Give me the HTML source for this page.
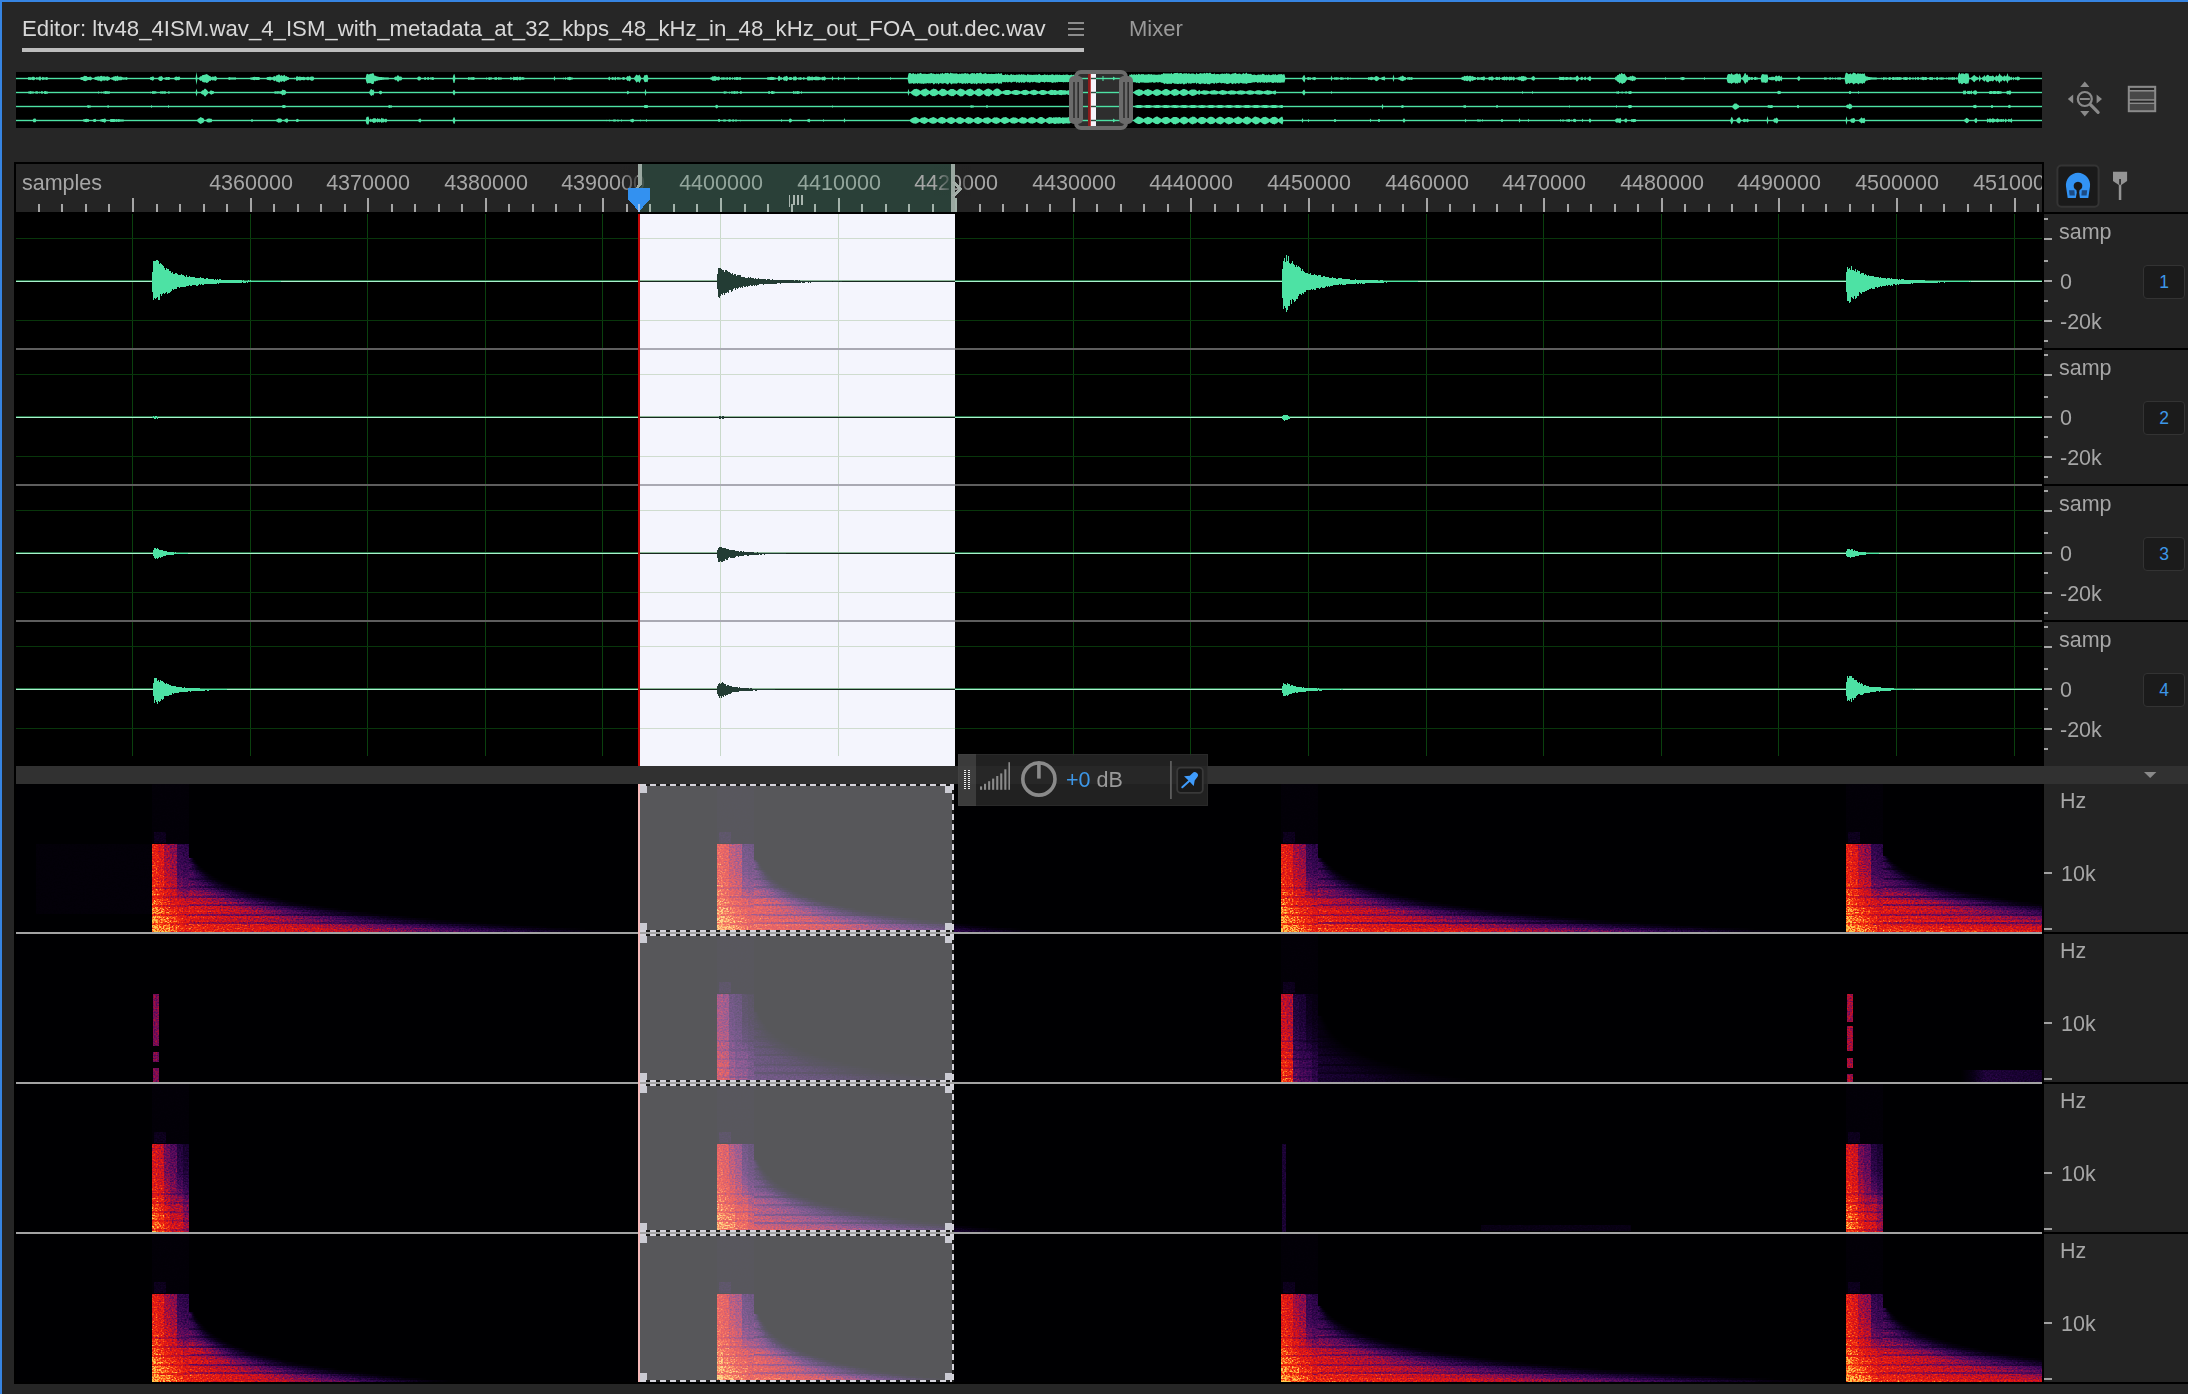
<!DOCTYPE html><html><head><meta charset="utf-8"><title>Editor</title><style>
*{box-sizing:border-box;margin:0;padding:0}
html,body{width:2188px;height:1394px;overflow:hidden;background:#262626}
body{position:relative;font-family:"Liberation Sans",sans-serif;color:#a6a6a6;font-size:21.5px}
.a{position:absolute}
.t{position:absolute;white-space:nowrap;line-height:1;will-change:transform}
svg{position:absolute;left:0;top:0;overflow:visible}
</style></head><body>
<div class="a" style="left:0;top:0;width:2188px;height:2px;background:#3684e2"></div>
<div class="a" style="left:0;top:0;width:2px;height:1394px;background:#3684e2"></div>
<div class="t" id="title" style="left:22px;top:18px;font-size:22.2px;color:#d8d8d8">Editor: ltv48_4ISM.wav_4_ISM_with_metadata_at_32_kbps_48_kHz_in_48_kHz_out_FOA_out.dec.wav</div>
<div class="a" style="left:22px;top:48px;width:1062px;height:4px;background:#bdbdbd"></div>
<div class="a" style="left:1068px;top:22px;width:16px;height:2px;background:#8c8c8c"></div>
<div class="a" style="left:1068px;top:28px;width:16px;height:2px;background:#8c8c8c"></div>
<div class="a" style="left:1068px;top:34px;width:16px;height:2px;background:#8c8c8c"></div>
<div class="t" id="mixer" style="left:1129px;top:18px;font-size:22px;color:#9a9a9a">Mixer</div>
<div class="a" style="left:16px;top:72px;width:2026px;height:56px;background:#000"></div>
<svg width="2188" height="140" viewBox="0 0 2188 140">
<rect x="16" y="77.8" width="2026" height="1.4" fill="#4de2a4"/>
<path fill="#4de2a4" d="M27.5,78.5 28.5,77.1 29.5,77.3 30.5,77.2 31.5,77.6 32.5,76.8 33.5,76.8 34.5,77.1 35.5,78.5 34.5,79.9 33.5,80.3 32.5,80.1 31.5,79.4 30.5,79.9 29.5,79.7 28.5,79.9zM35.5,78.5 36.5,77.1 37.5,77.5 38.5,77.5 39.5,76.6 40.5,76.5 41.5,78.5 40.5,80.4 39.5,80.4 38.5,79.4 37.5,79.5 36.5,79.8zM41.5,78.5 42.5,76.8 43.5,77.2 44.5,77.4 45.5,77.5 46.5,77.1 47.5,77.3 48.5,78.5 47.5,79.7 46.5,79.9 45.5,79.5 44.5,79.6 43.5,79.8 42.5,80.3zM79.5,78.5 80.5,77.5 81.5,77.1 82.5,77.1 83.5,76.4 84.5,75.8 85.5,75.9 86.5,76.1 87.5,76.9 88.5,76.9 89.5,76.8 90.5,76.5 91.5,77.2 92.5,78.5 91.5,79.8 90.5,80.5 89.5,80.1 88.5,80.1 87.5,80.2 86.5,80.8 85.5,81.3 84.5,81.1 83.5,80.8 82.5,79.9 81.5,79.9 80.5,79.5zM93.5,78.5 94.5,77.5 95.5,76.8 96.5,76.8 97.5,76.4 98.5,76.3 99.5,76.7 100.5,76.1 101.5,75.7 102.5,76.5 103.5,76.3 104.5,76.2 105.5,76.7 106.5,76.4 107.5,76.3 108.5,76.7 109.5,77.1 110.5,78.5 109.5,79.9 108.5,80.3 107.5,80.9 106.5,80.5 105.5,80.2 104.5,80.7 103.5,80.5 102.5,80.4 101.5,81.5 100.5,81.2 99.5,80.4 98.5,80.8 97.5,80.5 96.5,80 95.5,80 94.5,79.5zM110.5,78.5 111.5,77.4 112.5,77.2 113.5,76.4 114.5,76.4 115.5,75.9 116.5,76.4 117.5,75.6 118.5,76.8 119.5,76.8 120.5,76.5 121.5,76.7 122.5,77.3 123.5,77.4 124.5,77.6 125.5,77.5 126.5,77.1 127.5,77.7 128.5,78.5 127.5,79.3 126.5,79.9 125.5,79.5 124.5,79.5 123.5,79.7 122.5,79.6 121.5,80.3 120.5,80.3 119.5,80.3 118.5,80.3 117.5,81.1 116.5,80.5 115.5,81.2 114.5,80.6 113.5,80.5 112.5,79.8 111.5,79.6zM149.5,78.5 150.5,76.9 151.5,76.9 152.5,76.5 153.5,76.6 154.5,78.5 153.5,80.2 152.5,80.7 151.5,80.1 150.5,80.1zM157.5,78.5 158.5,77.4 159.5,76.6 160.5,76.4 161.5,76 162.5,77 163.5,78.5 162.5,80 161.5,80.9 160.5,80.9 159.5,80.7 158.5,79.7zM163.5,78.5 164.5,77.7 165.5,77.4 166.5,77.1 167.5,77.2 168.5,77.1 169.5,77.1 170.5,78.5 169.5,79.7 168.5,80 167.5,79.8 166.5,79.9 165.5,79.7 164.5,79.3zM173.5,78.5 174.5,77.6 175.5,76.7 176.5,76.4 177.5,76.9 178.5,76.8 179.5,76.6 180.5,78.5 179.5,80.1 178.5,80.2 177.5,80 176.5,80.4 175.5,80.2 174.5,79.4zM195.5,78.5 196.5,72.1 197.5,78.5 196.5,85zM198.5,78.5 199.5,77.2 200.5,76.3 201.5,76.3 202.5,75.1 203.5,74.9 204.5,74.7 205.5,74.4 206.5,74.1 207.5,74.6 208.5,75.2 209.5,76.1 210.5,76.2 211.5,77.3 212.5,76.5 213.5,76.7 214.5,76.6 215.5,76 216.5,77 217.5,78.5 216.5,80 215.5,81 214.5,80.4 213.5,80.3 212.5,80.5 211.5,79.7 210.5,80.9 209.5,80.8 208.5,82 207.5,82.7 206.5,83 205.5,82.3 204.5,82.4 203.5,82.2 202.5,82.1 201.5,80.6 200.5,81 199.5,79.9zM227.5,78.5 228.5,77.5 229.5,77 230.5,77.5 231.5,77.5 232.5,77.5 233.5,77.4 234.5,77.5 235.5,77.3 236.5,78.5 235.5,79.7 234.5,79.5 233.5,79.6 232.5,79.5 231.5,79.5 230.5,79.5 229.5,79.9 228.5,79.5zM249.5,78.5 250.5,77.6 251.5,77.4 252.5,77.3 253.5,77 254.5,76.8 255.5,77.1 256.5,77.1 257.5,77 258.5,77.1 259.5,77.3 260.5,78.5 259.5,79.7 258.5,79.9 257.5,80.1 256.5,79.9 255.5,79.8 254.5,80.3 253.5,80 252.5,79.8 251.5,79.7 250.5,79.4zM265.5,78.5 266.5,77.7 267.5,77.1 268.5,77.1 269.5,76.8 270.5,76.8 271.5,77.2 272.5,77.2 273.5,76.6 274.5,75.9 275.5,76.8 276.5,75.2 277.5,75.2 278.5,74.4 279.5,74.4 280.5,75.9 281.5,75 282.5,75.9 283.5,75.5 284.5,74.8 285.5,76.5 286.5,76.1 287.5,77 288.5,77.1 289.5,78.5 288.5,79.9 287.5,80 286.5,80.7 285.5,80.8 284.5,82.1 283.5,81.5 282.5,81.1 281.5,81.9 280.5,81.2 279.5,82.8 278.5,82.2 277.5,81.7 276.5,81.8 275.5,80.2 274.5,81.2 273.5,80.4 272.5,79.8 271.5,79.8 270.5,80.4 269.5,80.3 268.5,79.9 267.5,79.9 266.5,79.3zM293.5,78.5 294.5,77.5 295.5,78.5 294.5,79.5zM295.5,78.5 296.5,76.3 297.5,76.2 298.5,77.1 299.5,76.5 300.5,76.7 301.5,76.9 302.5,77.1 303.5,76.7 304.5,77 305.5,77.4 306.5,77.2 307.5,76.7 308.5,76.8 309.5,77.5 310.5,76.7 311.5,76.5 312.5,76.5 313.5,76.7 314.5,78.5 313.5,80.2 312.5,80.7 311.5,80.8 310.5,80.3 309.5,79.5 308.5,80.2 307.5,80.3 306.5,79.7 305.5,79.6 304.5,80.2 303.5,80.3 302.5,79.9 301.5,80 300.5,80.5 299.5,80.5 298.5,80 297.5,80.8 296.5,81zM365.5,78.5 366.5,74.3 367.5,73.7 368.5,74.5 369.5,74.2 370.5,73.8 371.5,73.8 372.5,73.3 373.5,73.2 374.5,75.8 375.5,75.7 376.5,76.2 377.5,76.4 378.5,76.8 379.5,76.9 380.5,77 381.5,77 382.5,77.3 383.5,77.3 384.5,77.5 385.5,77.5 386.5,77.6 387.5,77.6 388.5,77.6 389.5,78.5 388.5,79.4 387.5,79.4 386.5,79.5 385.5,79.5 384.5,79.6 383.5,79.7 382.5,79.7 381.5,80 380.5,80 379.5,80.3 378.5,80.2 377.5,80.7 376.5,80.7 375.5,81.5 374.5,81.1 373.5,83.9 372.5,84 371.5,83.7 370.5,83.1 369.5,83.2 368.5,83.1 367.5,83.7 366.5,82.5zM393.5,78.5 394.5,77.3 395.5,76.4 396.5,76.7 397.5,75.3 398.5,75.5 399.5,76.8 400.5,76.5 401.5,76.8 402.5,78.5 401.5,80.2 400.5,80.5 399.5,80.2 398.5,81.8 397.5,81.4 396.5,80.1 395.5,80.5 394.5,79.6zM416.5,78.5 417.5,77.5 418.5,76.6 419.5,76.6 420.5,76.9 421.5,78.5 420.5,80.1 419.5,80.4 418.5,80.6 417.5,79.5zM423.5,78.5 424.5,77.2 425.5,77.1 426.5,78.5 425.5,79.9 424.5,79.8zM426.5,78.5 427.5,77.3 428.5,77.1 429.5,78.5 428.5,79.9 427.5,79.8zM429.5,78.5 430.5,77.3 431.5,77.5 432.5,77 433.5,77.2 434.5,78.5 433.5,79.9 432.5,80 431.5,79.5 430.5,79.6zM452.5,78.5 453.5,74.7 454.5,73.9 455.5,78.5 454.5,83 453.5,82.9zM467.5,78.5 468.5,77.1 469.5,77.4 470.5,77.4 471.5,77.2 472.5,77.3 473.5,77.1 474.5,77.6 475.5,78.5 474.5,79.4 473.5,80 472.5,79.7 471.5,79.8 470.5,79.5 469.5,79.6 468.5,79.9zM485.5,78.5 486.5,77.2 487.5,78.5 486.5,79.7zM487.5,78.5 488.5,77.4 489.5,77.2 490.5,77.6 491.5,77.3 492.5,78.5 491.5,79.6 490.5,79.4 489.5,79.9 488.5,79.6zM493.5,78.5 494.5,77.4 495.5,77.2 496.5,76.9 497.5,78.5 496.5,80.1 495.5,79.8 494.5,79.6zM497.5,78.5 498.5,77 499.5,77.5 500.5,77.6 501.5,77.5 502.5,78.5 501.5,79.5 500.5,79.4 499.5,79.5 498.5,79.9zM509.5,78.5 510.5,77 511.5,77.5 512.5,78.5 511.5,79.5 510.5,79.8zM512.5,78.5 513.5,76.6 514.5,76.9 515.5,77.1 516.5,77 517.5,76.4 518.5,77.7 519.5,76.8 520.5,76.8 521.5,77.4 522.5,77.1 523.5,77.2 524.5,77.7 525.5,78.5 524.5,79.3 523.5,79.7 522.5,79.8 521.5,79.6 520.5,80.3 519.5,80.3 518.5,79.3 517.5,80.5 516.5,80.1 515.5,80 514.5,80.1 513.5,80.4zM553.5,78.5 554.5,76.1 555.5,78.5 554.5,81zM562.5,78.5 563.5,77.5 564.5,78.5 563.5,79.5zM564.5,78.5 565.5,76.9 566.5,78.5 565.5,80.1zM566.5,78.5 567.5,77.3 568.5,77.3 569.5,76.8 570.5,77.1 571.5,77.5 572.5,77.5 573.5,78.5 572.5,79.5 571.5,79.5 570.5,79.9 569.5,80.2 568.5,79.7 567.5,79.8zM607.5,78.5 608.5,77.5 609.5,76.6 610.5,78.5 609.5,80.4 608.5,79.5zM610.5,78.5 611.5,77.7 612.5,77 613.5,77.5 614.5,77.7 615.5,76.6 616.5,78.5 615.5,80.4 614.5,79.4 613.5,79.5 612.5,80 611.5,79.3zM616.5,78.5 617.5,77.1 618.5,77.3 619.5,77.4 620.5,77.7 621.5,78.5 620.5,79.4 619.5,79.6 618.5,79.6 617.5,79.8zM621.5,78.5 622.5,77.3 623.5,77 624.5,77.3 625.5,78.5 624.5,79.8 623.5,80.1 622.5,79.6zM625.5,78.5 626.5,77.3 627.5,76.1 628.5,76.5 629.5,75.4 630.5,76.5 631.5,78.5 630.5,80.6 629.5,81.6 628.5,80.5 627.5,80.9 626.5,79.7zM633.5,78.5 634.5,77.2 635.5,75.7 636.5,74.5 637.5,75.2 638.5,75.4 639.5,74.4 640.5,76.6 641.5,78.5 640.5,80.7 639.5,83.2 638.5,81.4 637.5,81.8 636.5,82.7 635.5,81 634.5,79.8zM642.5,78.5 643.5,77.4 644.5,75.1 645.5,75.2 646.5,74.7 647.5,75.1 648.5,78.5 647.5,82.3 646.5,81.8 645.5,82.2 644.5,82 643.5,79.6zM709.5,78.5 710.5,77.4 711.5,77.2 712.5,76.3 713.5,76.4 714.5,76.1 715.5,76.2 716.5,76.8 717.5,76.9 718.5,76.4 719.5,76.8 720.5,78.5 719.5,80 718.5,80.6 717.5,80.3 716.5,80.1 715.5,80.9 714.5,80.8 713.5,80.7 712.5,80.7 711.5,79.8 710.5,79.6zM720.5,78.5 721.5,77.2 722.5,77.4 723.5,77.2 724.5,77.5 725.5,77.7 726.5,77.5 727.5,76.9 728.5,78.5 727.5,80 726.5,79.5 725.5,79.3 724.5,79.5 723.5,79.8 722.5,79.6 721.5,79.8zM728.5,78.5 729.5,76.9 730.5,77.3 731.5,78.5 730.5,79.7 729.5,80zM731.5,78.5 732.5,77.1 733.5,78.5 732.5,80zM733.5,78.5 734.5,77 735.5,77.6 736.5,76.9 737.5,77.1 738.5,77.5 739.5,77.3 740.5,76.8 741.5,78.5 740.5,80.3 739.5,79.8 738.5,79.5 737.5,79.9 736.5,80.1 735.5,79.5 734.5,80zM766.5,78.5 767.5,77.3 768.5,77.3 769.5,77.2 770.5,77 771.5,76.8 772.5,77.1 773.5,77.1 774.5,77.5 775.5,77.6 776.5,78.5 775.5,79.4 774.5,79.6 773.5,79.9 772.5,80.1 771.5,80.1 770.5,80 769.5,79.8 768.5,79.7 767.5,79.7zM777.5,78.5 778.5,76.1 779.5,75.7 780.5,77.6 781.5,77.1 782.5,78.5 781.5,80 780.5,79.4 779.5,81.1 778.5,80.9zM782.5,78.5 783.5,77 784.5,76.5 785.5,76.6 786.5,75.8 787.5,76.6 788.5,78.5 787.5,80.5 786.5,81.3 785.5,80.5 784.5,80.7 783.5,80.2zM788.5,78.5 789.5,77 790.5,76.9 791.5,77.1 792.5,78.5 791.5,79.9 790.5,80.1 789.5,80zM792.5,78.5 793.5,76.5 794.5,76.8 795.5,76.3 796.5,77 797.5,78.5 796.5,79.9 795.5,80.6 794.5,80.2 793.5,80.4zM797.5,78.5 798.5,77.4 799.5,77.5 800.5,76.9 801.5,77.6 802.5,78.5 801.5,79.4 800.5,80.1 799.5,79.5 798.5,79.7zM802.5,78.5 803.5,76.9 804.5,77.6 805.5,78.5 804.5,79.3 803.5,80.1zM806.5,78.5 807.5,76.6 808.5,76.6 809.5,76.3 810.5,76.9 811.5,76.8 812.5,76.4 813.5,77.2 814.5,76.9 815.5,76.6 816.5,76.6 817.5,76.8 818.5,76.8 819.5,77 820.5,77.5 821.5,77.4 822.5,76.7 823.5,77.1 824.5,76.3 825.5,77.2 826.5,78.5 825.5,79.8 824.5,80.7 823.5,79.9 822.5,80.4 821.5,79.6 820.5,79.5 819.5,80.1 818.5,80.3 817.5,80.3 816.5,80.3 815.5,80.3 814.5,80 813.5,79.8 812.5,80.6 811.5,80.2 810.5,80.2 809.5,80.6 808.5,80.6 807.5,80.5zM831.5,78.5 832.5,76.1 833.5,78.5 832.5,80.8zM837.5,78.5 838.5,76.6 839.5,78.5 838.5,80.5zM843.5,78.5 844.5,76.2 845.5,78.5 844.5,80.8zM857.5,78.5 858.5,76.6 859.5,78.5 858.5,80.3zM889.5,78.5 890.5,77 891.5,78.5 890.5,79.9zM907.5,78.5 908.5,73.4 909.5,73.1 910.5,73.1 911.5,74 912.5,73.4 913.5,73 914.5,74.3 915.5,73.6 916.5,74.5 917.5,73.3 918.5,73.8 919.5,73.5 920.5,72.8 921.5,73.6 922.5,73.9 923.5,73.8 924.5,73.8 925.5,73.8 926.5,74.1 927.5,74 928.5,73.8 929.5,73.7 930.5,73.3 931.5,73 932.5,73.7 933.5,73.5 934.5,73.9 935.5,74.2 936.5,73.6 937.5,73.9 938.5,73.5 939.5,74.4 940.5,73.3 941.5,73.8 942.5,72.7 943.5,73.9 944.5,73.4 945.5,72.7 946.5,73.2 947.5,72.7 948.5,73.2 949.5,73.9 950.5,72.6 951.5,73.3 952.5,73.2 953.5,73.4 954.5,73.4 955.5,73.6 956.5,73.2 957.5,73.7 958.5,74.2 959.5,73.6 960.5,73.9 961.5,73.4 962.5,73.4 963.5,73.7 964.5,73.3 965.5,73.1 966.5,73.8 967.5,73.2 968.5,73.7 969.5,74.4 970.5,73.7 971.5,73.2 972.5,73.1 973.5,73.5 974.5,72.9 975.5,74.2 976.5,72.9 977.5,73.1 978.5,73.6 979.5,72.9 980.5,72.6 981.5,73.3 982.5,74.2 983.5,73.7 984.5,73.5 985.5,73 986.5,73.8 987.5,74.2 988.5,73.7 989.5,73.9 990.5,73.9 991.5,73.7 992.5,73.9 993.5,73.9 994.5,74 995.5,73.8 996.5,73.5 997.5,74.1 998.5,73 999.5,74 1000.5,73.6 1001.5,73 1002.5,74.9 1003.5,74.9 1004.5,74.9 1005.5,74.1 1006.5,74.9 1007.5,74.2 1008.5,74.9 1009.5,75.2 1010.5,74.5 1011.5,74.1 1012.5,75 1013.5,74.6 1014.5,75.1 1015.5,75.1 1016.5,74.4 1017.5,74.8 1018.5,74.6 1019.5,74.3 1020.5,74.9 1021.5,74.1 1022.5,74.7 1023.5,74.2 1024.5,74.7 1025.5,74.8 1026.5,75.5 1027.5,74 1028.5,74.4 1029.5,74.8 1030.5,74.8 1031.5,74.8 1032.5,74.9 1033.5,74.8 1034.5,74.8 1035.5,74.8 1036.5,74.4 1037.5,75 1038.5,74.2 1039.5,74.1 1040.5,74.9 1041.5,75.2 1042.5,75 1043.5,74.9 1044.5,74.2 1045.5,74.8 1046.5,75.1 1047.5,74.6 1048.5,75.3 1049.5,74.7 1050.5,75.1 1051.5,74.6 1052.5,74.2 1053.5,74.7 1054.5,75.2 1055.5,74.4 1056.5,74.8 1057.5,74.6 1058.5,75.1 1059.5,74.5 1060.5,74.9 1061.5,74.9 1062.5,75.1 1063.5,74.4 1064.5,75 1065.5,74.7 1066.5,74.6 1067.5,74.5 1068.5,75.1 1069.5,75.2 1070.5,75.1 1071.5,74.4 1072.5,75.3 1073.5,74.7 1074.5,74.8 1075.5,78.5 1074.5,81.9 1073.5,82.2 1072.5,81.8 1071.5,82.3 1070.5,81.6 1069.5,81.7 1068.5,82 1067.5,82.2 1066.5,82 1065.5,82.2 1064.5,82.1 1063.5,82.5 1062.5,82.1 1061.5,82.1 1060.5,81.9 1059.5,82 1058.5,81.8 1057.5,82.4 1056.5,82.1 1055.5,82.7 1054.5,82.2 1053.5,82.6 1052.5,82.9 1051.5,82.4 1050.5,82.1 1049.5,82.2 1048.5,82 1047.5,82.3 1046.5,81.8 1045.5,82.1 1044.5,82.8 1043.5,82.1 1042.5,82 1041.5,81.7 1040.5,82.3 1039.5,82.9 1038.5,82.7 1037.5,82.4 1036.5,82.4 1035.5,82.3 1034.5,81.8 1033.5,82.1 1032.5,82.4 1031.5,81.7 1030.5,82.4 1029.5,82.7 1028.5,82.1 1027.5,82.4 1026.5,81.6 1025.5,82 1024.5,82.7 1023.5,82.8 1022.5,82.1 1021.5,83 1020.5,81.8 1019.5,82.9 1018.5,82.5 1017.5,82.1 1016.5,82.9 1015.5,81.6 1014.5,81.9 1013.5,81.8 1012.5,82.1 1011.5,82.8 1010.5,82.2 1009.5,81.8 1008.5,82.3 1007.5,82.5 1006.5,81.8 1005.5,82.4 1004.5,81.9 1003.5,82.3 1002.5,81.8 1001.5,84 1000.5,83.3 999.5,83.4 998.5,83.9 997.5,82.4 996.5,83.3 995.5,83.6 994.5,82.8 993.5,83.2 992.5,83.5 991.5,83.5 990.5,83.2 989.5,83.4 988.5,83 987.5,83 986.5,83.4 985.5,83.9 984.5,83.2 983.5,83.7 982.5,82.8 981.5,84 980.5,83.4 979.5,83.4 978.5,83.1 977.5,83.6 976.5,84.5 975.5,83.3 974.5,83.9 973.5,83.2 972.5,83.8 971.5,83.9 970.5,83.4 969.5,83 968.5,83.1 967.5,84 966.5,82.9 965.5,83.9 964.5,83.3 963.5,83.5 962.5,84 961.5,83.4 960.5,83 959.5,83.5 958.5,82.5 957.5,83.2 956.5,83.8 955.5,83.5 954.5,83.4 953.5,83.4 952.5,83.5 951.5,84.4 950.5,83.6 949.5,82.6 948.5,84 947.5,84.5 946.5,83.7 945.5,83.3 944.5,83.1 943.5,83.6 942.5,83.7 941.5,83.5 940.5,82.9 939.5,83.2 938.5,84.4 937.5,83 936.5,83.7 935.5,83 934.5,83.9 933.5,84.4 932.5,83.1 931.5,83.1 930.5,83.6 929.5,83.3 928.5,83.5 927.5,83 926.5,83.5 925.5,83.6 924.5,83.4 923.5,84 922.5,83.6 921.5,83.8 920.5,83.6 919.5,83.4 918.5,83 917.5,84 916.5,83 915.5,83.6 914.5,83.4 913.5,84 912.5,83.1 911.5,83.4 910.5,83.4 909.5,83.7 908.5,83.3zM1128.5,78.5 1129.5,74.6 1130.5,75 1131.5,74.1 1132.5,74.8 1133.5,74.4 1134.5,74.3 1135.5,74.9 1136.5,73.9 1137.5,74.9 1138.5,73.8 1139.5,74.3 1140.5,74.8 1141.5,74 1142.5,74.3 1143.5,73.9 1144.5,74.8 1145.5,74.4 1146.5,74.6 1147.5,74.4 1148.5,74.1 1149.5,74.2 1150.5,74.6 1151.5,74.1 1152.5,74.7 1153.5,74.5 1154.5,74.4 1155.5,74.7 1156.5,74.7 1157.5,74.8 1158.5,74.4 1159.5,74.5 1160.5,74.7 1161.5,74.1 1162.5,74.2 1163.5,73.1 1164.5,73.5 1165.5,73.5 1166.5,73.4 1167.5,73.4 1168.5,73.6 1169.5,73.5 1170.5,73.7 1171.5,72.7 1172.5,74.2 1173.5,73.4 1174.5,73 1175.5,73.1 1176.5,73 1177.5,72.8 1178.5,73.4 1179.5,73.2 1180.5,73 1181.5,72.9 1182.5,74.1 1183.5,73.5 1184.5,73.3 1185.5,73.4 1186.5,73 1187.5,73.9 1188.5,73.3 1189.5,73.5 1190.5,73.9 1191.5,73.4 1192.5,73.4 1193.5,73.5 1194.5,74.1 1195.5,74.5 1196.5,72.8 1197.5,74.1 1198.5,73.9 1199.5,73.4 1200.5,73 1201.5,73.5 1202.5,73.4 1203.5,73.5 1204.5,72.7 1205.5,73.7 1206.5,72.7 1207.5,73.1 1208.5,73.6 1209.5,72.8 1210.5,72.8 1211.5,74.1 1212.5,74 1213.5,74 1214.5,73.2 1215.5,74.4 1216.5,73.9 1217.5,74.1 1218.5,74.1 1219.5,74.4 1220.5,74 1221.5,73.7 1222.5,73.5 1223.5,73.9 1224.5,73.4 1225.5,73.9 1226.5,73 1227.5,73.7 1228.5,73.5 1229.5,73.7 1230.5,74.5 1231.5,73.9 1232.5,73.6 1233.5,73.4 1234.5,73.2 1235.5,72.8 1236.5,73.7 1237.5,73.9 1238.5,73.7 1239.5,73.4 1240.5,73.9 1241.5,74.4 1242.5,73.8 1243.5,72.9 1244.5,73.9 1245.5,73.5 1246.5,72.6 1247.5,74 1248.5,73.7 1249.5,73.9 1250.5,73.7 1251.5,74.3 1252.5,75 1253.5,74.7 1254.5,74.5 1255.5,74.9 1256.5,75.3 1257.5,74.7 1258.5,74.6 1259.5,74.7 1260.5,74.4 1261.5,74.8 1262.5,73.7 1263.5,74.1 1264.5,74.4 1265.5,75.2 1266.5,74.5 1267.5,75.2 1268.5,74.3 1269.5,74.8 1270.5,75.2 1271.5,75.1 1272.5,74.4 1273.5,74.2 1274.5,74.7 1275.5,74.1 1276.5,75.2 1277.5,74.8 1278.5,74.2 1279.5,74.2 1280.5,74.3 1281.5,74 1282.5,74.8 1283.5,74.3 1284.5,74.3 1285.5,78.5 1284.5,82.4 1283.5,82.4 1282.5,82.4 1281.5,82.4 1280.5,82.7 1279.5,82.8 1278.5,82.6 1277.5,82.9 1276.5,82.3 1275.5,82.7 1274.5,82.3 1273.5,82.9 1272.5,83 1271.5,82.4 1270.5,81.9 1269.5,82.4 1268.5,82.3 1267.5,82.4 1266.5,83 1265.5,81.9 1264.5,83 1263.5,82.6 1262.5,82.6 1261.5,82 1260.5,83.1 1259.5,82.2 1258.5,82.6 1257.5,83 1256.5,81.9 1255.5,81.9 1254.5,82.5 1253.5,82.3 1252.5,82.5 1251.5,82.7 1250.5,83.1 1249.5,83.1 1248.5,83 1247.5,83.2 1246.5,84 1245.5,83.6 1244.5,83.5 1243.5,83.6 1242.5,83.4 1241.5,83.1 1240.5,82.8 1239.5,83.5 1238.5,83.7 1237.5,83.1 1236.5,83.3 1235.5,84.1 1234.5,83.3 1233.5,83.4 1232.5,84.3 1231.5,83.6 1230.5,82.8 1229.5,83.6 1228.5,83.7 1227.5,83.9 1226.5,84 1225.5,83.2 1224.5,83.6 1223.5,83.1 1222.5,83.1 1221.5,83.5 1220.5,82.9 1219.5,82.5 1218.5,83 1217.5,82.9 1216.5,83.7 1215.5,82.4 1214.5,84 1213.5,83.5 1212.5,82.9 1211.5,83.2 1210.5,83.4 1209.5,84.4 1208.5,83.9 1207.5,84.2 1206.5,83.3 1205.5,84.1 1204.5,84.1 1203.5,83.5 1202.5,83.4 1201.5,83.4 1200.5,84.3 1199.5,84 1198.5,83.4 1197.5,82.8 1196.5,84.2 1195.5,82.5 1194.5,83.2 1193.5,83.3 1192.5,83 1191.5,83.4 1190.5,83.8 1189.5,83.3 1188.5,83.7 1187.5,82.6 1186.5,84.1 1185.5,83.4 1184.5,84.2 1183.5,84.4 1182.5,83.3 1181.5,83.8 1180.5,84.1 1179.5,83.5 1178.5,83.9 1177.5,84 1176.5,83.8 1175.5,83.7 1174.5,83.7 1173.5,83.3 1172.5,82.8 1171.5,84 1170.5,83.7 1169.5,83.8 1168.5,83.8 1167.5,84 1166.5,83.8 1165.5,83.3 1164.5,84.3 1163.5,83.2 1162.5,82.7 1161.5,82.7 1160.5,82.3 1159.5,82.1 1158.5,82.6 1157.5,82.4 1156.5,82.1 1155.5,82.5 1154.5,82.7 1153.5,82.7 1152.5,82 1151.5,82.6 1150.5,82.4 1149.5,82.4 1148.5,82.7 1147.5,82.7 1146.5,82.7 1145.5,82.8 1144.5,82.7 1143.5,82.5 1142.5,82.6 1141.5,82.5 1140.5,82.3 1139.5,83.2 1138.5,82.9 1137.5,82.4 1136.5,82.9 1135.5,82.2 1134.5,82.2 1133.5,82.2 1132.5,82 1131.5,82.8 1130.5,82.2 1129.5,82.9zM1301.5,78.5 1302.5,77.3 1303.5,75.5 1304.5,75 1305.5,78.5 1304.5,82.5 1303.5,81.4 1302.5,79.8zM1306.5,78.5 1307.5,77.2 1308.5,77 1309.5,77.4 1310.5,77.2 1311.5,78.5 1310.5,79.9 1309.5,79.6 1308.5,80 1307.5,79.8zM1311.5,78.5 1312.5,77.5 1313.5,77.2 1314.5,76.9 1315.5,77.2 1316.5,78.5 1315.5,79.8 1314.5,80.3 1313.5,79.7 1312.5,79.5zM1330.5,78.5 1331.5,75.5 1332.5,78.5 1331.5,81.2zM1333.5,78.5 1334.5,77.2 1335.5,77.6 1336.5,77.3 1337.5,77.5 1338.5,77.5 1339.5,78.5 1338.5,79.4 1337.5,79.6 1336.5,79.7 1335.5,79.4 1334.5,79.8zM1339.5,78.5 1340.5,77.2 1341.5,77.3 1342.5,77.6 1343.5,77.7 1344.5,78.5 1343.5,79.4 1342.5,79.4 1341.5,79.7 1340.5,79.7zM1344.5,78.5 1345.5,77.6 1346.5,78.5 1345.5,79.3zM1346.5,78.5 1347.5,77.3 1348.5,77.6 1349.5,78.5 1348.5,79.4 1347.5,79.7zM1349.5,78.5 1350.5,77.4 1351.5,78.5 1350.5,79.6zM1367.5,78.5 1368.5,77.1 1369.5,77.4 1370.5,76.9 1371.5,76.7 1372.5,77.1 1373.5,77.4 1374.5,77.3 1375.5,76.2 1376.5,75.9 1377.5,76.6 1378.5,76.9 1379.5,78.5 1378.5,80.1 1377.5,80.7 1376.5,81.3 1375.5,80.8 1374.5,79.7 1373.5,79.6 1372.5,79.8 1371.5,80.2 1370.5,80.1 1369.5,79.6 1368.5,80zM1380.5,78.5 1381.5,77.5 1382.5,76.9 1383.5,76.8 1384.5,76.3 1385.5,78.5 1384.5,80.7 1383.5,80.1 1382.5,80.1 1381.5,79.6zM1392.5,78.5 1393.5,74.6 1394.5,78.5 1393.5,82zM1397.5,78.5 1398.5,77.5 1399.5,77.3 1400.5,76.4 1401.5,76.4 1402.5,75.5 1403.5,76.3 1404.5,77 1405.5,76.9 1406.5,78.5 1405.5,80.2 1404.5,80.2 1403.5,80.8 1402.5,81.2 1401.5,80.8 1400.5,80.5 1399.5,79.8 1398.5,79.5zM1406.5,78.5 1407.5,77.2 1408.5,77.3 1409.5,77.1 1410.5,77.4 1411.5,77 1412.5,77.6 1413.5,78.5 1412.5,79.5 1411.5,79.9 1410.5,79.6 1409.5,80 1408.5,79.6 1407.5,79.7zM1460.5,78.5 1461.5,77.5 1462.5,76.8 1463.5,76.7 1464.5,75.8 1465.5,76.3 1466.5,76.1 1467.5,75.5 1468.5,76.6 1469.5,75.7 1470.5,75.8 1471.5,76.5 1472.5,76.1 1473.5,76.8 1474.5,77 1475.5,77.1 1476.5,78.5 1475.5,79.9 1474.5,80 1473.5,80.2 1472.5,81.1 1471.5,80.3 1470.5,81.7 1469.5,81.4 1468.5,80.3 1467.5,81.3 1466.5,81.1 1465.5,80.6 1464.5,80.9 1463.5,80.3 1462.5,80.1 1461.5,79.6zM1476.5,78.5 1477.5,76.8 1478.5,77.3 1479.5,77.4 1480.5,77.5 1481.5,76.9 1482.5,76.9 1483.5,76.4 1484.5,76.5 1485.5,78.5 1484.5,80.3 1483.5,80.6 1482.5,80.1 1481.5,80 1480.5,79.5 1479.5,79.7 1478.5,79.7 1477.5,80.3zM1485.5,78.5 1486.5,77.7 1487.5,78.5 1486.5,79.3zM1487.5,78.5 1488.5,77.5 1489.5,76.7 1490.5,77.1 1491.5,76.6 1492.5,76.5 1493.5,77.4 1494.5,78.5 1493.5,79.7 1492.5,80.4 1491.5,80.4 1490.5,79.8 1489.5,80.4 1488.5,79.5zM1494.5,78.5 1495.5,77.5 1496.5,76.8 1497.5,77 1498.5,77.6 1499.5,76.6 1500.5,78.5 1499.5,80.2 1498.5,79.4 1497.5,80 1496.5,80.1 1495.5,79.4zM1500.5,78.5 1501.5,77.7 1502.5,77 1503.5,76.9 1504.5,76.3 1505.5,77.3 1506.5,76.6 1507.5,77.1 1508.5,77.4 1509.5,76.4 1510.5,77 1511.5,76.6 1512.5,77.4 1513.5,76.4 1514.5,77.2 1515.5,78.5 1514.5,79.9 1513.5,80.7 1512.5,79.5 1511.5,80.2 1510.5,79.9 1509.5,80.7 1508.5,79.6 1507.5,79.8 1506.5,80.5 1505.5,79.8 1504.5,80.4 1503.5,80.1 1502.5,79.9 1501.5,79.3zM1515.5,78.5 1516.5,77.6 1517.5,77.4 1518.5,76.9 1519.5,76.5 1520.5,76.9 1521.5,75.9 1522.5,76.2 1523.5,75.9 1524.5,76.5 1525.5,76.4 1526.5,77.3 1527.5,78.5 1526.5,79.7 1525.5,80.4 1524.5,80.6 1523.5,81.3 1522.5,81 1521.5,81.3 1520.5,80.1 1519.5,80.4 1518.5,80.1 1517.5,79.6 1516.5,79.3zM1530.5,78.5 1531.5,77.6 1532.5,76.6 1533.5,76 1534.5,76.8 1535.5,78.5 1534.5,80.2 1533.5,80.7 1532.5,80.3 1531.5,79.4zM1558.5,78.5 1559.5,76.6 1560.5,76.9 1561.5,76.9 1562.5,77 1563.5,76.7 1564.5,77.4 1565.5,77.2 1566.5,76.9 1567.5,77.1 1568.5,77.5 1569.5,77.6 1570.5,76.8 1571.5,77.2 1572.5,77.5 1573.5,77.5 1574.5,77.2 1575.5,77.3 1576.5,76 1577.5,75.5 1578.5,76.9 1579.5,78.5 1578.5,80 1577.5,81.3 1576.5,81.4 1575.5,79.6 1574.5,79.8 1573.5,79.4 1572.5,79.5 1571.5,79.8 1570.5,80.1 1569.5,79.4 1568.5,79.5 1567.5,79.8 1566.5,80.1 1565.5,79.8 1564.5,79.6 1563.5,80.3 1562.5,79.9 1561.5,80.1 1560.5,80 1559.5,80.2zM1579.5,78.5 1580.5,77.5 1581.5,76.8 1582.5,76.8 1583.5,78.5 1582.5,80 1581.5,80.2 1580.5,79.5zM1583.5,78.5 1584.5,77.1 1585.5,76.6 1586.5,78.5 1585.5,80.2 1584.5,79.9zM1586.5,78.5 1587.5,77.6 1588.5,77.2 1589.5,76.2 1590.5,76.3 1591.5,78.5 1590.5,81 1589.5,80.9 1588.5,79.9 1587.5,79.4zM1614.5,78.5 1615.5,76.8 1616.5,76.5 1617.5,75 1618.5,75 1619.5,73.5 1620.5,74.5 1621.5,72.8 1622.5,73.8 1623.5,74.3 1624.5,73.6 1625.5,75.3 1626.5,76.4 1627.5,77.4 1628.5,77.1 1629.5,76.8 1630.5,76.1 1631.5,76.4 1632.5,75.6 1633.5,76.3 1634.5,76.4 1635.5,77 1636.5,78.5 1635.5,80 1634.5,80.7 1633.5,80.4 1632.5,81.2 1631.5,80.5 1630.5,80.6 1629.5,80.1 1628.5,79.9 1627.5,79.6 1626.5,80.5 1625.5,82.1 1624.5,82.9 1623.5,82.9 1622.5,83.9 1621.5,83.5 1620.5,82.6 1619.5,83.7 1618.5,82.1 1617.5,81.7 1616.5,80.6 1615.5,80.2zM1664.5,78.5 1665.5,77.1 1666.5,78.5 1665.5,79.9zM1679.5,78.5 1680.5,77.6 1681.5,77.3 1682.5,76.9 1683.5,77 1684.5,77.4 1685.5,78.5 1684.5,79.5 1683.5,80 1682.5,80.2 1681.5,79.7 1680.5,79.4zM1703.5,78.5 1704.5,77 1705.5,78.5 1704.5,80zM1726.5,78.5 1727.5,74.7 1728.5,74.1 1729.5,73.9 1730.5,74.4 1731.5,73.1 1732.5,74.4 1733.5,74.8 1734.5,74.5 1735.5,74 1736.5,73.5 1737.5,73.5 1738.5,74.5 1739.5,73.4 1740.5,74.2 1741.5,78.5 1740.5,82.6 1739.5,82.9 1738.5,82.6 1737.5,83.7 1736.5,83 1735.5,83.7 1734.5,82.5 1733.5,82.8 1732.5,82.9 1731.5,83.9 1730.5,83 1729.5,83.2 1728.5,83 1727.5,82.4zM1741.5,78.5 1742.5,77.2 1743.5,76 1744.5,73.5 1745.5,73 1746.5,75.2 1747.5,74.5 1748.5,77.2 1749.5,76.7 1750.5,77.6 1751.5,76.9 1752.5,77.1 1753.5,78.5 1752.5,80 1751.5,80.1 1750.5,79.3 1749.5,80.2 1748.5,79.9 1747.5,82.5 1746.5,82 1745.5,83.9 1744.5,83.1 1743.5,80.8 1742.5,79.8zM1753.5,78.5 1754.5,77 1755.5,76.8 1756.5,77.4 1757.5,77.5 1758.5,78.5 1757.5,79.5 1756.5,79.6 1755.5,80.1 1754.5,80.1zM1760.5,78.5 1761.5,74.9 1762.5,74.1 1763.5,74.3 1764.5,74.6 1765.5,74.4 1766.5,74.4 1767.5,74.5 1768.5,78.5 1767.5,82.5 1766.5,82.5 1765.5,82.9 1764.5,82.4 1763.5,82.6 1762.5,82.6 1761.5,82.5zM1768.5,78.5 1769.5,77 1770.5,77.2 1771.5,76.8 1772.5,76.7 1773.5,76.8 1774.5,77.2 1775.5,75.9 1776.5,75.4 1777.5,76.5 1778.5,75.7 1779.5,75.6 1780.5,77 1781.5,75.7 1782.5,78.5 1781.5,81.6 1780.5,79.9 1779.5,81.4 1778.5,81 1777.5,80.5 1776.5,81.5 1775.5,81.2 1774.5,79.7 1773.5,80.3 1772.5,80.2 1771.5,80.2 1770.5,79.9 1769.5,80zM1796.5,78.5 1797.5,77.6 1798.5,76.2 1799.5,76.3 1800.5,78.5 1799.5,80.6 1798.5,80.9 1797.5,79.5zM1823.5,78.5 1824.5,77.3 1825.5,77.5 1826.5,77.4 1827.5,78.5 1826.5,79.6 1825.5,79.4 1824.5,79.7zM1828.5,78.5 1829.5,77.5 1830.5,77.3 1831.5,78.5 1830.5,79.7 1829.5,79.5zM1831.5,78.5 1832.5,77.3 1833.5,78.5 1832.5,79.6zM1834.5,78.5 1835.5,77.3 1836.5,78.5 1835.5,79.7zM1836.5,78.5 1837.5,77.6 1838.5,77.5 1839.5,77.4 1840.5,77.3 1841.5,78.5 1840.5,79.7 1839.5,79.6 1838.5,79.5 1837.5,79.4zM1844.5,78.5 1845.5,73.4 1846.5,72.6 1847.5,73.3 1848.5,74.3 1849.5,73.9 1850.5,73.3 1851.5,74.4 1852.5,73.6 1853.5,72.6 1854.5,72.9 1855.5,73.3 1856.5,74.4 1857.5,73.3 1858.5,73.5 1859.5,73.7 1860.5,73.6 1861.5,74.1 1862.5,73.5 1863.5,74 1864.5,73.1 1865.5,76 1866.5,76.4 1867.5,76.4 1868.5,77.1 1869.5,77.1 1870.5,77.2 1871.5,77.3 1872.5,77.5 1873.5,77.4 1874.5,77.6 1875.5,77.6 1876.5,77.6 1877.5,78.5 1876.5,79.4 1875.5,79.4 1874.5,79.4 1873.5,79.5 1872.5,79.5 1871.5,79.6 1870.5,79.8 1869.5,79.9 1868.5,80.1 1867.5,80.5 1866.5,80.6 1865.5,81.2 1864.5,83.4 1863.5,82.8 1862.5,83.9 1861.5,83.2 1860.5,83.3 1859.5,83.2 1858.5,84.4 1857.5,83.5 1856.5,82.9 1855.5,83.3 1854.5,83.8 1853.5,84.4 1852.5,83.2 1851.5,82.8 1850.5,82.9 1849.5,83.9 1848.5,82.8 1847.5,83.8 1846.5,84.3 1845.5,83.7zM1880.5,78.5 1881.5,77.4 1882.5,78.5 1881.5,79.6zM1882.5,78.5 1883.5,76.9 1884.5,77.4 1885.5,77.6 1886.5,77.4 1887.5,78.5 1886.5,79.7 1885.5,79.3 1884.5,79.6 1883.5,80.2zM1887.5,78.5 1888.5,77.7 1889.5,77.1 1890.5,77.2 1891.5,78.5 1890.5,79.7 1889.5,79.9 1888.5,79.4zM1891.5,78.5 1892.5,77.1 1893.5,77.1 1894.5,77.4 1895.5,77.2 1896.5,77.3 1897.5,77.1 1898.5,77.2 1899.5,77 1900.5,77.3 1901.5,77.4 1902.5,78.5 1901.5,79.6 1900.5,79.7 1899.5,80 1898.5,79.8 1897.5,79.9 1896.5,79.8 1895.5,79.8 1894.5,79.7 1893.5,80 1892.5,79.9zM1902.5,78.5 1903.5,77.2 1904.5,77.2 1905.5,77.1 1906.5,77.2 1907.5,77.3 1908.5,78.5 1907.5,79.7 1906.5,79.9 1905.5,79.9 1904.5,79.8 1903.5,79.8zM1908.5,78.5 1909.5,77.1 1910.5,77.2 1911.5,78.5 1910.5,79.8 1909.5,79.9zM1911.5,78.5 1912.5,77.6 1913.5,77.4 1914.5,78.5 1913.5,79.6 1912.5,79.4zM1914.5,78.5 1915.5,76.7 1916.5,78.5 1915.5,80.2zM1916.5,78.5 1917.5,77.1 1918.5,77 1919.5,78.5 1918.5,80.1 1917.5,79.8zM1919.5,78.5 1920.5,77.4 1921.5,77.4 1922.5,76.8 1923.5,76.9 1924.5,77.3 1925.5,77 1926.5,76.9 1927.5,78.5 1926.5,80 1925.5,79.9 1924.5,79.8 1923.5,80.2 1922.5,80.1 1921.5,79.6 1920.5,79.6zM1928.5,78.5 1929.5,77.2 1930.5,77 1931.5,77.2 1932.5,77 1933.5,78.5 1932.5,80.2 1931.5,79.8 1930.5,80.1 1929.5,79.8zM1933.5,78.5 1934.5,77.6 1935.5,78.5 1934.5,79.4zM1935.5,78.5 1936.5,77.3 1937.5,76.8 1938.5,78.5 1937.5,80.2 1936.5,79.7zM1938.5,78.5 1939.5,77.5 1940.5,77.4 1941.5,77.3 1942.5,77.6 1943.5,77.4 1944.5,78.5 1943.5,79.6 1942.5,79.4 1941.5,79.7 1940.5,79.6 1939.5,79.6zM1945.5,78.5 1946.5,77.3 1947.5,78.5 1946.5,79.6zM1947.5,78.5 1948.5,77.2 1949.5,77.5 1950.5,77.5 1951.5,77.6 1952.5,76.9 1953.5,77.6 1954.5,77.1 1955.5,78.5 1954.5,80 1953.5,79.4 1952.5,80.1 1951.5,79.4 1950.5,79.6 1949.5,79.6 1948.5,79.7zM1955.5,78.5 1956.5,77.1 1957.5,78.5 1956.5,79.8zM1957.5,78.5 1958.5,73.9 1959.5,72.6 1960.5,74.4 1961.5,73.3 1962.5,73.5 1963.5,73.4 1964.5,74.3 1965.5,73.2 1966.5,73.2 1967.5,73.5 1968.5,73.6 1969.5,78.5 1968.5,83.4 1967.5,83.5 1966.5,83.8 1965.5,83.9 1964.5,82.9 1963.5,82.9 1962.5,84.1 1961.5,84.3 1960.5,83.1 1959.5,83.7 1958.5,83.1zM1970.5,78.5 1971.5,77.3 1972.5,76.5 1973.5,75.6 1974.5,75.1 1975.5,76.2 1976.5,76.7 1977.5,76.9 1978.5,78.5 1977.5,80.1 1976.5,80.3 1975.5,80.8 1974.5,82.2 1973.5,81.7 1972.5,80.6 1971.5,79.8zM1978.5,78.5 1979.5,75.1 1980.5,77.4 1981.5,78.5 1980.5,79.7 1979.5,81.9zM1981.5,78.5 1982.5,77 1983.5,76.4 1984.5,75 1985.5,76.9 1986.5,75.4 1987.5,74.7 1988.5,74.9 1989.5,76.2 1990.5,75.9 1991.5,76.3 1992.5,75.6 1993.5,76 1994.5,77.6 1995.5,76.5 1996.5,75.2 1997.5,76.5 1998.5,75.5 1999.5,73.3 2000.5,75.3 2001.5,75.8 2002.5,76.8 2003.5,76.4 2004.5,75.3 2005.5,76.6 2006.5,76 2007.5,73 2008.5,76.6 2009.5,76.3 2010.5,77.4 2011.5,76.6 2012.5,78.5 2011.5,80.2 2010.5,79.6 2009.5,80.6 2008.5,80.5 2007.5,83.4 2006.5,80.9 2005.5,80.3 2004.5,81.5 2003.5,80.8 2002.5,80.1 2001.5,81.4 2000.5,81.3 1999.5,83.6 1998.5,81.7 1997.5,80.6 1996.5,81.7 1995.5,80.4 1994.5,79.4 1993.5,81.1 1992.5,81.5 1991.5,80.7 1990.5,81.2 1989.5,81.1 1988.5,82.2 1987.5,82.2 1986.5,81.8 1985.5,80.1 1984.5,81.7 1983.5,80.7 1982.5,80zM2012.5,78.5 2013.5,76.7 2014.5,78.5 2013.5,80.5zM2014.5,78.5 2015.5,76.9 2016.5,77.6 2017.5,76.6 2018.5,76.7 2019.5,77.2 2020.5,78.5 2019.5,79.8 2018.5,80.3 2017.5,80.5 2016.5,79.5 2015.5,80z"/>
<rect x="16" y="91.8" width="2026" height="1.4" fill="#4de2a4"/>
<path fill="#4de2a4" d="M27.5,92.5 28.5,91.5 29.5,91.4 30.5,91.1 31.5,91.5 32.5,91.4 33.5,91.4 34.5,92.5 33.5,93.6 32.5,93.5 31.5,93.5 30.5,94 29.5,93.6 28.5,93.5zM34.5,92.5 35.5,91.4 36.5,91.3 37.5,91.2 38.5,92.5 37.5,93.7 36.5,93.6 35.5,93.5zM38.5,92.5 39.5,91.6 40.5,92.5 39.5,93.4zM40.5,92.5 41.5,91.1 42.5,91.3 43.5,92.5 42.5,93.7 41.5,93.8zM43.5,92.5 44.5,91 45.5,90.9 46.5,91.4 47.5,91.4 48.5,92.5 47.5,93.7 46.5,93.7 45.5,93.9 44.5,93.9zM97.5,92.5 98.5,91.3 99.5,92.5 98.5,93.7zM100.5,92.5 101.5,91.6 102.5,92.5 101.5,93.4zM102.5,92.5 103.5,91.4 104.5,91.4 105.5,90.9 106.5,91.3 107.5,91.2 108.5,91.4 109.5,91.2 110.5,92.5 109.5,93.8 108.5,93.7 107.5,93.8 106.5,93.7 105.5,94 104.5,93.5 103.5,93.5zM149.5,92.5 150.5,91.5 151.5,92.5 150.5,93.4zM151.5,92.5 152.5,91.1 153.5,91.2 154.5,91.3 155.5,91.3 156.5,91.7 157.5,92.5 156.5,93.3 155.5,93.6 154.5,93.7 153.5,93.8 152.5,93.9zM159.5,92.5 160.5,91.3 161.5,91.6 162.5,91.3 163.5,91.6 164.5,91.2 165.5,91.3 166.5,92.5 165.5,93.7 164.5,93.8 163.5,93.4 162.5,93.7 161.5,93.4 160.5,93.7zM167.5,92.5 168.5,91.3 169.5,91.6 170.5,92.5 169.5,93.4 168.5,93.8zM195.5,92.5 196.5,88.5 197.5,92.5 196.5,96.4zM200.5,92.5 201.5,91.2 202.5,90.3 203.5,90.3 204.5,88.8 205.5,88.8 206.5,89.8 207.5,90.7 208.5,92.5 207.5,94.2 206.5,95 205.5,96.6 204.5,96.2 203.5,94.7 202.5,94.6 201.5,93.9zM208.5,92.5 209.5,91.7 210.5,90.5 211.5,90.5 212.5,90.9 213.5,91.1 214.5,92.5 213.5,93.8 212.5,94 211.5,94.7 210.5,94.3 209.5,93.3zM273.5,92.5 274.5,91.6 275.5,91.2 276.5,91.5 277.5,91.2 278.5,91.3 279.5,91.6 280.5,91.3 281.5,90.9 282.5,89.4 283.5,90.1 284.5,89.9 285.5,90.6 286.5,92.5 285.5,94.3 284.5,95.1 283.5,94.8 282.5,95.6 281.5,94.2 280.5,93.7 279.5,93.4 278.5,93.6 277.5,93.8 276.5,93.6 275.5,93.7 274.5,93.4zM368.5,92.5 369.5,91.5 370.5,89.4 371.5,89.1 372.5,90.2 373.5,89.6 374.5,92.5 373.5,95.5 372.5,95 371.5,96.1 370.5,95.2 369.5,93.5zM378.5,92.5 379.5,91.1 380.5,90.7 381.5,90.9 382.5,92.5 381.5,93.9 380.5,94.5 379.5,93.8zM452.5,92.5 453.5,89.9 454.5,89.9 455.5,92.5 454.5,95.3 453.5,95.1zM626.5,92.5 627.5,90.8 628.5,91.2 629.5,92.5 628.5,93.7 627.5,94.4zM644.5,92.5 645.5,88.7 646.5,92.5 645.5,96.1zM722.5,92.5 723.5,91.7 724.5,91.3 725.5,91.6 726.5,91.6 727.5,92.5 726.5,93.3 725.5,93.4 724.5,93.7 723.5,93.3zM728.5,92.5 729.5,91.4 730.5,92.5 729.5,93.7zM730.5,92.5 731.5,91.3 732.5,91.6 733.5,91.5 734.5,91.1 735.5,91.5 736.5,91.4 737.5,91.1 738.5,92.5 737.5,93.8 736.5,93.6 735.5,93.6 734.5,94 733.5,93.5 732.5,93.4 731.5,93.7zM739.5,92.5 740.5,91 741.5,91.2 742.5,92.5 741.5,93.8 740.5,93.9zM767.5,92.5 768.5,91.2 769.5,91 770.5,92.5 769.5,93.9 768.5,93.7zM770.5,92.5 771.5,91 772.5,91.1 773.5,91.4 774.5,91.6 775.5,92.5 774.5,93.5 773.5,93.7 772.5,93.9 771.5,94zM792.5,92.5 793.5,90.8 794.5,91.7 795.5,91.2 796.5,91.6 797.5,91 798.5,91.2 799.5,91.6 800.5,92.5 799.5,93.4 798.5,93.7 797.5,94 796.5,93.4 795.5,93.8 794.5,93.4 793.5,94.1zM800.5,92.5 801.5,91.1 802.5,92.5 801.5,93.9zM907.5,92.5 908.5,88.8 909.5,92.5 908.5,96.1zM910.5,92.5 911.5,91.2 912.5,90.4 913.5,89.4 914.5,89.1 915.5,88.9 916.5,88.7 917.5,89.3 918.5,89.6 919.5,90.2 920.5,91.1 921.5,90.2 922.5,89.5 923.5,89.2 924.5,88.9 925.5,88.6 926.5,88.8 927.5,89.7 928.5,90.3 929.5,91.1 930.5,90.4 931.5,89.5 932.5,89.3 933.5,88.6 934.5,88.9 935.5,89 936.5,89.4 937.5,90.4 938.5,91.2 939.5,90.4 940.5,89.7 941.5,88.8 942.5,88.8 943.5,88.9 944.5,89.1 945.5,89.8 946.5,90.5 947.5,91 948.5,90.5 949.5,89.8 950.5,88.9 951.5,89.1 952.5,89.1 953.5,89.1 954.5,89.7 955.5,90.2 956.5,91.1 957.5,90.4 958.5,89.6 959.5,88.9 960.5,88.5 961.5,89.1 962.5,89.3 963.5,89.5 964.5,90.4 965.5,91.1 966.5,90.3 967.5,89.4 968.5,89.2 969.5,88.9 970.5,88.5 971.5,89.3 972.5,89.5 973.5,90.4 974.5,91.2 975.5,90.2 976.5,89.8 977.5,88.8 978.5,88.8 979.5,88.6 980.5,89.3 981.5,89.7 982.5,90.4 983.5,91.1 984.5,90.2 985.5,89.8 986.5,88.9 987.5,88.7 988.5,88.6 989.5,89 990.5,89.4 991.5,90.1 992.5,91.1 993.5,90.4 994.5,89.5 995.5,89 996.5,88.5 997.5,88.5 998.5,88.8 999.5,89.5 1000.5,90.2 1001.5,91.2 1002.5,91.4 1003.5,90.8 1004.5,90.6 1005.5,90.1 1006.5,90.1 1007.5,90.1 1008.5,89.9 1009.5,90.3 1010.5,91 1011.5,91.4 1012.5,90.8 1013.5,90.4 1014.5,90.1 1015.5,89.9 1016.5,89.9 1017.5,90.3 1018.5,90.4 1019.5,90.8 1020.5,91.4 1021.5,90.9 1022.5,90.4 1023.5,90.1 1024.5,90.1 1025.5,89.8 1026.5,90.1 1027.5,90.5 1028.5,90.9 1029.5,91.4 1030.5,90.9 1031.5,90.3 1032.5,90.2 1033.5,89.8 1034.5,89.8 1035.5,90 1036.5,90.6 1037.5,90.9 1038.5,91.4 1039.5,90.9 1040.5,90.5 1041.5,90.1 1042.5,90.1 1043.5,90 1044.5,90.2 1045.5,90.6 1046.5,90.9 1047.5,91.4 1048.5,90.9 1049.5,90.4 1050.5,90.1 1051.5,89.7 1052.5,89.9 1053.5,90.2 1054.5,90 1055.5,90.1 1056.5,90.4 1057.5,90.7 1058.5,90.5 1059.5,90.1 1060.5,90.1 1061.5,90.1 1062.5,90.2 1063.5,90.2 1064.5,90.2 1065.5,90.2 1066.5,90.7 1067.5,90.4 1068.5,90.2 1069.5,90.1 1070.5,89.9 1071.5,90.2 1072.5,92.5 1071.5,94.9 1070.5,94.9 1069.5,95.1 1068.5,95 1067.5,94.4 1066.5,94.3 1065.5,94.8 1064.5,94.7 1063.5,94.7 1062.5,94.8 1061.5,95.2 1060.5,95.1 1059.5,94.9 1058.5,94.5 1057.5,94.5 1056.5,94.8 1055.5,94.9 1054.5,94.9 1053.5,94.8 1052.5,95.1 1051.5,95 1050.5,94.9 1049.5,94.6 1048.5,94 1047.5,93.6 1046.5,94.1 1045.5,94.4 1044.5,94.8 1043.5,95.1 1042.5,95.1 1041.5,95 1040.5,94.5 1039.5,94.1 1038.5,93.6 1037.5,94 1036.5,94.5 1035.5,95 1034.5,94.9 1033.5,95.2 1032.5,94.8 1031.5,94.6 1030.5,94.1 1029.5,93.6 1028.5,94.1 1027.5,94.7 1026.5,94.7 1025.5,95.2 1024.5,94.9 1023.5,95.1 1022.5,94.6 1021.5,94 1020.5,93.6 1019.5,94.2 1018.5,94.6 1017.5,95 1016.5,95 1015.5,95 1014.5,94.8 1013.5,94.5 1012.5,94.2 1011.5,93.6 1010.5,94 1009.5,94.6 1008.5,94.9 1007.5,94.9 1006.5,95.1 1005.5,94.9 1004.5,94.4 1003.5,94.1 1002.5,93.6 1001.5,93.9 1000.5,94.6 999.5,95.5 998.5,96 997.5,96 996.5,96.2 995.5,95.7 994.5,95.5 993.5,94.7 992.5,93.8 991.5,94.9 990.5,95.3 989.5,96.2 988.5,96.5 987.5,96 986.5,96.2 985.5,95.6 984.5,94.7 983.5,93.8 982.5,94.7 981.5,95.2 980.5,96.1 979.5,96.2 978.5,96.3 977.5,96 976.5,95.2 975.5,94.7 974.5,93.9 973.5,94.5 972.5,95.2 971.5,95.9 970.5,95.9 969.5,96.3 968.5,95.8 967.5,95.3 966.5,94.7 965.5,93.9 964.5,94.5 963.5,95.5 962.5,96.2 961.5,96.3 960.5,96.5 959.5,96.1 958.5,95.3 957.5,94.7 956.5,93.8 955.5,94.8 954.5,95.2 953.5,96.2 952.5,96.1 951.5,96.2 950.5,95.8 949.5,95.5 948.5,94.7 947.5,93.9 946.5,94.8 945.5,95.6 944.5,95.8 943.5,96 942.5,96.3 941.5,95.9 940.5,95.3 939.5,94.7 938.5,93.9 937.5,94.8 936.5,95.3 935.5,95.8 934.5,96.3 933.5,96 932.5,96.2 931.5,95.4 930.5,94.9 929.5,93.8 928.5,94.6 927.5,95.3 926.5,95.6 925.5,96.5 924.5,96.3 923.5,96.2 922.5,95.5 921.5,94.8 920.5,93.9 919.5,94.8 918.5,95.5 917.5,95.9 916.5,96.5 915.5,96.2 914.5,95.8 913.5,95.5 912.5,94.8 911.5,93.9zM1133.5,92.5 1134.5,91.3 1135.5,90.5 1136.5,89.9 1137.5,89.7 1138.5,89.3 1139.5,89.3 1140.5,89.7 1141.5,89.8 1142.5,90.5 1143.5,91.2 1144.5,90.4 1145.5,89.8 1146.5,89.7 1147.5,89.1 1148.5,89.3 1149.5,89.7 1150.5,90.1 1151.5,90.4 1152.5,91.3 1153.5,90.7 1154.5,89.9 1155.5,89.5 1156.5,89.3 1157.5,89.2 1158.5,89.4 1159.5,90.1 1160.5,90.6 1161.5,91.3 1162.5,90.6 1163.5,90.1 1164.5,89.3 1165.5,89.1 1166.5,89.1 1167.5,89.3 1168.5,90 1169.5,90.5 1170.5,91.2 1171.5,90.6 1172.5,89.8 1173.5,89.4 1174.5,89.1 1175.5,89 1176.5,89.2 1177.5,90 1178.5,90.6 1179.5,91.2 1180.5,90.6 1181.5,89.9 1182.5,89.3 1183.5,89 1184.5,88.9 1185.5,89.4 1186.5,89.7 1187.5,90.6 1188.5,91.3 1189.5,90.6 1190.5,90.1 1191.5,89.5 1192.5,89.5 1193.5,89.5 1194.5,89.6 1195.5,89.8 1196.5,90.6 1197.5,91.3 1198.5,90.5 1199.5,89.7 1200.5,91.5 1201.5,91 1202.5,90.8 1203.5,90.3 1204.5,90.3 1205.5,90.4 1206.5,90.6 1207.5,90.8 1208.5,91.1 1209.5,91.5 1210.5,91.1 1211.5,90.6 1212.5,90.4 1213.5,90.2 1214.5,90.1 1215.5,90.5 1216.5,90.7 1217.5,91 1218.5,91.5 1219.5,91.1 1220.5,90.7 1221.5,90.3 1222.5,90.1 1223.5,90.3 1224.5,90.4 1225.5,90.7 1226.5,91 1227.5,91.5 1228.5,91.1 1229.5,90.8 1230.5,90.6 1231.5,90.2 1232.5,90.4 1233.5,90.4 1234.5,90.8 1235.5,91 1236.5,91.5 1237.5,91.1 1238.5,90.7 1239.5,90.5 1240.5,90.2 1241.5,90.5 1242.5,90.6 1243.5,90.8 1244.5,91.1 1245.5,91.5 1246.5,91.2 1247.5,90.8 1248.5,90.5 1249.5,90.2 1250.5,90.3 1251.5,90.4 1252.5,90.7 1253.5,91.1 1254.5,91.5 1255.5,91.1 1256.5,90.6 1257.5,90.3 1258.5,90.2 1259.5,90.2 1260.5,90.4 1261.5,90.8 1262.5,91.1 1263.5,91.5 1264.5,91 1265.5,90.7 1266.5,90.4 1267.5,90.1 1268.5,90.4 1269.5,90.5 1270.5,90.7 1271.5,91 1272.5,91.5 1273.5,91.1 1274.5,90.7 1275.5,90.3 1276.5,92.5 1275.5,94.6 1274.5,94.4 1273.5,93.9 1272.5,93.5 1271.5,93.9 1270.5,94.2 1269.5,94.6 1268.5,94.7 1267.5,94.8 1266.5,94.6 1265.5,94.3 1264.5,93.9 1263.5,93.5 1262.5,93.9 1261.5,94.4 1260.5,94.5 1259.5,94.7 1258.5,94.6 1257.5,94.4 1256.5,94.3 1255.5,94 1254.5,93.5 1253.5,94 1252.5,94.4 1251.5,94.5 1250.5,94.8 1249.5,94.8 1248.5,94.5 1247.5,94.2 1246.5,93.8 1245.5,93.5 1244.5,93.9 1243.5,94.2 1242.5,94.5 1241.5,94.8 1240.5,94.6 1239.5,94.5 1238.5,94.4 1237.5,93.9 1236.5,93.5 1235.5,93.9 1234.5,94.4 1233.5,94.6 1232.5,94.6 1231.5,94.5 1230.5,94.7 1229.5,94.3 1228.5,94 1227.5,93.5 1226.5,94 1225.5,94.4 1224.5,94.5 1223.5,94.8 1222.5,94.9 1221.5,94.4 1220.5,94.4 1219.5,93.9 1218.5,93.5 1217.5,94 1216.5,94.4 1215.5,94.5 1214.5,94.6 1213.5,94.6 1212.5,94.5 1211.5,94.4 1210.5,93.9 1209.5,93.5 1208.5,93.8 1207.5,94.2 1206.5,94.5 1205.5,94.8 1204.5,94.8 1203.5,94.5 1202.5,94.2 1201.5,94 1200.5,93.5 1199.5,95 1198.5,94.6 1197.5,93.8 1196.5,94.5 1195.5,95 1194.5,95.5 1193.5,95.8 1192.5,95.9 1191.5,95.7 1190.5,94.9 1189.5,94.4 1188.5,93.7 1187.5,94.5 1186.5,95.1 1185.5,95.5 1184.5,95.8 1183.5,96 1182.5,95.7 1181.5,95.2 1180.5,94.6 1179.5,93.7 1178.5,94.4 1177.5,95.3 1176.5,95.4 1175.5,95.6 1174.5,96 1173.5,95.7 1172.5,94.9 1171.5,94.6 1170.5,93.8 1169.5,94.6 1168.5,95 1167.5,95.5 1166.5,95.7 1165.5,95.6 1164.5,95.4 1163.5,95 1162.5,94.4 1161.5,93.8 1160.5,94.4 1159.5,95.1 1158.5,95.5 1157.5,95.8 1156.5,95.9 1155.5,95.7 1154.5,95 1153.5,94.5 1152.5,93.7 1151.5,94.5 1150.5,95 1149.5,95.4 1148.5,95.9 1147.5,95.9 1146.5,95.4 1145.5,95.1 1144.5,94.6 1143.5,93.7 1142.5,94.4 1141.5,95.2 1140.5,95.5 1139.5,95.9 1138.5,96 1137.5,95.4 1136.5,95.1 1135.5,94.6 1134.5,93.7zM1301.5,92.5 1302.5,91.5 1303.5,90 1304.5,89.8 1305.5,92.5 1304.5,95.3 1303.5,95.2 1302.5,93.4zM1330.5,92.5 1331.5,90.9 1332.5,92.5 1331.5,94.1zM1521.5,92.5 1522.5,91 1523.5,92.5 1522.5,93.9zM1531.5,92.5 1532.5,91 1533.5,92.5 1532.5,94.1zM1615.5,92.5 1616.5,91.4 1617.5,91.7 1618.5,91.1 1619.5,92.5 1618.5,94 1617.5,93.4 1616.5,93.6zM1620.5,92.5 1621.5,91.7 1622.5,91.5 1623.5,92.5 1622.5,93.5 1621.5,93.3zM1624.5,92.5 1625.5,91.6 1626.5,91.3 1627.5,92.5 1626.5,93.6 1625.5,93.5zM1627.5,92.5 1628.5,91.5 1629.5,91.2 1630.5,91 1631.5,91.4 1632.5,92.5 1631.5,93.6 1630.5,94 1629.5,93.9 1628.5,93.4zM1776.5,92.5 1777.5,91.6 1778.5,90.7 1779.5,91 1780.5,91.2 1781.5,92.5 1780.5,93.8 1779.5,94.1 1778.5,94.2 1777.5,93.4zM1848.5,92.5 1849.5,91.1 1850.5,91.1 1851.5,92.5 1850.5,93.9 1849.5,94zM1857.5,92.5 1858.5,91 1859.5,92.5 1858.5,93.9zM1962.5,92.5 1963.5,90.5 1964.5,90.8 1965.5,90.3 1966.5,92.5 1965.5,94.5 1964.5,94.3 1963.5,94.6zM1966.5,92.5 1967.5,90.8 1968.5,91.1 1969.5,90.7 1970.5,91.4 1971.5,90.3 1972.5,92.5 1971.5,94.6 1970.5,93.6 1969.5,94.2 1968.5,94 1967.5,94.1zM1972.5,92.5 1973.5,91 1974.5,90.6 1975.5,90.3 1976.5,90.7 1977.5,92.5 1976.5,94.3 1975.5,94.7 1974.5,94.4 1973.5,94zM1988.5,92.5 1989.5,91.2 1990.5,91 1991.5,90.9 1992.5,91.5 1993.5,91.1 1994.5,90.9 1995.5,91 1996.5,91.4 1997.5,91.1 1998.5,90.9 1999.5,91.3 2000.5,91.3 2001.5,91.5 2002.5,92.5 2001.5,93.6 2000.5,93.7 1999.5,93.8 1998.5,94 1997.5,94 1996.5,93.5 1995.5,94.1 1994.5,94 1993.5,93.9 1992.5,93.5 1991.5,94 1990.5,93.9 1989.5,93.9zM2005.5,92.5 2006.5,91.5 2007.5,90.7 2008.5,91 2009.5,90.4 2010.5,90.5 2011.5,92.5 2010.5,94.6 2009.5,94.7 2008.5,94 2007.5,94.4 2006.5,93.4z"/>
<rect x="16" y="105.8" width="2026" height="1.4" fill="#4de2a4"/>
<path fill="#4de2a4" d="M86.5,106.5 87.5,105.3 88.5,105.3 89.5,105.5 90.5,105.6 91.5,106.5 90.5,107.4 89.5,107.5 88.5,107.9 87.5,107.6zM106.5,106.5 107.5,105.5 108.5,105.2 109.5,106.5 108.5,107.7 107.5,107.5zM150.5,106.5 151.5,105 152.5,106.5 151.5,108.1zM167.5,106.5 168.5,105 169.5,106.5 168.5,108.1zM281.5,106.5 282.5,105.2 283.5,105 284.5,105.1 285.5,105.4 286.5,106.5 285.5,107.5 284.5,107.9 283.5,107.9 282.5,107.7zM387.5,106.5 388.5,105.5 389.5,105 390.5,105.5 391.5,105.3 392.5,106.5 391.5,107.8 390.5,107.5 389.5,107.9 388.5,107.5zM643.5,106.5 644.5,105.1 645.5,105 646.5,105.1 647.5,104.9 648.5,106.5 647.5,108 646.5,108 645.5,108 644.5,108zM714.5,106.5 715.5,105.4 716.5,104.7 717.5,105.1 718.5,106.5 717.5,107.9 716.5,108.5 715.5,107.6zM831.5,106.5 832.5,105.2 833.5,106.5 832.5,107.8zM969.5,106.5 970.5,105.4 971.5,105.3 972.5,105.6 973.5,105.6 974.5,106.5 973.5,107.4 972.5,107.4 971.5,107.7 970.5,107.5zM985.5,106.5 986.5,105.2 987.5,105.3 988.5,106.5 987.5,107.8 986.5,107.7zM1134.5,106.5 1135.5,105.5 1136.5,105.3 1137.5,105 1138.5,105 1139.5,104.9 1140.5,105.1 1141.5,105.3 1142.5,105.5 1143.5,105.7 1144.5,105.4 1145.5,105.2 1146.5,105.1 1147.5,104.9 1148.5,104.9 1149.5,105.1 1150.5,105.2 1151.5,105.4 1152.5,105.7 1153.5,105.4 1154.5,105.2 1155.5,105.2 1156.5,105 1157.5,105.1 1158.5,105.1 1159.5,105.3 1160.5,105.5 1161.5,105.7 1162.5,105.4 1163.5,105.3 1164.5,105.1 1165.5,105 1166.5,104.9 1167.5,105.2 1168.5,105.2 1169.5,105.5 1170.5,105.7 1171.5,105.4 1172.5,105.3 1173.5,105.1 1174.5,105 1175.5,104.9 1176.5,105.2 1177.5,105.2 1178.5,105.4 1179.5,105.7 1180.5,105.4 1181.5,105.2 1182.5,105.1 1183.5,105 1184.5,104.9 1185.5,105.1 1186.5,105.3 1187.5,105.4 1188.5,105.7 1189.5,105.4 1190.5,105.3 1191.5,105 1192.5,105 1193.5,104.9 1194.5,105.1 1195.5,105.2 1196.5,105.4 1197.5,105.7 1198.5,105.5 1199.5,105.2 1200.5,105.2 1201.5,104.9 1202.5,105 1203.5,105.2 1204.5,105.2 1205.5,105.4 1206.5,105.7 1207.5,105.4 1208.5,105.2 1209.5,105.1 1210.5,105 1211.5,104.9 1212.5,105 1213.5,105.2 1214.5,105.5 1215.5,105.7 1216.5,105.5 1217.5,105.3 1218.5,105.1 1219.5,105.1 1220.5,105 1221.5,105 1222.5,105.2 1223.5,105.4 1224.5,105.7 1225.5,105.4 1226.5,105.3 1227.5,105.1 1228.5,105.1 1229.5,104.9 1230.5,105.1 1231.5,105.2 1232.5,105.5 1233.5,105.7 1234.5,105.4 1235.5,105.3 1236.5,105 1237.5,105 1238.5,105.1 1239.5,105.2 1240.5,105.2 1241.5,105.4 1242.5,105.7 1243.5,105.4 1244.5,105.3 1245.5,105.1 1246.5,105 1247.5,105 1248.5,105.1 1249.5,105.2 1250.5,105.5 1251.5,105.7 1252.5,105.4 1253.5,105.2 1254.5,105.1 1255.5,105 1256.5,105 1257.5,105.1 1258.5,105.3 1259.5,105.4 1260.5,105.7 1261.5,105.4 1262.5,105.2 1263.5,105.1 1264.5,105 1265.5,105.1 1266.5,105.1 1267.5,105.3 1268.5,105.4 1269.5,105.7 1270.5,105.4 1271.5,105.3 1272.5,105.1 1273.5,105 1274.5,105 1275.5,105.1 1276.5,105.3 1277.5,105.5 1278.5,105.7 1279.5,105.4 1280.5,105.3 1281.5,105.1 1282.5,105 1283.5,106.5 1282.5,107.9 1281.5,108 1280.5,107.8 1279.5,107.5 1278.5,107.3 1277.5,107.6 1276.5,107.7 1275.5,108 1274.5,107.9 1273.5,108 1272.5,107.9 1271.5,107.8 1270.5,107.5 1269.5,107.3 1268.5,107.5 1267.5,107.8 1266.5,108 1265.5,107.9 1264.5,108 1263.5,107.8 1262.5,107.8 1261.5,107.5 1260.5,107.3 1259.5,107.5 1258.5,107.7 1257.5,107.9 1256.5,108.1 1255.5,108 1254.5,107.9 1253.5,107.8 1252.5,107.6 1251.5,107.3 1250.5,107.6 1249.5,107.8 1248.5,108 1247.5,107.9 1246.5,108 1245.5,108 1244.5,107.7 1243.5,107.6 1242.5,107.3 1241.5,107.6 1240.5,107.7 1239.5,107.9 1238.5,107.9 1237.5,107.9 1236.5,107.9 1235.5,107.8 1234.5,107.6 1233.5,107.3 1232.5,107.5 1231.5,107.7 1230.5,108 1229.5,107.9 1228.5,108.1 1227.5,107.8 1226.5,107.7 1225.5,107.5 1224.5,107.3 1223.5,107.5 1222.5,107.8 1221.5,107.9 1220.5,108 1219.5,108 1218.5,107.9 1217.5,107.7 1216.5,107.5 1215.5,107.3 1214.5,107.5 1213.5,107.7 1212.5,108 1211.5,108 1210.5,108.1 1209.5,108 1208.5,107.7 1207.5,107.6 1206.5,107.3 1205.5,107.5 1204.5,107.8 1203.5,108 1202.5,108 1201.5,108 1200.5,107.9 1199.5,107.8 1198.5,107.5 1197.5,107.3 1196.5,107.5 1195.5,107.7 1194.5,108 1193.5,107.9 1192.5,108.1 1191.5,107.9 1190.5,107.7 1189.5,107.5 1188.5,107.3 1187.5,107.6 1186.5,107.8 1185.5,107.9 1184.5,107.9 1183.5,108.1 1182.5,107.8 1181.5,107.7 1180.5,107.6 1179.5,107.3 1178.5,107.5 1177.5,107.7 1176.5,107.9 1175.5,108 1174.5,107.9 1173.5,107.8 1172.5,107.7 1171.5,107.6 1170.5,107.3 1169.5,107.6 1168.5,107.7 1167.5,107.9 1166.5,108.1 1165.5,108 1164.5,107.9 1163.5,107.7 1162.5,107.5 1161.5,107.3 1160.5,107.5 1159.5,107.8 1158.5,107.9 1157.5,108 1156.5,108 1155.5,107.9 1154.5,107.8 1153.5,107.6 1152.5,107.3 1151.5,107.6 1150.5,107.8 1149.5,107.9 1148.5,108 1147.5,108 1146.5,108 1145.5,107.7 1144.5,107.5 1143.5,107.3 1142.5,107.5 1141.5,107.7 1140.5,107.9 1139.5,107.9 1138.5,107.9 1137.5,107.9 1136.5,107.8 1135.5,107.5zM1381.5,106.5 1382.5,103.7 1383.5,106.5 1382.5,109.4zM1400.5,106.5 1401.5,105.4 1402.5,105 1403.5,105.4 1404.5,106.5 1403.5,107.6 1402.5,108 1401.5,107.7zM1462.5,106.5 1463.5,105.5 1464.5,105.3 1465.5,105.1 1466.5,106.5 1465.5,107.9 1464.5,107.7 1463.5,107.5zM1495.5,106.5 1496.5,105.2 1497.5,105.1 1498.5,106.5 1497.5,107.8 1496.5,107.8zM1568.5,106.5 1569.5,105.3 1570.5,106.5 1569.5,107.7zM1615.5,106.5 1616.5,104.9 1617.5,106.5 1616.5,107.9zM1627.5,106.5 1628.5,105.2 1629.5,105 1630.5,105 1631.5,105.2 1632.5,106.5 1631.5,107.7 1630.5,108.1 1629.5,108.2 1628.5,107.8zM1731.5,106.5 1732.5,105.7 1733.5,104.5 1734.5,103.4 1735.5,103.4 1736.5,103.6 1737.5,104.5 1738.5,104.9 1739.5,106.5 1738.5,108.1 1737.5,108.6 1736.5,109.2 1735.5,109.8 1734.5,109.5 1733.5,108.6 1732.5,107.4zM1766.5,106.5 1767.5,105.7 1768.5,105.1 1769.5,105.2 1770.5,105.2 1771.5,105 1772.5,105.2 1773.5,106.5 1772.5,107.8 1771.5,107.9 1770.5,108 1769.5,107.8 1768.5,107.8 1767.5,107.3zM1796.5,106.5 1797.5,104.9 1798.5,104.9 1799.5,106.5 1798.5,108.3 1797.5,108.1zM1845.5,106.5 1846.5,105.3 1847.5,104.6 1848.5,104.8 1849.5,103.5 1850.5,104.1 1851.5,104.4 1852.5,106.5 1851.5,108.5 1850.5,108.7 1849.5,109.3 1848.5,108.2 1847.5,108.3 1846.5,107.6zM1972.5,106.5 1973.5,105.2 1974.5,105.1 1975.5,104.8 1976.5,105.4 1977.5,106.5 1976.5,107.6 1975.5,108.2 1974.5,107.9 1973.5,107.8zM1990.5,106.5 1991.5,105 1992.5,105 1993.5,106.5 1992.5,107.9 1991.5,108zM2007.5,106.5 2008.5,105.3 2009.5,104.7 2010.5,105.4 2011.5,106.5 2010.5,107.6 2009.5,108.1 2008.5,107.7z"/>
<rect x="16" y="119.8" width="2026" height="1.4" fill="#4de2a4"/>
<path fill="#4de2a4" d="M32.5,120.5 33.5,118.7 34.5,118.4 35.5,118.6 36.5,120.5 35.5,122.3 34.5,122.3 33.5,122.3zM82.5,120.5 83.5,119.3 84.5,119.2 85.5,119 86.5,118.7 87.5,119.1 88.5,119.1 89.5,120.5 88.5,121.9 87.5,121.8 86.5,122.3 85.5,122 84.5,121.8 83.5,121.6zM92.5,120.5 93.5,119.2 94.5,118.9 95.5,118.8 96.5,120.5 95.5,122.1 94.5,122 93.5,121.7zM99.5,120.5 100.5,119.6 101.5,119.3 102.5,118.9 103.5,119 104.5,118.4 105.5,118.8 106.5,120.5 105.5,122.2 104.5,122.7 103.5,122 102.5,122.1 101.5,121.6 100.5,121.4zM109.5,120.5 110.5,118.9 111.5,119 112.5,119 113.5,118.9 114.5,119.1 115.5,119.6 116.5,118.9 117.5,119.4 118.5,119 119.5,119.3 120.5,119.4 121.5,119.4 122.5,119.4 123.5,119.5 124.5,120.5 123.5,121.5 122.5,121.6 121.5,121.5 120.5,121.6 119.5,121.7 118.5,122 117.5,121.6 116.5,122.1 115.5,121.4 114.5,122 113.5,122.1 112.5,121.9 111.5,122 110.5,122zM196.5,120.5 197.5,119.6 198.5,118.5 199.5,118 200.5,117.1 201.5,117.5 202.5,118.1 203.5,118.3 204.5,120.5 203.5,122.5 202.5,123.1 201.5,123.5 200.5,124 199.5,123.3 198.5,122.6 197.5,121.4zM205.5,120.5 206.5,119.6 207.5,118.7 208.5,118.5 209.5,118.6 210.5,118.8 211.5,118.8 212.5,120.5 211.5,122.2 210.5,122.2 209.5,122.5 208.5,122.4 207.5,122.2 206.5,121.4zM250.5,120.5 251.5,119.3 252.5,119.3 253.5,120.5 252.5,121.7 251.5,121.7zM275.5,120.5 276.5,119.5 277.5,119.1 278.5,118.3 279.5,118.5 280.5,118.6 281.5,119 282.5,120.5 281.5,121.9 280.5,122.4 279.5,122.4 278.5,122.7 277.5,122 276.5,121.4zM283.5,120.5 284.5,119.7 285.5,119.1 286.5,118.4 287.5,118.6 288.5,120.5 287.5,122.6 286.5,122.7 285.5,121.8 284.5,121.4zM295.5,120.5 296.5,119.2 297.5,118.8 298.5,119.4 299.5,120.5 298.5,121.5 297.5,122.1 296.5,121.9zM365.5,120.5 366.5,117 367.5,116.7 368.5,116.5 369.5,120.5 368.5,124.5 367.5,124.6 366.5,124zM369.5,120.5 370.5,118.6 371.5,119.6 372.5,119.1 373.5,118.3 374.5,118.3 375.5,118.3 376.5,119.5 377.5,118.1 378.5,119.1 379.5,118.5 380.5,119.7 381.5,117.8 382.5,118.6 383.5,118.4 384.5,119.5 385.5,118.7 386.5,118.8 387.5,120.5 386.5,122.2 385.5,122.4 384.5,121.5 383.5,122.5 382.5,122.3 381.5,123 380.5,121.4 379.5,122.6 378.5,121.8 377.5,122.8 376.5,121.5 375.5,122.5 374.5,122.8 373.5,122.9 372.5,122 371.5,121.4 370.5,122.2zM417.5,120.5 418.5,119.6 419.5,118.8 420.5,118.6 421.5,120.5 420.5,122.4 419.5,122.2 418.5,121.4zM452.5,120.5 453.5,117.4 454.5,117.3 455.5,120.5 454.5,124 453.5,123.6zM605.5,120.5 606.5,119.7 607.5,120.5 606.5,121.3zM608.5,120.5 609.5,119.4 610.5,120.5 609.5,121.6zM612.5,120.5 613.5,119.4 614.5,119.5 615.5,119.5 616.5,120.5 615.5,121.5 614.5,121.5 613.5,121.6zM616.5,120.5 617.5,119.5 618.5,119.7 619.5,120.5 618.5,121.4 617.5,121.4zM620.5,120.5 621.5,119.2 622.5,120.5 621.5,121.8zM629.5,120.5 630.5,119.6 631.5,119.2 632.5,118.7 633.5,119 634.5,120.5 633.5,122 632.5,122.4 631.5,121.9 630.5,121.4zM639.5,120.5 640.5,119.4 641.5,120.5 640.5,121.6zM645.5,120.5 646.5,119.1 647.5,120.5 646.5,122.1zM717.5,120.5 718.5,119.1 719.5,119 720.5,120.5 719.5,122.1 718.5,121.8zM722.5,120.5 723.5,119.6 724.5,119.6 725.5,119.4 726.5,120.5 725.5,121.6 724.5,121.5 723.5,121.5zM727.5,120.5 728.5,119.5 729.5,119.2 730.5,119.4 731.5,120.5 730.5,121.6 729.5,121.7 728.5,121.5zM731.5,120.5 732.5,119.4 733.5,119.3 734.5,120.5 733.5,121.7 732.5,121.6zM734.5,120.5 735.5,119.5 736.5,119.6 737.5,120.5 736.5,121.4 735.5,121.5zM739.5,120.5 740.5,119.7 741.5,120.5 740.5,121.4zM780.5,120.5 781.5,118.9 782.5,120.5 781.5,122.1zM788.5,120.5 789.5,118.8 790.5,118.5 791.5,119.3 792.5,120.5 791.5,121.7 790.5,122.5 789.5,122.4zM806.5,120.5 807.5,119.5 808.5,119.1 809.5,118.7 810.5,120.5 809.5,122.4 808.5,122 807.5,121.5zM822.5,120.5 823.5,119 824.5,120.5 823.5,121.9zM843.5,120.5 844.5,118.1 845.5,120.5 844.5,122.7zM909.5,120.5 910.5,119.3 911.5,118.4 912.5,118 913.5,117.6 914.5,117.3 915.5,117 916.5,117.2 917.5,117.9 918.5,118.5 919.5,119.2 920.5,118.6 921.5,117.8 922.5,117.5 923.5,117.5 924.5,116.9 925.5,117.4 926.5,118 927.5,118.5 928.5,119.2 929.5,118.5 930.5,118.1 931.5,117.7 932.5,117.3 933.5,117.1 934.5,117.5 935.5,118 936.5,118.6 937.5,119.2 938.5,118.4 939.5,117.7 940.5,117.3 941.5,117 942.5,117.1 943.5,117.4 944.5,117.7 945.5,118.7 946.5,119.3 947.5,118.4 948.5,117.7 949.5,117.5 950.5,117.2 951.5,117.1 952.5,117.6 953.5,117.8 954.5,118.4 955.5,119.3 956.5,118.5 957.5,117.7 958.5,117.3 959.5,117.2 960.5,117.1 961.5,117.7 962.5,118 963.5,118.5 964.5,119.2 965.5,118.7 966.5,117.8 967.5,117.3 968.5,117.1 969.5,117.4 970.5,117.4 971.5,117.9 972.5,118.5 973.5,119.2 974.5,118.5 975.5,117.8 976.5,117.6 977.5,117 978.5,117 979.5,117.7 980.5,118 981.5,118.5 982.5,119.2 983.5,118.6 984.5,117.8 985.5,117.7 986.5,117.4 987.5,117.2 988.5,117.3 989.5,118.1 990.5,118.5 991.5,119.2 992.5,118.4 993.5,117.8 994.5,117.3 995.5,117.5 996.5,117.2 997.5,117.5 998.5,118 999.5,118.6 1000.5,119.2 1001.5,118.4 1002.5,117.8 1003.5,117.3 1004.5,117.2 1005.5,117 1006.5,117.2 1007.5,118 1008.5,118.5 1009.5,119.2 1010.5,118.5 1011.5,118 1012.5,117.4 1013.5,117.3 1014.5,117.5 1015.5,117.6 1016.5,117.9 1017.5,118.4 1018.5,119.2 1019.5,118.6 1020.5,117.9 1021.5,117.2 1022.5,117 1023.5,117.5 1024.5,117.4 1025.5,117.7 1026.5,118.5 1027.5,119.2 1028.5,118.5 1029.5,117.8 1030.5,117.4 1031.5,117 1032.5,117.3 1033.5,117.3 1034.5,118.1 1035.5,118.6 1036.5,119.2 1037.5,118.7 1038.5,118 1039.5,117.3 1040.5,117.1 1041.5,117 1042.5,117.3 1043.5,118 1044.5,118.4 1045.5,119.2 1046.5,118.4 1047.5,117.9 1048.5,117.5 1049.5,117 1050.5,117.3 1051.5,117.3 1052.5,118.1 1053.5,117.3 1054.5,117.5 1055.5,117.2 1056.5,117.3 1057.5,117.5 1058.5,117.2 1059.5,117.1 1060.5,117.6 1061.5,118.1 1062.5,117.2 1063.5,117.4 1064.5,117.4 1065.5,117.4 1066.5,117.6 1067.5,117.4 1068.5,117 1069.5,117.4 1070.5,117.8 1071.5,118.6 1072.5,120.5 1071.5,122.5 1070.5,122.9 1069.5,123.4 1068.5,123.5 1067.5,123.6 1066.5,123.3 1065.5,123.4 1064.5,123.6 1063.5,124 1062.5,123.7 1061.5,123 1060.5,123.5 1059.5,123.5 1058.5,123.7 1057.5,123.4 1056.5,123.4 1055.5,123.9 1054.5,124.1 1053.5,123.6 1052.5,122.9 1051.5,123.6 1050.5,123.6 1049.5,124 1048.5,123.7 1047.5,122.9 1046.5,122.5 1045.5,121.8 1044.5,122.6 1043.5,123.1 1042.5,123.7 1041.5,123.9 1040.5,123.8 1039.5,123.5 1038.5,123.1 1037.5,122.5 1036.5,121.8 1035.5,122.4 1034.5,122.9 1033.5,123.3 1032.5,123.7 1031.5,123.5 1030.5,123.6 1029.5,123 1028.5,122.5 1027.5,121.7 1026.5,122.6 1025.5,123.3 1024.5,123.4 1023.5,123.8 1022.5,123.6 1021.5,123.5 1020.5,123 1019.5,122.4 1018.5,121.8 1017.5,122.6 1016.5,123 1015.5,123.3 1014.5,123.7 1013.5,123.6 1012.5,123.5 1011.5,123.2 1010.5,122.6 1009.5,121.8 1008.5,122.6 1007.5,123.1 1006.5,123.3 1005.5,123.8 1004.5,124 1003.5,123.7 1002.5,122.9 1001.5,122.6 1000.5,121.7 999.5,122.6 998.5,123.2 997.5,123.6 996.5,123.9 995.5,123.7 994.5,123.4 993.5,123.1 992.5,122.4 991.5,121.7 990.5,122.5 989.5,123.1 988.5,123.7 987.5,124.1 986.5,123.5 985.5,123.6 984.5,123.1 983.5,122.4 982.5,121.7 981.5,122.6 980.5,122.9 979.5,123.5 978.5,124 977.5,123.9 976.5,123.6 975.5,123.2 974.5,122.6 973.5,121.8 972.5,122.6 971.5,123 970.5,123.8 969.5,123.6 968.5,123.9 967.5,123.4 966.5,123.1 965.5,122.4 964.5,121.8 963.5,122.6 962.5,123.1 961.5,123.7 960.5,123.9 959.5,123.8 958.5,123.7 957.5,122.9 956.5,122.4 955.5,121.7 954.5,122.4 953.5,122.9 952.5,123.7 951.5,124 950.5,124.1 949.5,123.4 948.5,123.1 947.5,122.5 946.5,121.7 945.5,122.6 944.5,123.3 943.5,123.3 942.5,124 941.5,123.6 940.5,123.6 939.5,122.9 938.5,122.4 937.5,121.8 936.5,122.4 935.5,123.3 934.5,123.4 933.5,123.8 932.5,123.8 931.5,123.6 930.5,123.1 929.5,122.4 928.5,121.8 927.5,122.3 926.5,122.9 925.5,123.6 924.5,123.9 923.5,123.7 922.5,123.3 921.5,123 920.5,122.3 919.5,121.8 918.5,122.6 917.5,123 916.5,123.5 915.5,123.8 914.5,123.6 913.5,123.6 912.5,123 911.5,122.5 910.5,121.8zM1133.5,120.5 1134.5,119.2 1135.5,118.4 1136.5,117.5 1137.5,116.8 1138.5,116.6 1139.5,117.1 1140.5,117.3 1141.5,117.8 1142.5,118.2 1143.5,119.1 1144.5,118.2 1145.5,117.8 1146.5,117.4 1147.5,116.7 1148.5,117.1 1149.5,117.2 1150.5,117.8 1151.5,118.1 1152.5,119.1 1153.5,118.2 1154.5,117.6 1155.5,116.9 1156.5,116.6 1157.5,116.5 1158.5,117.2 1159.5,117.7 1160.5,118.2 1161.5,119 1162.5,118.3 1163.5,117.4 1164.5,117.3 1165.5,117 1166.5,117.1 1167.5,117 1168.5,117.7 1169.5,118.4 1170.5,119 1171.5,118.2 1172.5,117.5 1173.5,116.9 1174.5,117 1175.5,116.9 1176.5,116.9 1177.5,117.4 1178.5,118.1 1179.5,119.2 1180.5,118.5 1181.5,117.6 1182.5,117.2 1183.5,116.8 1184.5,116.7 1185.5,116.9 1186.5,117.4 1187.5,118.2 1188.5,119.1 1189.5,118.3 1190.5,117.4 1191.5,117.2 1192.5,116.5 1193.5,116.7 1194.5,116.8 1195.5,117.6 1196.5,118.2 1197.5,119.2 1198.5,118.5 1199.5,117.4 1200.5,117.2 1201.5,117 1202.5,116.9 1203.5,116.9 1204.5,117.7 1205.5,118.1 1206.5,119.1 1207.5,118.4 1208.5,117.4 1209.5,116.9 1210.5,116.7 1211.5,116.7 1212.5,117 1213.5,117.4 1214.5,118.3 1215.5,119.2 1216.5,118.4 1217.5,117.8 1218.5,117.3 1219.5,116.7 1220.5,116.8 1221.5,116.9 1222.5,117.4 1223.5,118.2 1224.5,119.1 1225.5,118.2 1226.5,117.8 1227.5,117.2 1228.5,117.1 1229.5,117 1230.5,117.4 1231.5,117.5 1232.5,118.1 1233.5,119.1 1234.5,118.2 1235.5,117.7 1236.5,117.4 1237.5,116.7 1238.5,116.6 1239.5,117.2 1240.5,117.7 1241.5,118.3 1242.5,119 1243.5,118.4 1244.5,117.8 1245.5,116.8 1246.5,116.9 1247.5,116.6 1248.5,117.2 1249.5,117.5 1250.5,118.3 1251.5,119.1 1252.5,118.3 1253.5,117.5 1254.5,116.8 1255.5,116.6 1256.5,116.9 1257.5,117.2 1258.5,117.6 1259.5,118.3 1260.5,119.1 1261.5,118.3 1262.5,117.4 1263.5,117 1264.5,116.9 1265.5,116.7 1266.5,117.3 1267.5,117.8 1268.5,118.4 1269.5,119.1 1270.5,118.4 1271.5,117.7 1272.5,117.1 1273.5,117.1 1274.5,116.8 1275.5,117 1276.5,117.4 1277.5,118.2 1278.5,119.2 1279.5,118.2 1280.5,117.4 1281.5,116.8 1282.5,116.8 1283.5,120.5 1282.5,124.4 1281.5,124 1280.5,123.2 1279.5,122.7 1278.5,121.8 1277.5,122.8 1276.5,123.5 1275.5,123.8 1274.5,124.5 1273.5,123.9 1272.5,124.1 1271.5,123.3 1270.5,122.7 1269.5,121.8 1268.5,122.7 1267.5,123.2 1266.5,123.8 1265.5,124.2 1264.5,124.2 1263.5,123.9 1262.5,123.5 1261.5,122.7 1260.5,121.9 1259.5,122.6 1258.5,123.5 1257.5,123.9 1256.5,124.3 1255.5,124.4 1254.5,123.8 1253.5,123.3 1252.5,122.6 1251.5,121.8 1250.5,122.8 1249.5,123.6 1248.5,124 1247.5,124.4 1246.5,124.4 1245.5,124 1244.5,123.4 1243.5,122.9 1242.5,121.9 1241.5,122.8 1240.5,123.6 1239.5,123.7 1238.5,124 1237.5,124.1 1236.5,124 1235.5,123.3 1234.5,122.5 1233.5,121.9 1232.5,122.9 1231.5,123.2 1230.5,124.1 1229.5,124.1 1228.5,124.4 1227.5,123.8 1226.5,123.4 1225.5,122.8 1224.5,121.9 1223.5,122.6 1222.5,123.4 1221.5,123.9 1220.5,124.6 1219.5,123.9 1218.5,123.8 1217.5,123.5 1216.5,122.8 1215.5,121.8 1214.5,122.9 1213.5,123.5 1212.5,123.9 1211.5,124 1210.5,124.2 1209.5,123.9 1208.5,123.2 1207.5,122.7 1206.5,121.8 1205.5,122.6 1204.5,123.4 1203.5,123.8 1202.5,124.1 1201.5,124.2 1200.5,124 1199.5,123.3 1198.5,122.8 1197.5,121.8 1196.5,122.7 1195.5,123.4 1194.5,123.6 1193.5,124.1 1192.5,124.5 1191.5,124.1 1190.5,123.6 1189.5,122.7 1188.5,121.8 1187.5,122.7 1186.5,123.5 1185.5,123.7 1184.5,124.3 1183.5,124.5 1182.5,123.8 1181.5,123.3 1180.5,122.6 1179.5,121.9 1178.5,122.9 1177.5,123.5 1176.5,123.7 1175.5,124.5 1174.5,124 1173.5,124.2 1172.5,123.2 1171.5,122.6 1170.5,121.8 1169.5,122.8 1168.5,123.3 1167.5,123.7 1166.5,123.9 1165.5,124.2 1164.5,123.9 1163.5,123.3 1162.5,122.8 1161.5,121.9 1160.5,122.5 1159.5,123.3 1158.5,124.1 1157.5,124.3 1156.5,124.1 1155.5,124.1 1154.5,123.2 1153.5,122.8 1152.5,121.9 1151.5,122.7 1150.5,123.5 1149.5,124 1148.5,124.1 1147.5,124.5 1146.5,123.9 1145.5,123.5 1144.5,122.5 1143.5,121.9 1142.5,122.7 1141.5,123.2 1140.5,123.8 1139.5,124 1138.5,124 1137.5,123.8 1136.5,123.2 1135.5,122.7 1134.5,121.9zM1301.5,120.5 1302.5,118.1 1303.5,120.5 1302.5,122.9zM1307.5,120.5 1308.5,118.9 1309.5,120.5 1308.5,122.2zM1333.5,120.5 1334.5,119.1 1335.5,119.1 1336.5,120.5 1335.5,121.9 1334.5,122zM1369.5,120.5 1370.5,118.6 1371.5,120.5 1370.5,122.3zM1377.5,120.5 1378.5,119 1379.5,119.1 1380.5,120.5 1379.5,122 1378.5,122zM1402.5,120.5 1403.5,118.6 1404.5,118.5 1405.5,120.5 1404.5,122.4 1403.5,122.4zM1464.5,120.5 1465.5,118.7 1466.5,120.5 1465.5,122.6zM1476.5,120.5 1477.5,119.3 1478.5,119.6 1479.5,119.7 1480.5,119.5 1481.5,120.5 1480.5,121.5 1479.5,121.4 1478.5,121.4 1477.5,121.6zM1481.5,120.5 1482.5,119.1 1483.5,120.5 1482.5,121.8zM1500.5,120.5 1501.5,119.1 1502.5,118.9 1503.5,120.5 1502.5,122 1501.5,122.1zM1518.5,120.5 1519.5,117.9 1520.5,120.5 1519.5,122.8zM1527.5,120.5 1528.5,118.7 1529.5,120.5 1528.5,122.1zM1559.5,120.5 1560.5,119.1 1561.5,120.5 1560.5,121.8zM1561.5,120.5 1562.5,119.6 1563.5,119.6 1564.5,120.5 1563.5,121.4 1562.5,121.4zM1565.5,120.5 1566.5,119.6 1567.5,119.5 1568.5,119.2 1569.5,119.1 1570.5,120.5 1569.5,121.9 1568.5,121.8 1567.5,121.5 1566.5,121.5zM1570.5,120.5 1571.5,119.4 1572.5,120.5 1571.5,121.6zM1572.5,120.5 1573.5,119.1 1574.5,118.8 1575.5,118.9 1576.5,120.5 1575.5,122.2 1574.5,122.1 1573.5,121.8zM1581.5,120.5 1582.5,118.6 1583.5,120.5 1582.5,122.3zM1588.5,120.5 1589.5,118.6 1590.5,118.7 1591.5,120.5 1590.5,122.5 1589.5,122.6zM1614.5,120.5 1615.5,119.3 1616.5,118.5 1617.5,118.3 1618.5,118.6 1619.5,118.4 1620.5,117.8 1621.5,120.5 1620.5,123.3 1619.5,123 1618.5,122.6 1617.5,122.6 1616.5,122.7 1615.5,121.8zM1623.5,120.5 1624.5,119.6 1625.5,118.4 1626.5,118.5 1627.5,120.5 1626.5,122.4 1625.5,122.6 1624.5,121.4zM1630.5,120.5 1631.5,119 1632.5,119.2 1633.5,118.9 1634.5,118.9 1635.5,118.9 1636.5,120.5 1635.5,122 1634.5,122.1 1633.5,122.3 1632.5,121.7 1631.5,121.9zM1729.5,120.5 1730.5,119.4 1731.5,116.7 1732.5,117.7 1733.5,120.5 1732.5,123.3 1731.5,124.4 1730.5,121.7zM1735.5,120.5 1736.5,119.4 1737.5,118.3 1738.5,117.4 1739.5,117.3 1740.5,118.9 1741.5,120.5 1740.5,122.1 1739.5,123.6 1738.5,123.3 1737.5,122.8 1736.5,121.6zM1742.5,120.5 1743.5,119.1 1744.5,118.7 1745.5,119.2 1746.5,119.5 1747.5,118.6 1748.5,119.5 1749.5,120.5 1748.5,121.5 1747.5,122.5 1746.5,121.5 1745.5,121.8 1744.5,122.2 1743.5,121.9zM1766.5,120.5 1767.5,116 1768.5,120.5 1767.5,124.4zM1772.5,120.5 1773.5,119.6 1774.5,118.3 1775.5,118.6 1776.5,117.6 1777.5,118.2 1778.5,120.5 1777.5,122.9 1776.5,123.4 1775.5,122.4 1774.5,122.8 1773.5,121.4zM1845.5,120.5 1846.5,116.2 1847.5,120.5 1846.5,125zM1849.5,120.5 1850.5,119.4 1851.5,118.6 1852.5,118.5 1853.5,118 1854.5,118.3 1855.5,120.5 1854.5,122.5 1853.5,123 1852.5,122.7 1851.5,122.7 1850.5,121.6zM1858.5,120.5 1859.5,119.3 1860.5,118.5 1861.5,117.2 1862.5,118.4 1863.5,118.2 1864.5,117.7 1865.5,120.5 1864.5,123.3 1863.5,122.9 1862.5,122.8 1861.5,123.4 1860.5,122.5 1859.5,121.7zM1963.5,120.5 1964.5,119.5 1965.5,118.8 1966.5,117.8 1967.5,118.2 1968.5,119.1 1969.5,120.5 1968.5,122 1967.5,123 1966.5,123.3 1965.5,122.3 1964.5,121.6zM1973.5,120.5 1974.5,119.6 1975.5,118.2 1976.5,117.9 1977.5,120.5 1976.5,123 1975.5,122.9 1974.5,121.4zM1986.5,120.5 1987.5,118.2 1988.5,119.5 1989.5,118.5 1990.5,118.4 1991.5,119.2 1992.5,118.3 1993.5,118.6 1994.5,119 1995.5,119.4 1996.5,119.1 1997.5,118.2 1998.5,119 1999.5,119.5 2000.5,119.2 2001.5,119 2002.5,119.6 2003.5,118.8 2004.5,120.5 2003.5,122.1 2002.5,121.4 2001.5,122 2000.5,121.8 1999.5,121.4 1998.5,122.1 1997.5,122.6 1996.5,122 1995.5,121.6 1994.5,122 1993.5,122.5 1992.5,122.8 1991.5,121.8 1990.5,122.6 1989.5,122.5 1988.5,121.5 1987.5,122.9zM2004.5,120.5 2005.5,118.5 2006.5,119.6 2007.5,120.5 2006.5,121.4 2005.5,122.7zM2007.5,120.5 2008.5,118.8 2009.5,119.3 2010.5,119.4 2011.5,117.9 2012.5,120.5 2011.5,123 2010.5,121.7 2009.5,121.6 2008.5,122.1z"/>
<rect x="1078" y="74" width="46" height="52" fill="#2e2e2e"/>
<rect x="1078" y="77.8" width="46" height="1.4" fill="#4de2a4"/>
<rect x="1078" y="91.8" width="46" height="1.4" fill="#4de2a4"/>
<rect x="1078" y="105.8" width="46" height="1.4" fill="#4de2a4"/>
<rect x="1078" y="119.8" width="46" height="1.4" fill="#4de2a4"/>
<rect x="1088" y="74" width="2" height="52" fill="#8c1c1c"/><rect x="1090" y="74" width="1.2" height="52" fill="#c24a4a"/>
<rect x="1091" y="74" width="5" height="52" fill="#f6f4fb"/>
<rect x="1091" y="77.8" width="5" height="1.4" fill="#2a4a3e"/>
<rect x="1091" y="91.8" width="5" height="1.4" fill="#2a4a3e"/>
<rect x="1091" y="105.8" width="5" height="1.4" fill="#2a4a3e"/>
<rect x="1091" y="119.8" width="5" height="1.4" fill="#2a4a3e"/>
<rect x="1102.5" y="76" width="1" height="5" fill="#4de2a4"/><path d="M1113 76.5l3 2-3 2z" fill="#4de2a4"/><path d="M1113 118.5l3 2-3 2z" fill="#4de2a4"/>
<rect x="1076" y="72" width="50" height="56" rx="5" ry="5" fill="none" stroke="#6b6b6b" stroke-width="4"/>
<rect x="1069" y="76" width="14" height="48" rx="5" fill="#6b6b6b"/><rect x="1119" y="76" width="14" height="48" rx="5" fill="#6b6b6b"/>
<rect x="1073.2" y="82" width="1.6" height="36" fill="#2e2e2e"/>
<rect x="1077.4" y="82" width="1.6" height="36" fill="#2e2e2e"/>
<rect x="1123.2" y="82" width="1.6" height="36" fill="#2e2e2e"/>
<rect x="1127.4" y="82" width="1.6" height="36" fill="#2e2e2e"/>
<g fill="#8a8a8a" stroke="none"><path d="M2084.8 81.6l4.6 5.4h-9.2z"/><path d="M2084.8 116.4l4.6-5.4h-9.2z"/><path d="M2067.8 99l5.4-4.6v9.2z"/><path d="M2102 99l-5.4-4.6v9.2z"/></g>
<circle cx="2084.8" cy="99" r="7" fill="none" stroke="#8a8a8a" stroke-width="2.2"/><rect x="2079.8" y="98" width="10" height="2" fill="#8a8a8a"/><path d="M2090.5 104.7l7.6 7.6" stroke="#8a8a8a" stroke-width="3.2" stroke-linecap="round"/>
<rect x="2128.8" y="86.8" width="26.4" height="24.4" fill="#474747" stroke="#8a8a8a" stroke-width="2"/><rect x="2128" y="90" width="28" height="1.6" fill="#8a8a8a"/><rect x="2128" y="99.2" width="28" height="1.6" fill="#8a8a8a"/><rect x="2128" y="102.4" width="28" height="1.6" fill="#8a8a8a"/><rect x="2130" y="100.8" width="24" height="1.6" fill="#262626"/><rect x="2130" y="88" width="24" height="2" fill="#262626"/>
</svg>
<div class="a" style="left:14px;top:162px;width:2030px;height:1222px;background:#000"></div>
<div class="a" style="left:16px;top:164px;width:2026px;height:48px;background:#242424"></div>
<div class="a" style="left:638px;top:164px;width:317px;height:48px;background:#2a4038"></div>
<div class="t" style="left:22px;top:173px">samples</div>
<div class="t rl" style="left:191.0px;top:173px;width:120px;text-align:center;color:#a6a6a6">4360000</div>
<div class="t rl" style="left:308.0px;top:173px;width:120px;text-align:center;color:#a6a6a6">4370000</div>
<div class="t rl" style="left:426.0px;top:173px;width:120px;text-align:center;color:#a6a6a6">4380000</div>
<div class="t rl" style="left:543.0px;top:173px;width:120px;text-align:center;color:#a6a6a6">4390000</div>
<div class="t rl" style="left:661.0px;top:173px;width:120px;text-align:center;color:#93a59c">4400000</div>
<div class="t rl" style="left:779.0px;top:173px;width:120px;text-align:center;color:#93a59c">4410000</div>
<div class="t rl" style="left:896.0px;top:173px;width:120px;text-align:center;color:#a6a6a6">4420000</div>
<div class="t rl" style="left:1014.0px;top:173px;width:120px;text-align:center;color:#a6a6a6">4430000</div>
<div class="t rl" style="left:1131.0px;top:173px;width:120px;text-align:center;color:#a6a6a6">4440000</div>
<div class="t rl" style="left:1249.0px;top:173px;width:120px;text-align:center;color:#a6a6a6">4450000</div>
<div class="t rl" style="left:1367.0px;top:173px;width:120px;text-align:center;color:#a6a6a6">4460000</div>
<div class="t rl" style="left:1484.0px;top:173px;width:120px;text-align:center;color:#a6a6a6">4470000</div>
<div class="t rl" style="left:1602.0px;top:173px;width:120px;text-align:center;color:#a6a6a6">4480000</div>
<div class="t rl" style="left:1719.0px;top:173px;width:120px;text-align:center;color:#a6a6a6">4490000</div>
<div class="t rl" style="left:1837.0px;top:173px;width:120px;text-align:center;color:#a6a6a6">4500000</div>
<div class="t rl" style="left:1955.0px;top:173px;width:120px;text-align:center;color:#a6a6a6">4510000</div>
<div class="a" style="left:2042px;top:162px;width:2px;height:52px;background:#000"></div>
<div class="a" style="left:2044px;top:150px;width:144px;height:62px;background:#262626"></div>
<div class="a" style="left:2044px;top:212px;width:144px;height:2px;background:#000"></div>
<div class="a" style="left:620px;top:166px;width:17px;height:30px;background:linear-gradient(90deg,rgba(36,36,36,0),rgba(36,36,36,.75))"></div>
<div class="a" style="left:641px;top:166px;width:12px;height:22px;background:#2a4038;opacity:.8"></div>
<div class="a" style="left:934px;top:166px;width:17px;height:30px;background:linear-gradient(90deg,rgba(42,64,56,0),rgba(42,64,56,.8))"></div>
<div class="a" style="left:961px;top:166px;width:10px;height:30px;background:linear-gradient(90deg,rgba(36,36,36,.7),rgba(36,36,36,0))"></div>
<svg width="2188" height="230" viewBox="0 0 2188 230" shape-rendering="crispEdges">
<rect x="38" y="204" width="2" height="8" fill="#a6a6a6"/>
<rect x="61" y="204" width="2" height="8" fill="#a6a6a6"/>
<rect x="85" y="204" width="2" height="8" fill="#a6a6a6"/>
<rect x="108" y="204" width="2" height="8" fill="#a6a6a6"/>
<rect x="132" y="198" width="2" height="14" fill="#a6a6a6"/>
<rect x="156" y="204" width="2" height="8" fill="#a6a6a6"/>
<rect x="179" y="204" width="2" height="8" fill="#a6a6a6"/>
<rect x="203" y="204" width="2" height="8" fill="#a6a6a6"/>
<rect x="226" y="204" width="2" height="8" fill="#a6a6a6"/>
<rect x="250" y="198" width="2" height="14" fill="#a6a6a6"/>
<rect x="273" y="204" width="2" height="8" fill="#a6a6a6"/>
<rect x="297" y="204" width="2" height="8" fill="#a6a6a6"/>
<rect x="320" y="204" width="2" height="8" fill="#a6a6a6"/>
<rect x="344" y="204" width="2" height="8" fill="#a6a6a6"/>
<rect x="367" y="198" width="2" height="14" fill="#a6a6a6"/>
<rect x="391" y="204" width="2" height="8" fill="#a6a6a6"/>
<rect x="414" y="204" width="2" height="8" fill="#a6a6a6"/>
<rect x="438" y="204" width="2" height="8" fill="#a6a6a6"/>
<rect x="461" y="204" width="2" height="8" fill="#a6a6a6"/>
<rect x="485" y="198" width="2" height="14" fill="#a6a6a6"/>
<rect x="508" y="204" width="2" height="8" fill="#a6a6a6"/>
<rect x="532" y="204" width="2" height="8" fill="#a6a6a6"/>
<rect x="555" y="204" width="2" height="8" fill="#a6a6a6"/>
<rect x="579" y="204" width="2" height="8" fill="#a6a6a6"/>
<rect x="602" y="198" width="2" height="14" fill="#a6a6a6"/>
<rect x="626" y="204" width="2" height="8" fill="#a6a6a6"/>
<rect x="649" y="204" width="2" height="8" fill="#a3b3ab"/>
<rect x="673" y="204" width="2" height="8" fill="#a3b3ab"/>
<rect x="696" y="204" width="2" height="8" fill="#a3b3ab"/>
<rect x="720" y="198" width="2" height="14" fill="#a3b3ab"/>
<rect x="744" y="204" width="2" height="8" fill="#a3b3ab"/>
<rect x="767" y="204" width="2" height="8" fill="#a3b3ab"/>
<rect x="791" y="204" width="2" height="8" fill="#a3b3ab"/>
<rect x="814" y="204" width="2" height="8" fill="#a3b3ab"/>
<rect x="838" y="198" width="2" height="14" fill="#a3b3ab"/>
<rect x="861" y="204" width="2" height="8" fill="#a3b3ab"/>
<rect x="885" y="204" width="2" height="8" fill="#a3b3ab"/>
<rect x="908" y="204" width="2" height="8" fill="#a3b3ab"/>
<rect x="932" y="204" width="2" height="8" fill="#a3b3ab"/>
<rect x="955" y="198" width="2" height="14" fill="#a3b3ab"/>
<rect x="979" y="204" width="2" height="8" fill="#a6a6a6"/>
<rect x="1002" y="204" width="2" height="8" fill="#a6a6a6"/>
<rect x="1026" y="204" width="2" height="8" fill="#a6a6a6"/>
<rect x="1049" y="204" width="2" height="8" fill="#a6a6a6"/>
<rect x="1073" y="198" width="2" height="14" fill="#a6a6a6"/>
<rect x="1096" y="204" width="2" height="8" fill="#a6a6a6"/>
<rect x="1120" y="204" width="2" height="8" fill="#a6a6a6"/>
<rect x="1143" y="204" width="2" height="8" fill="#a6a6a6"/>
<rect x="1167" y="204" width="2" height="8" fill="#a6a6a6"/>
<rect x="1190" y="198" width="2" height="14" fill="#a6a6a6"/>
<rect x="1214" y="204" width="2" height="8" fill="#a6a6a6"/>
<rect x="1237" y="204" width="2" height="8" fill="#a6a6a6"/>
<rect x="1261" y="204" width="2" height="8" fill="#a6a6a6"/>
<rect x="1284" y="204" width="2" height="8" fill="#a6a6a6"/>
<rect x="1308" y="198" width="2" height="14" fill="#a6a6a6"/>
<rect x="1332" y="204" width="2" height="8" fill="#a6a6a6"/>
<rect x="1355" y="204" width="2" height="8" fill="#a6a6a6"/>
<rect x="1379" y="204" width="2" height="8" fill="#a6a6a6"/>
<rect x="1402" y="204" width="2" height="8" fill="#a6a6a6"/>
<rect x="1426" y="198" width="2" height="14" fill="#a6a6a6"/>
<rect x="1449" y="204" width="2" height="8" fill="#a6a6a6"/>
<rect x="1473" y="204" width="2" height="8" fill="#a6a6a6"/>
<rect x="1496" y="204" width="2" height="8" fill="#a6a6a6"/>
<rect x="1520" y="204" width="2" height="8" fill="#a6a6a6"/>
<rect x="1543" y="198" width="2" height="14" fill="#a6a6a6"/>
<rect x="1567" y="204" width="2" height="8" fill="#a6a6a6"/>
<rect x="1590" y="204" width="2" height="8" fill="#a6a6a6"/>
<rect x="1614" y="204" width="2" height="8" fill="#a6a6a6"/>
<rect x="1637" y="204" width="2" height="8" fill="#a6a6a6"/>
<rect x="1661" y="198" width="2" height="14" fill="#a6a6a6"/>
<rect x="1684" y="204" width="2" height="8" fill="#a6a6a6"/>
<rect x="1708" y="204" width="2" height="8" fill="#a6a6a6"/>
<rect x="1731" y="204" width="2" height="8" fill="#a6a6a6"/>
<rect x="1755" y="204" width="2" height="8" fill="#a6a6a6"/>
<rect x="1778" y="198" width="2" height="14" fill="#a6a6a6"/>
<rect x="1802" y="204" width="2" height="8" fill="#a6a6a6"/>
<rect x="1825" y="204" width="2" height="8" fill="#a6a6a6"/>
<rect x="1849" y="204" width="2" height="8" fill="#a6a6a6"/>
<rect x="1872" y="204" width="2" height="8" fill="#a6a6a6"/>
<rect x="1896" y="198" width="2" height="14" fill="#a6a6a6"/>
<rect x="1920" y="204" width="2" height="8" fill="#a6a6a6"/>
<rect x="1943" y="204" width="2" height="8" fill="#a6a6a6"/>
<rect x="1967" y="204" width="2" height="8" fill="#a6a6a6"/>
<rect x="1990" y="204" width="2" height="8" fill="#a6a6a6"/>
<rect x="2014" y="198" width="2" height="14" fill="#a6a6a6"/>
<rect x="2037" y="204" width="2" height="8" fill="#a6a6a6"/>
<path d="M637.5 164h4v21l-3.5 4h-3l2.5-4z" fill="#9aa8a1"/>
<path d="M951 164h4v48h-4z" fill="#9aa8a1"/>
<path d="M953.5 181.5l6.5 7.5-6.5 7.5" fill="none" stroke="#a3ada8" stroke-width="3" stroke-linejoin="miter"/>
<path d="M628 188h22v11l-11 12.5-11-12.5z" fill="#3391f0"/>
<rect x="638.2" y="204" width="1.6" height="8" fill="#9ec4f0"/>
<rect x="788.5" y="194.5" width="1.8" height="12" fill="#aab6b0"/>
<rect x="792.7" y="194.5" width="1.8" height="10" fill="#aab6b0"/>
<rect x="796.9" y="194.5" width="1.8" height="10" fill="#aab6b0"/>
<rect x="801.1" y="194.5" width="1.8" height="10" fill="#aab6b0"/>
</svg>
<svg width="2188" height="230" viewBox="0 0 2188 230">
<rect x="2057.4" y="165.5" width="41.2" height="41.2" rx="4" fill="#1a1a1a" stroke="#343434" stroke-width="2"/>
<path d="M2067.7 197.9L2066 186.5A12.1 12.1 0 1 1 2090 186.5L2088.3 197.9H2079.9L2079.2 192.5L2079.6 190A4.32 4.32 0 1 0 2076.4 190L2076.8 192.5L2075.8 197.9Z" fill="#3293f4"/>
<path d="M2069 190.3h5.4l.4 5.3h-5.2z M2081.8 190.3h5.4l-.6 5.3h-5.2z" fill="#1b4a82"/>
<path d="M2113 171.8h14.1v9.2l-5.8 3.9h-2.5l-5.8-3.9z" fill="#949494"/><rect x="2118.8" y="181" width="2.5" height="19" fill="#949494"/><rect x="2119.1" y="179" width="1.9" height="5.6" fill="#333"/>
</svg>
<svg width="2188" height="800" viewBox="0 0 2188 800" shape-rendering="crispEdges">
<defs><clipPath id="csel"><rect x="640" y="214" width="315" height="552"/></clipPath><clipPath id="cout"><path d="M16 212H638V766H16z M955 212H2042V766H955z"/></clipPath></defs>
<g clip-path="url(#cout)"><rect x="132" y="214" width="1" height="542" fill="#0a400e"/>
<rect x="250" y="214" width="1" height="542" fill="#0a400e"/>
<rect x="367" y="214" width="1" height="542" fill="#0a400e"/>
<rect x="485" y="214" width="1" height="542" fill="#0a400e"/>
<rect x="602" y="214" width="1" height="542" fill="#0a400e"/>
<rect x="720" y="214" width="1" height="542" fill="#0a400e"/>
<rect x="838" y="214" width="1" height="542" fill="#0a400e"/>
<rect x="1073" y="214" width="1" height="542" fill="#0a400e"/>
<rect x="1190" y="214" width="1" height="542" fill="#0a400e"/>
<rect x="1308" y="214" width="1" height="542" fill="#0a400e"/>
<rect x="1426" y="214" width="1" height="542" fill="#0a400e"/>
<rect x="1543" y="214" width="1" height="542" fill="#0a400e"/>
<rect x="1661" y="214" width="1" height="542" fill="#0a400e"/>
<rect x="1778" y="214" width="1" height="542" fill="#0a400e"/>
<rect x="1896" y="214" width="1" height="542" fill="#0a400e"/>
<rect x="2014" y="214" width="1" height="542" fill="#0a400e"/>
<rect x="16" y="238" width="2026" height="1" fill="#08360b"/>
<rect x="16" y="320" width="2026" height="1" fill="#08360b"/>
<rect x="16" y="374" width="2026" height="1" fill="#08360b"/>
<rect x="16" y="456" width="2026" height="1" fill="#08360b"/>
<rect x="16" y="510" width="2026" height="1" fill="#08360b"/>
<rect x="16" y="592" width="2026" height="1" fill="#08360b"/>
<rect x="16" y="646" width="2026" height="1" fill="#08360b"/>
<rect x="16" y="728" width="2026" height="1" fill="#08360b"/>
<rect x="16" y="348" width="2026" height="2" fill="#5e5e5e"/>
<rect x="16" y="484" width="2026" height="2" fill="#5e5e5e"/>
<rect x="16" y="620" width="2026" height="2" fill="#5e5e5e"/>
<rect x="16" y="280" width="2026" height="1" fill="#236e42"/>
<rect x="16" y="281" width="2026" height="1" fill="#a9f1cd"/>
<rect x="16" y="416" width="2026" height="1" fill="#236e42"/>
<rect x="16" y="417" width="2026" height="1" fill="#a9f1cd"/>
<rect x="16" y="552" width="2026" height="1" fill="#236e42"/>
<rect x="16" y="553" width="2026" height="1" fill="#a9f1cd"/>
<rect x="16" y="688" width="2026" height="1" fill="#236e42"/>
<rect x="16" y="689" width="2026" height="1" fill="#a9f1cd"/></g>
<rect x="640" y="214" width="315" height="552" fill="#f4f5fd"/>
<g clip-path="url(#csel)"><rect x="132" y="214" width="1" height="542" fill="#c9d9ca"/>
<rect x="250" y="214" width="1" height="542" fill="#c9d9ca"/>
<rect x="367" y="214" width="1" height="542" fill="#c9d9ca"/>
<rect x="485" y="214" width="1" height="542" fill="#c9d9ca"/>
<rect x="602" y="214" width="1" height="542" fill="#c9d9ca"/>
<rect x="720" y="214" width="1" height="542" fill="#c9d9ca"/>
<rect x="838" y="214" width="1" height="542" fill="#c9d9ca"/>
<rect x="955" y="214" width="1" height="542" fill="#c9d9ca"/>
<rect x="1073" y="214" width="1" height="542" fill="#c9d9ca"/>
<rect x="1190" y="214" width="1" height="542" fill="#c9d9ca"/>
<rect x="1308" y="214" width="1" height="542" fill="#c9d9ca"/>
<rect x="1426" y="214" width="1" height="542" fill="#c9d9ca"/>
<rect x="1543" y="214" width="1" height="542" fill="#c9d9ca"/>
<rect x="1661" y="214" width="1" height="542" fill="#c9d9ca"/>
<rect x="1778" y="214" width="1" height="542" fill="#c9d9ca"/>
<rect x="1896" y="214" width="1" height="542" fill="#c9d9ca"/>
<rect x="2014" y="214" width="1" height="542" fill="#c9d9ca"/>
<rect x="16" y="238" width="2026" height="1" fill="#cfdccf"/>
<rect x="16" y="320" width="2026" height="1" fill="#cfdccf"/>
<rect x="16" y="374" width="2026" height="1" fill="#cfdccf"/>
<rect x="16" y="456" width="2026" height="1" fill="#cfdccf"/>
<rect x="16" y="510" width="2026" height="1" fill="#cfdccf"/>
<rect x="16" y="592" width="2026" height="1" fill="#cfdccf"/>
<rect x="16" y="646" width="2026" height="1" fill="#cfdccf"/>
<rect x="16" y="728" width="2026" height="1" fill="#cfdccf"/>
<rect x="16" y="348" width="2026" height="2" fill="#a9a9b3"/>
<rect x="16" y="484" width="2026" height="2" fill="#a9a9b3"/>
<rect x="16" y="620" width="2026" height="2" fill="#a9a9b3"/>
<rect x="16" y="280" width="2026" height="1" fill="#8fb89a"/>
<rect x="16" y="281" width="2026" height="1" fill="#16291f"/>
<rect x="16" y="416" width="2026" height="1" fill="#8fb89a"/>
<rect x="16" y="417" width="2026" height="1" fill="#16291f"/>
<rect x="16" y="552" width="2026" height="1" fill="#8fb89a"/>
<rect x="16" y="553" width="2026" height="1" fill="#16291f"/>
<rect x="16" y="688" width="2026" height="1" fill="#8fb89a"/>
<rect x="16" y="689" width="2026" height="1" fill="#16291f"/></g>
<rect x="638" y="214" width="2" height="552" fill="#c40808"/>
</svg>
<svg width="2188" height="800" viewBox="0 0 2188 800">
<path fill="none" stroke="#4de2a4" stroke-width="1" shape-rendering="crispEdges" d="M152.5 271.5V291.7M153.5 260.9V299.9M154.5 261.2V298.3M155.5 261.1V298.5M156.5 259.8V297.8M157.5 260.1V296.9M158.5 260.7V300.3M159.5 264.2V299.5M160.5 262.7V294.4M161.5 263.7V295.7M162.5 265.0V293.6M163.5 265.8V292.6M164.5 267.8V294.4M165.5 269.8V293.3M166.5 268.1V291.9M167.5 268.8V293.6M168.5 269.3V292.8M169.5 271.0V292.6M170.5 270.9V291.7M171.5 272.9V291.0M172.5 271.7V288.8M173.5 274.0V289.8M174.5 273.8V288.7M175.5 273.0V289.3M176.5 273.0V288.8M177.5 274.4V287.3M178.5 275.2V287.4M179.5 274.5V288.3M180.5 275.4V287.4M181.5 274.1V287.2M182.5 274.8V287.4M183.5 275.2V286.9M184.5 275.6V287.1M185.5 276.5V287.1M186.5 275.4V285.7M187.5 276.8V285.9M188.5 277.1V285.6M189.5 276.4V285.4M190.5 277.4V286.4M191.5 277.0V285.7M192.5 277.1V285.3M193.5 277.2V285.0M194.5 277.2V285.0M195.5 277.9V284.8M196.5 277.7V285.6M197.5 277.6V285.5M198.5 277.9V284.6M199.5 277.7V284.4M200.5 277.4V284.6M201.5 278.4V284.4M202.5 278.4V284.9M203.5 277.8V284.5M204.5 278.7V283.9M205.5 278.9V284.1M206.5 278.4V284.3M207.5 278.3V284.4M208.5 278.9V284.2M209.5 278.8V284.1M210.5 279.1V284.3M211.5 279.3V283.9M212.5 279.1V284.0M213.5 279.4V284.0M214.5 279.5V283.8M215.5 279.1V283.6M216.5 279.5V283.5M217.5 279.4V283.3M218.5 279.6V283.6M219.5 279.4V283.2M220.5 279.4V283.4M221.5 279.8V283.3M222.5 279.5V283.0M223.5 279.8V283.4M224.5 279.6V283.0M225.5 279.8V283.1M226.5 279.7V283.2M227.5 280.1V282.8M228.5 279.9V282.7M229.5 280.1V282.8M230.5 280.2V283.0M231.5 280.2V282.9M232.5 279.8V282.7M233.5 279.9V282.8M234.5 280.3V283.0M235.5 280.0V282.7M236.5 280.0V282.5M237.5 280.1V282.8M238.5 280.4V282.8M239.5 280.2V282.8M240.5 280.4V282.7M241.5 280.2V282.5M242.5 280.5V282.4M243.5 280.4V282.5M244.5 280.6V282.5M245.5 280.6V282.5M246.5 280.5V282.3M247.5 280.6V282.5M248.5 280.4V282.4M249.5 280.7V282.4M250.5 280.4V282.4M251.5 280.5V282.2M252.5 280.6V282.2M253.5 280.5V282.2M254.5 280.7V282.4M255.5 280.8V282.2M256.5 280.8V282.3M257.5 280.7V282.3M258.5 280.8V282.1M259.5 280.8V282.2M260.5 280.7V282.2M261.5 280.7V282.1M262.5 280.9V282.1M263.5 280.9V282.1M264.5 280.9V282.1M265.5 281.0V282.2M266.5 280.9V282.1M267.5 280.8V282.0M268.5 280.9V282.1M269.5 281.0V282.0M270.5 281.0V282.0M271.5 281.0V281.9M272.5 281.0V281.9M273.5 281.0V282.0M274.5 280.9V281.9M275.5 281.1V281.9M276.5 281.0V281.9M277.5 281.0V281.9M278.5 281.1V281.9M279.5 281.0V281.9M280.5 281.0V281.9"/>
<path fill="none" stroke="#233c34" stroke-width="1" shape-rendering="crispEdges" d="M717.5 274.1V288.9M718.5 267.6V297.2M719.5 267.5V297.5M720.5 267.5V296.1M721.5 268.6V293.9M722.5 270.0V295.1M723.5 270.4V293.3M724.5 272.0V295.2M725.5 269.9V292.9M726.5 270.0V293.4M727.5 270.6V291.7M728.5 272.1V293.4M729.5 271.9V289.9M730.5 272.7V290.4M731.5 273.7V291.5M732.5 272.8V291.4M733.5 275.4V289.3M734.5 273.9V288.4M735.5 274.3V289.7M736.5 275.9V287.9M737.5 274.9V288.9M738.5 275.0V288.0M739.5 275.2V287.1M740.5 275.3V288.4M741.5 276.6V286.6M742.5 276.5V287.5M743.5 276.9V286.2M744.5 277.2V287.3M745.5 277.6V287.3M746.5 277.6V285.9M747.5 277.9V287.0M748.5 277.0V285.8M749.5 278.1V286.1M750.5 277.3V285.1M751.5 277.7V286.1M752.5 278.0V285.6M753.5 277.8V285.0M754.5 278.5V285.5M755.5 278.3V285.2M756.5 278.6V285.5M757.5 278.7V285.1M758.5 278.2V284.7M759.5 279.1V284.4M760.5 279.2V284.3M761.5 279.2V284.4M762.5 279.0V284.4M763.5 278.9V284.5M764.5 278.9V284.2M765.5 279.0V284.2M766.5 279.5V284.2M767.5 279.4V284.2M768.5 279.2V283.8M769.5 279.4V283.9M770.5 279.6V283.5M771.5 279.8V284.1M772.5 279.4V283.7M773.5 279.5V283.5M774.5 279.5V283.9M775.5 279.5V283.5M776.5 279.5V283.8M777.5 280.0V283.4M778.5 279.9V283.3M779.5 279.8V283.1M780.5 279.8V283.5M781.5 280.2V283.4M782.5 280.1V283.3M783.5 280.0V283.4M784.5 279.9V283.0M785.5 280.0V282.9M786.5 280.1V283.0M787.5 280.3V282.9M788.5 280.3V283.1M789.5 280.4V282.8M790.5 280.4V282.7M791.5 280.2V282.9M792.5 280.3V283.0M793.5 280.4V282.6M794.5 280.5V282.8M795.5 280.3V282.9M796.5 280.4V282.6M797.5 280.4V282.8M798.5 280.6V282.8M799.5 280.4V282.6M800.5 280.6V282.5M801.5 280.7V282.4M802.5 280.6V282.6M803.5 280.5V282.5M804.5 280.5V282.5M805.5 280.8V282.3M806.5 280.7V282.4M807.5 280.6V282.4M808.5 280.8V282.5M809.5 280.8V282.4M810.5 280.8V282.5M811.5 280.7V282.4M812.5 280.7V282.3M813.5 280.9V282.2M814.5 280.7V282.3M815.5 280.9V282.2M816.5 280.9V282.2M817.5 280.8V282.3M818.5 280.8V282.3M819.5 281.0V282.2M820.5 281.0V282.2M821.5 281.0V282.2M822.5 281.0V282.2M823.5 280.9V282.2M824.5 280.9V282.1M825.5 280.9V282.2M826.5 281.0V282.2M827.5 280.9V282.0M828.5 281.0V282.0M829.5 281.0V282.0M830.5 281.0V281.9M831.5 281.0V281.9M833.5 281.1V282.1M834.5 281.0V282.0M835.5 281.1V282.0M836.5 281.1V282.0M837.5 281.1V282.0M838.5 281.1V282.0M840.5 281.1V281.9M841.5 281.1V282.0"/>
<path fill="none" stroke="#4de2a4" stroke-width="1" shape-rendering="crispEdges" d="M1282.5 269.2V297.6M1283.5 260.8V309.1M1284.5 257.5V306.3M1285.5 261.7V307.6M1286.5 255.4V311.5M1287.5 261.1V309.9M1288.5 256.0V305.9M1289.5 263.1V305.5M1290.5 263.5V300.4M1291.5 262.8V303.9M1292.5 261.0V299.0M1293.5 264.0V299.7M1294.5 264.7V301.5M1295.5 266.5V300.8M1296.5 265.3V298.5M1297.5 267.3V298.8M1298.5 266.4V296.2M1299.5 266.9V293.9M1300.5 268.1V294.3M1301.5 271.0V295.0M1302.5 269.0V292.5M1303.5 271.2V293.8M1304.5 272.4V292.3M1305.5 273.0V292.1M1306.5 273.1V290.4M1307.5 273.0V290.2M1308.5 274.0V289.9M1309.5 273.5V290.1M1310.5 273.0V290.0M1311.5 274.5V289.1M1312.5 274.7V290.3M1313.5 275.1V289.2M1314.5 274.0V289.9M1315.5 275.0V289.6M1316.5 274.9V287.9M1317.5 276.2V287.6M1318.5 275.0V287.8M1319.5 275.2V288.8M1320.5 275.2V287.6M1321.5 277.0V287.0M1322.5 276.8V287.5M1323.5 276.2V287.8M1324.5 276.3V287.7M1325.5 276.6V286.7M1326.5 276.5V286.2M1327.5 276.7V286.8M1328.5 276.7V285.6M1329.5 277.8V286.8M1330.5 278.0V285.9M1331.5 277.5V285.8M1332.5 277.3V286.3M1333.5 278.0V285.1M1334.5 277.5V285.4M1335.5 278.3V284.9M1336.5 278.7V285.3M1337.5 278.5V285.2M1338.5 277.9V285.0M1339.5 278.0V284.4M1340.5 278.3V285.1M1341.5 278.2V284.2M1342.5 278.7V284.7M1343.5 278.7V284.5M1344.5 279.0V284.9M1345.5 278.6V284.6M1346.5 278.6V284.4M1347.5 279.4V284.4M1348.5 279.4V284.4M1349.5 279.1V283.8M1350.5 279.5V283.7M1351.5 279.5V284.3M1352.5 279.6V284.2M1353.5 279.7V283.7M1354.5 279.5V283.6M1355.5 279.2V283.5M1356.5 279.6V283.4M1357.5 279.9V283.7M1358.5 279.8V283.5M1359.5 279.6V283.2M1360.5 280.0V283.5M1361.5 279.6V283.1M1362.5 279.9V283.6M1363.5 279.7V283.5M1364.5 279.9V283.5M1365.5 280.2V283.2M1366.5 279.9V283.1M1367.5 280.1V283.1M1368.5 280.2V283.2M1369.5 279.9V282.9M1370.5 280.3V283.1M1371.5 280.1V283.1M1372.5 280.2V283.1M1373.5 280.1V282.9M1374.5 280.4V282.6M1375.5 280.2V282.9M1376.5 280.2V282.6M1377.5 280.3V282.9M1378.5 280.5V282.5M1379.5 280.6V282.5M1380.5 280.4V282.7M1381.5 280.4V282.7M1382.5 280.4V282.7M1383.5 280.6V282.7M1384.5 280.5V282.4M1385.5 280.6V282.4M1386.5 280.7V282.6M1387.5 280.8V282.4M1388.5 280.7V282.3M1389.5 280.8V282.4M1390.5 280.8V282.2M1391.5 280.8V282.4M1392.5 280.9V282.4M1393.5 280.9V282.3M1394.5 280.8V282.4M1395.5 280.7V282.3M1396.5 280.9V282.2M1397.5 280.8V282.2M1398.5 280.8V282.2M1399.5 281.0V282.2M1400.5 280.8V282.1M1401.5 280.9V282.1M1402.5 281.0V282.1M1403.5 281.0V282.1M1404.5 280.9V282.0M1405.5 281.0V282.1M1406.5 280.9V282.1M1407.5 280.9V282.1M1408.5 281.0V282.1M1409.5 281.0V282.0M1410.5 281.1V282.0M1411.5 281.0V282.0M1412.5 281.1V281.9M1413.5 281.1V282.0M1414.5 281.1V282.0M1415.5 281.1V282.0M1416.5 281.1V282.0M1417.5 281.1V281.9"/>
<path fill="none" stroke="#4de2a4" stroke-width="1" shape-rendering="crispEdges" d="M1846.5 272.0V292.2M1847.5 266.8V300.9M1848.5 269.0V301.0M1849.5 268.3V302.5M1850.5 269.6V302.0M1851.5 265.8V297.3M1852.5 269.8V298.1M1853.5 269.5V299.2M1854.5 270.7V296.3M1855.5 268.5V298.5M1856.5 271.9V297.6M1857.5 269.8V295.6M1858.5 270.9V296.2M1859.5 271.1V291.9M1860.5 273.9V292.9M1861.5 273.0V294.2M1862.5 273.4V292.3M1863.5 272.6V292.3M1864.5 275.3V291.5M1865.5 273.7V290.8M1866.5 274.7V290.6M1867.5 275.6V289.6M1868.5 275.2V290.0M1869.5 275.8V289.2M1870.5 276.1V289.1M1871.5 275.7V288.3M1872.5 275.9V289.2M1873.5 276.4V289.2M1874.5 276.9V288.8M1875.5 277.3V287.4M1876.5 276.5V286.6M1877.5 277.0V287.9M1878.5 276.7V287.4M1879.5 277.6V286.6M1880.5 277.4V285.9M1881.5 278.3V287.1M1882.5 277.7V285.8M1883.5 278.0V285.9M1884.5 277.6V285.7M1885.5 277.9V286.2M1886.5 278.5V285.4M1887.5 278.3V285.5M1888.5 278.4V285.3M1889.5 278.3V285.3M1890.5 279.0V285.6M1891.5 278.4V285.4M1892.5 278.8V285.5M1893.5 278.5V284.4M1894.5 279.0V284.3M1895.5 279.2V284.5M1896.5 279.1V284.8M1897.5 278.9V284.3M1898.5 279.6V285.0M1899.5 279.1V284.4M1900.5 279.6V283.9M1901.5 279.1V284.3M1902.5 279.2V284.4M1903.5 279.4V284.3M1904.5 279.7V283.8M1905.5 279.7V284.2M1906.5 279.5V284.1M1907.5 279.7V283.8M1908.5 280.0V283.9M1909.5 279.7V283.7M1910.5 279.8V284.0M1911.5 279.7V283.3M1912.5 280.1V283.6M1913.5 279.9V283.3M1914.5 279.8V283.4M1915.5 280.0V283.1M1916.5 280.2V283.0M1917.5 280.0V283.3M1918.5 280.0V283.3M1919.5 280.3V283.1M1920.5 280.3V283.0M1921.5 280.4V283.2M1922.5 280.4V283.0M1923.5 280.3V282.9M1924.5 280.4V282.9M1925.5 280.5V283.0M1926.5 280.6V282.9M1927.5 280.6V282.9M1928.5 280.6V283.0M1929.5 280.5V282.9M1930.5 280.5V282.9M1931.5 280.5V282.8M1932.5 280.7V282.6M1933.5 280.5V282.6M1934.5 280.5V282.7M1935.5 280.6V282.7M1936.5 280.5V282.6M1937.5 280.6V282.5M1938.5 280.8V282.4M1939.5 280.8V282.6M1940.5 280.7V282.3M1941.5 280.9V282.4M1942.5 280.8V282.4M1943.5 280.9V282.3M1944.5 280.7V282.5M1945.5 280.8V282.3M1946.5 280.8V282.3M1947.5 280.9V282.4M1948.5 280.9V282.2M1949.5 281.0V282.4M1950.5 280.9V282.3M1951.5 280.9V282.2M1952.5 280.9V282.3M1953.5 281.0V282.1M1954.5 281.0V282.2M1955.5 280.9V282.2M1956.5 281.0V282.2M1957.5 281.1V282.2M1958.5 281.0V282.2M1959.5 281.0V282.1M1960.5 281.1V282.1M1961.5 281.0V282.1M1962.5 281.1V282.1M1963.5 281.1V282.0M1964.5 281.1V282.0M1965.5 281.1V282.0M1966.5 281.1V282.0M1967.5 281.1V282.1M1968.5 281.1V282.0M1970.5 281.1V282.0"/>
<path fill="none" stroke="#4de2a4" stroke-width="1" shape-rendering="crispEdges" d="M152.5 416.8V418.1M153.5 416.4V418.4M154.5 416.5V418.7M155.5 416.3V418.5M156.5 416.3V418.4M157.5 416.5V418.7"/>
<path fill="none" stroke="#233c34" stroke-width="1" shape-rendering="crispEdges" d="M718.5 416.8V418.1M719.5 416.3V418.5M720.5 416.3V418.7M721.5 416.5V418.4M722.5 416.3V418.5M723.5 416.3V418.5"/>
<path fill="none" stroke="#4de2a4" stroke-width="1" shape-rendering="crispEdges" d="M1282.5 416.0V419.1M1283.5 414.8V420.2M1284.5 414.5V420.5M1285.5 415.0V420.0M1286.5 414.5V420.0M1287.5 414.6V419.8M1288.5 415.7V418.9M1289.5 416.5V418.6"/>
<path fill="none" stroke="#4de2a4" stroke-width="1" shape-rendering="crispEdges" d="M153.5 550.4V556.1M154.5 547.6V558.4M155.5 547.5V558.9M156.5 548.8V557.8M157.5 547.6V559.0M158.5 548.7V557.8M159.5 549.5V557.2M160.5 550.0V557.6M161.5 549.6V556.9M162.5 550.3V556.8M163.5 550.5V555.9M164.5 550.9V555.5M165.5 551.2V555.9M166.5 551.1V555.3M167.5 551.7V555.4M168.5 551.9V555.0M169.5 552.1V555.2M170.5 551.8V554.7M171.5 552.3V554.7M172.5 552.2V554.7M173.5 552.2V554.7M174.5 552.5V554.3M175.5 552.4V554.3M176.5 552.6V554.2M177.5 552.6V554.2M178.5 552.6V554.2M179.5 552.7V554.2M180.5 552.9V554.1M181.5 552.8V554.1M182.5 552.9V554.0M183.5 553.0V554.0M184.5 553.0V553.9M185.5 553.1V553.9M186.5 553.1V554.0M187.5 553.0V553.9"/>
<path fill="none" stroke="#233c34" stroke-width="1" shape-rendering="crispEdges" d="M717.5 550.4V558.0M718.5 547.7V561.8M719.5 547.3V562.0M720.5 546.8V560.6M721.5 546.9V562.0M722.5 547.6V561.7M723.5 548.4V561.4M724.5 547.5V560.9M725.5 547.8V559.3M726.5 549.1V559.9M727.5 548.8V559.5M728.5 548.8V558.4M729.5 549.5V557.3M730.5 550.0V557.9M731.5 549.8V558.1M732.5 550.1V557.8M733.5 550.2V557.5M734.5 550.4V557.5M735.5 550.9V556.6M736.5 551.0V556.1M737.5 551.2V556.4M738.5 550.9V556.5M739.5 551.6V556.0M740.5 551.3V555.7M741.5 551.3V555.5M742.5 551.5V555.8M743.5 551.4V555.6M744.5 551.9V555.4M745.5 552.0V555.4M746.5 551.9V555.3M747.5 552.2V555.5M748.5 552.3V555.5M749.5 552.2V555.3M750.5 552.1V555.3M751.5 552.1V554.8M752.5 552.2V555.2M753.5 552.2V554.9M754.5 552.5V554.7M755.5 552.5V554.9M756.5 552.6V554.8M757.5 552.4V554.7M758.5 552.5V554.8M759.5 552.5V554.4M760.5 552.6V554.6M761.5 552.6V554.5M762.5 552.8V554.4M763.5 552.7V554.4M764.5 552.7V554.5M765.5 552.8V554.4M766.5 552.9V554.3M767.5 552.7V554.2M768.5 552.8V554.3M769.5 552.8V554.2M770.5 552.9V554.2M771.5 553.0V554.2M772.5 552.9V554.2M773.5 553.0V554.2M774.5 553.0V554.2M775.5 553.1V554.1M776.5 553.0V554.0M777.5 553.1V554.0M778.5 553.1V554.1M779.5 553.0V554.1M780.5 553.1V554.1M781.5 553.1V554.0M782.5 553.0V553.9M783.5 553.0V554.0M784.5 553.1V554.0M785.5 553.1V554.0"/>
<path fill="none" stroke="#4de2a4" stroke-width="1" shape-rendering="crispEdges" d="M1846.5 551.3V555.7M1847.5 549.3V557.3M1848.5 548.6V557.2M1849.5 548.7V557.3M1850.5 549.6V558.0M1851.5 549.1V557.2M1852.5 549.1V556.8M1853.5 550.7V557.4M1854.5 550.2V556.7M1855.5 551.1V556.2M1856.5 551.3V555.8M1857.5 551.3V555.7M1858.5 551.6V555.7M1859.5 551.6V555.0M1860.5 551.9V554.9M1861.5 552.3V554.9M1862.5 552.3V554.9M1863.5 552.4V554.6M1864.5 552.3V554.6M1865.5 552.3V554.7M1866.5 552.5V554.4M1867.5 552.6V554.3M1868.5 552.6V554.3M1869.5 552.7V554.1M1870.5 552.9V554.1M1871.5 552.9V554.1M1872.5 552.9V554.1M1873.5 552.9V554.0M1874.5 553.0V554.0M1875.5 553.1V554.0M1876.5 553.1V554.0M1877.5 553.1V554.0M1878.5 553.1V554.0"/>
<path fill="none" stroke="#4de2a4" stroke-width="1" shape-rendering="crispEdges" d="M153.5 683.3V696.2M154.5 678.4V702.7M155.5 677.5V699.7M156.5 677.6V702.2M157.5 680.5V703.5M158.5 679.7V701.2M159.5 681.5V701.7M160.5 680.1V701.3M161.5 681.3V699.1M162.5 680.8V699.5M163.5 681.9V698.5M164.5 683.1V696.1M165.5 683.6V695.6M166.5 683.2V695.7M167.5 683.5V696.4M168.5 683.8V696.2M169.5 685.1V695.0M170.5 684.5V694.6M171.5 685.7V694.8M172.5 685.6V693.4M173.5 685.7V693.5M174.5 686.1V693.0M175.5 686.1V693.0M176.5 686.9V693.1M177.5 686.9V692.9M178.5 687.0V692.5M179.5 687.2V692.3M180.5 686.7V692.1M181.5 687.2V692.4M182.5 687.5V691.9M183.5 687.5V692.4M184.5 687.2V692.0M185.5 687.8V691.6M186.5 687.5V691.6M187.5 687.9V691.5M188.5 687.5V691.3M189.5 687.7V691.2M190.5 687.8V691.5M191.5 688.2V691.2M192.5 687.8V691.4M193.5 688.1V691.0M194.5 688.2V691.0M195.5 688.2V690.9M196.5 688.2V691.0M197.5 688.3V690.8M198.5 688.2V690.7M199.5 688.4V690.6M200.5 688.6V690.7M201.5 688.6V690.6M202.5 688.6V690.5M203.5 688.6V690.5M204.5 688.5V690.7M205.5 688.6V690.4M206.5 688.6V690.4M207.5 688.8V690.5M208.5 688.8V690.5M209.5 688.8V690.2M210.5 688.7V690.3M211.5 688.9V690.2M212.5 688.8V690.2M213.5 688.9V690.2M214.5 688.9V690.2M215.5 688.9V690.3M216.5 688.9V690.1M217.5 688.9V690.2M218.5 689.0V690.1M219.5 689.0V690.1M220.5 689.0V690.1M221.5 689.1V690.0M222.5 689.1V690.0M223.5 689.0V690.0M224.5 689.1V690.0M225.5 689.1V689.9M226.5 689.1V690.0"/>
<path fill="none" stroke="#233c34" stroke-width="1" shape-rendering="crispEdges" d="M717.5 685.9V694.3M718.5 683.9V696.3M719.5 683.3V697.8M720.5 683.9V696.0M721.5 682.6V698.0M722.5 682.2V695.7M723.5 683.4V696.7M724.5 683.7V694.7M725.5 683.7V695.6M726.5 685.5V695.2M727.5 684.6V695.1M728.5 685.0V693.9M729.5 685.5V694.1M730.5 686.3V693.9M731.5 686.0V693.2M732.5 687.0V692.4M733.5 686.5V692.2M734.5 686.8V692.2M735.5 686.8V692.1M736.5 687.0V691.8M737.5 687.4V691.6M738.5 687.6V692.1M739.5 687.3V691.4M740.5 687.6V691.2M741.5 687.9V691.4M742.5 688.0V691.0M743.5 687.9V691.4M744.5 688.2V691.1M745.5 688.0V691.2M746.5 688.1V690.9M747.5 688.1V691.0M748.5 688.2V690.9M749.5 688.5V691.0M750.5 688.4V690.7M751.5 688.4V690.8M752.5 688.6V690.5M753.5 688.6V690.4M754.5 688.6V690.4M755.5 688.6V690.5M756.5 688.6V690.5M757.5 688.7V690.3M758.5 688.7V690.4M759.5 688.8V690.4M760.5 688.8V690.3M761.5 688.9V690.2M762.5 689.0V690.1M763.5 689.0V690.2M764.5 689.0V690.2M765.5 689.0V690.1M766.5 688.9V690.1M767.5 689.1V690.1M768.5 689.0V690.1M769.5 689.0V690.0M770.5 689.0V689.9M771.5 689.1V690.0M772.5 689.1V690.0M773.5 689.1V689.9M774.5 689.1V689.9"/>
<path fill="none" stroke="#4de2a4" stroke-width="1" shape-rendering="crispEdges" d="M1282.5 686.2V692.8M1283.5 683.2V695.8M1284.5 684.3V695.7M1285.5 683.6V696.0M1286.5 684.5V695.2M1287.5 683.4V695.7M1288.5 684.1V694.7M1289.5 684.2V694.1M1290.5 685.5V694.4M1291.5 684.9V693.9M1292.5 685.2V692.8M1293.5 686.3V692.6M1294.5 685.8V692.8M1295.5 686.2V692.2M1296.5 686.9V693.0M1297.5 686.9V692.6M1298.5 687.2V691.9M1299.5 687.3V692.1M1300.5 687.0V692.1M1301.5 687.4V691.8M1302.5 687.6V691.6M1303.5 687.3V691.7M1304.5 687.5V691.5M1305.5 687.9V691.5M1306.5 687.9V691.4M1307.5 688.1V691.2M1308.5 688.0V691.3M1309.5 687.9V691.0M1310.5 688.0V690.9M1311.5 688.0V690.7M1312.5 688.0V691.0M1313.5 688.4V690.8M1314.5 688.2V690.8M1315.5 688.2V690.6M1316.5 688.4V690.7M1317.5 688.5V690.6M1318.5 688.4V690.4M1319.5 688.6V690.5M1320.5 688.6V690.5M1321.5 688.6V690.5M1322.5 688.7V690.3M1323.5 688.6V690.2M1324.5 688.7V690.2M1325.5 688.8V690.2M1326.5 688.8V690.3M1327.5 688.8V690.3M1328.5 688.8V690.2M1329.5 688.8V690.0M1330.5 688.9V690.2M1331.5 689.0V690.0M1332.5 688.8V690.1M1333.5 689.0V690.0M1334.5 688.9V690.1M1335.5 689.0V690.0M1336.5 688.9V689.9M1337.5 689.1V689.9M1338.5 689.0V689.9M1339.5 689.1V690.0M1341.5 689.0V689.9M1342.5 689.1V689.9"/>
<path fill="none" stroke="#4de2a4" stroke-width="1" shape-rendering="crispEdges" d="M1846.5 682.3V695.7M1847.5 676.4V700.9M1848.5 678.1V700.0M1849.5 675.7V700.6M1850.5 675.6V699.1M1851.5 676.1V701.5M1852.5 677.5V698.4M1853.5 677.8V699.6M1854.5 679.6V698.1M1855.5 679.6V697.9M1856.5 680.3V695.7M1857.5 682.3V695.3M1858.5 682.6V694.4M1859.5 682.2V694.3M1860.5 683.8V695.2M1861.5 683.4V694.7M1862.5 683.6V694.6M1863.5 685.5V694.3M1864.5 684.6V693.0M1865.5 684.8V692.7M1866.5 685.8V692.7M1867.5 685.8V693.0M1868.5 686.0V692.8M1869.5 686.6V692.5M1870.5 686.8V691.8M1871.5 686.6V692.4M1872.5 686.5V692.1M1873.5 687.1V692.1M1874.5 686.6V691.7M1875.5 686.8V691.6M1876.5 686.9V691.4M1877.5 687.2V691.2M1878.5 687.3V691.3M1879.5 687.3V691.5M1880.5 687.4V691.2M1881.5 687.6V690.9M1882.5 688.0V690.8M1883.5 687.8V690.8M1884.5 688.0V690.7M1885.5 687.9V690.7M1886.5 688.2V690.5M1887.5 687.9V690.6M1888.5 688.1V690.5M1889.5 688.2V690.6M1890.5 688.3V690.6M1891.5 688.3V690.4M1892.5 688.4V690.3M1893.5 688.3V690.3M1894.5 688.6V690.4M1895.5 688.5V690.3M1896.5 688.7V690.4M1897.5 688.6V690.3M1898.5 688.7V690.3M1899.5 688.8V690.2M1900.5 688.8V690.1M1901.5 688.7V690.2M1902.5 688.7V690.1M1903.5 688.9V690.1M1904.5 688.8V690.1M1905.5 688.9V690.1M1906.5 688.9V690.0M1907.5 689.0V690.0M1908.5 689.0V689.9M1909.5 688.9V689.9M1910.5 689.1V690.0M1911.5 689.0V689.9M1912.5 689.0V689.9M1914.5 689.0V689.9"/>
</svg>
<div class="a" style="left:2044px;top:214px;width:144px;height:552px;background:#232323"></div>
<svg width="2188" height="800" viewBox="0 0 2188 800" shape-rendering="crispEdges">
<rect x="2044" y="348" width="144" height="2" fill="#000"/>
<rect x="2044" y="484" width="144" height="2" fill="#000"/>
<rect x="2044" y="620" width="144" height="2" fill="#000"/>
<rect x="2044" y="218" width="4" height="2" fill="#a6a6a6"/>
<rect x="2044" y="238" width="8" height="2" fill="#a6a6a6"/>
<rect x="2044" y="260" width="4" height="2" fill="#a6a6a6"/>
<rect x="2044" y="280" width="8" height="2" fill="#a6a6a6"/>
<rect x="2044" y="300" width="4" height="2" fill="#a6a6a6"/>
<rect x="2044" y="320" width="8" height="2" fill="#a6a6a6"/>
<rect x="2044" y="340" width="4" height="2" fill="#a6a6a6"/>
<rect x="2044" y="354" width="4" height="2" fill="#a6a6a6"/>
<rect x="2044" y="374" width="8" height="2" fill="#a6a6a6"/>
<rect x="2044" y="396" width="4" height="2" fill="#a6a6a6"/>
<rect x="2044" y="416" width="8" height="2" fill="#a6a6a6"/>
<rect x="2044" y="436" width="4" height="2" fill="#a6a6a6"/>
<rect x="2044" y="456" width="8" height="2" fill="#a6a6a6"/>
<rect x="2044" y="476" width="4" height="2" fill="#a6a6a6"/>
<rect x="2044" y="490" width="4" height="2" fill="#a6a6a6"/>
<rect x="2044" y="510" width="8" height="2" fill="#a6a6a6"/>
<rect x="2044" y="532" width="4" height="2" fill="#a6a6a6"/>
<rect x="2044" y="552" width="8" height="2" fill="#a6a6a6"/>
<rect x="2044" y="572" width="4" height="2" fill="#a6a6a6"/>
<rect x="2044" y="592" width="8" height="2" fill="#a6a6a6"/>
<rect x="2044" y="612" width="4" height="2" fill="#a6a6a6"/>
<rect x="2044" y="626" width="4" height="2" fill="#a6a6a6"/>
<rect x="2044" y="646" width="8" height="2" fill="#a6a6a6"/>
<rect x="2044" y="668" width="4" height="2" fill="#a6a6a6"/>
<rect x="2044" y="688" width="8" height="2" fill="#a6a6a6"/>
<rect x="2044" y="708" width="4" height="2" fill="#a6a6a6"/>
<rect x="2044" y="728" width="8" height="2" fill="#a6a6a6"/>
<rect x="2044" y="748" width="4" height="2" fill="#a6a6a6"/>
</svg>
<div class="t" style="left:2059px;top:222px">samp</div>
<div class="t" style="left:2060px;top:271.5px">0</div>
<div class="t" style="left:2060px;top:311.5px">-20k</div>
<div class="a" style="left:2143px;top:265px;width:42px;height:34px;border:1.5px solid #333;border-radius:4px;background:#1b1b1b;color:#3d97e8;font-size:17.5px;line-height:33px;text-align:center">1</div>
<div class="t" style="left:2059px;top:358px">samp</div>
<div class="t" style="left:2060px;top:407.5px">0</div>
<div class="t" style="left:2060px;top:447.5px">-20k</div>
<div class="a" style="left:2143px;top:401px;width:42px;height:34px;border:1.5px solid #333;border-radius:4px;background:#1b1b1b;color:#3d97e8;font-size:17.5px;line-height:33px;text-align:center">2</div>
<div class="t" style="left:2059px;top:494px">samp</div>
<div class="t" style="left:2060px;top:543.5px">0</div>
<div class="t" style="left:2060px;top:583.5px">-20k</div>
<div class="a" style="left:2143px;top:537px;width:42px;height:34px;border:1.5px solid #333;border-radius:4px;background:#1b1b1b;color:#3d97e8;font-size:17.5px;line-height:33px;text-align:center">3</div>
<div class="t" style="left:2059px;top:630px">samp</div>
<div class="t" style="left:2060px;top:679.5px">0</div>
<div class="t" style="left:2060px;top:719.5px">-20k</div>
<div class="a" style="left:2143px;top:673px;width:42px;height:34px;border:1.5px solid #333;border-radius:4px;background:#1b1b1b;color:#3d97e8;font-size:17.5px;line-height:33px;text-align:center">4</div>
<div class="a" style="left:16px;top:766px;width:2172px;height:18px;background:#313131"></div>
<svg width="2188" height="800" viewBox="0 0 2188 800"><path d="M2144 772h12.4l-6.2 6z" fill="#8a8a8a"/></svg>
<svg style="left:16px;top:784px;overflow:hidden" width="2026" height="598" viewBox="0 0 2026 598">
<defs>
<linearGradient id="dec" x1="0" x2="1" y1="0" y2="0"><stop offset="0" stop-color="#fff" stop-opacity="1"/><stop offset="0.35" stop-color="#fff" stop-opacity="0.78"/><stop offset="0.55" stop-color="#fff" stop-opacity="0.55"/><stop offset="0.75" stop-color="#fff" stop-opacity="0.3"/><stop offset="1" stop-color="#fff" stop-opacity="0"/></linearGradient>
<linearGradient id="decr" x1="0" x2="1" y1="0" y2="0"><stop offset="0" stop-color="#fff" stop-opacity="0"/><stop offset=".3" stop-color="#fff" stop-opacity="1"/><stop offset="1" stop-color="#fff" stop-opacity=".8"/></linearGradient>
<linearGradient id="gL" x1="0" x2="0" y1="0" y2="1"><stop offset="0" stop-color="#fff" stop-opacity="0.7"/><stop offset="0.4" stop-color="#fff" stop-opacity="0.74"/><stop offset="0.6" stop-color="#fff" stop-opacity="0.82"/><stop offset="0.8" stop-color="#fff" stop-opacity="0.93"/><stop offset="1" stop-color="#fff" stop-opacity="1"/></linearGradient>
<linearGradient id="gM" x1="0" x2="0" y1="0" y2="1"><stop offset="0" stop-color="#fff" stop-opacity="0.5"/><stop offset="0.35" stop-color="#fff" stop-opacity="0.56"/><stop offset="0.6" stop-color="#fff" stop-opacity="0.68"/><stop offset="0.8" stop-color="#fff" stop-opacity="0.82"/><stop offset="1" stop-color="#fff" stop-opacity="0.93"/></linearGradient>
<linearGradient id="gR" x1="0" x2="0" y1="0" y2="1"><stop offset="0" stop-color="#fff" stop-opacity="0.27"/><stop offset="0.32" stop-color="#fff" stop-opacity="0.33"/><stop offset="0.52" stop-color="#fff" stop-opacity="0.45"/><stop offset="0.68" stop-color="#fff" stop-opacity="0.66"/><stop offset="1" stop-color="#fff" stop-opacity="0.8"/></linearGradient>
<pattern id="bands" x="0" y="4" width="37" height="9" patternUnits="userSpaceOnUse"><rect x="0" y="0" width="37" height="2" fill="#000" fill-opacity=".16"/></pattern>
<filter id="cm" filterUnits="userSpaceOnUse" x="0" y="0" width="2026" height="598" color-interpolation-filters="sRGB">
<feTurbulence type="fractalNoise" baseFrequency="0.55 0.7" numOctaves="2" seed="4" result="n"/>
<feColorMatrix in="n" type="matrix" values="0 1.3 0 0 -0.15  0 1.3 0 0 -0.15  0 1.3 0 0 -0.15  0 0 0 0 1" result="ng"/>
<feComposite in="SourceGraphic" in2="ng" operator="arithmetic" k1="0.7" k2="0.65" k3="0" k4="0" result="m"/>
<feComponentTransfer in="m">
<feFuncR type="table" tableValues="0.003 0.03 0.1 0.215 0.37 0.59 0.8 0.9 0.96 1 1"/>
<feFuncG type="table" tableValues="0 0 0.012 0.03 0.047 0.055 0.07 0.1 0.2 0.45 0.78"/>
<feFuncB type="table" tableValues="0.01 0.075 0.2 0.33 0.37 0.275 0.118 0.07 0.07 0.12 0.3"/>
<feFuncA type="identity"/>
</feComponentTransfer>
</filter></defs>
<g filter="url(#cm)" shape-rendering="crispEdges"><rect x="0" y="0" width="2026" height="598" fill="#000"/>
<rect x="136.0" y="0" width="37" height="60" fill="#fff" fill-opacity=".03"/>
<rect x="138.0" y="48" width="12" height="11" fill="#fff" fill-opacity=".10"/>
<rect x="136.0" y="60" width="6" height="88" fill="url(#gL)" fill-opacity="1.00"/>
<rect x="142.0" y="60" width="6" height="88" fill="url(#gL)" fill-opacity="0.93"/>
<rect x="148.0" y="60" width="6" height="88" fill="url(#gM)" fill-opacity="1.00"/>
<rect x="154.0" y="60" width="7" height="88" fill="url(#gM)" fill-opacity="0.93"/>
<rect x="161.0" y="60" width="6" height="88" fill="url(#gR)" fill-opacity="1.00"/>
<rect x="167.0" y="60" width="6" height="88" fill="url(#gR)" fill-opacity="0.92"/>
<path d="M173.0 146h436v2h-436z" fill="url(#dec)" fill-opacity="0.73"/>
<path d="M173.0 144h397v2h-397z" fill="url(#dec)" fill-opacity="0.76"/>
<path d="M173.0 142h362v2h-362z" fill="url(#dec)" fill-opacity="0.73"/>
<path d="M173.0 140h329v2h-329z" fill="url(#dec)" fill-opacity="0.74"/>
<path d="M173.0 138h299v2h-299z" fill="url(#dec)" fill-opacity="0.53"/>
<path d="M173.0 136h272v2h-272z" fill="url(#dec)" fill-opacity="0.67"/>
<path d="M173.0 134h248v2h-248z" fill="url(#dec)" fill-opacity="0.66"/>
<path d="M173.0 132h225v2h-225z" fill="url(#dec)" fill-opacity="0.73"/>
<path d="M173.0 130h204v2h-204z" fill="url(#dec)" fill-opacity="0.48"/>
<path d="M173.0 128h186v2h-186z" fill="url(#dec)" fill-opacity="0.66"/>
<path d="M173.0 126h168v2h-168z" fill="url(#dec)" fill-opacity="0.72"/>
<path d="M173.0 124h153v2h-153z" fill="url(#dec)" fill-opacity="0.66"/>
<path d="M173.0 122h138v2h-138z" fill="url(#dec)" fill-opacity="0.69"/>
<path d="M173.0 120h125v2h-125z" fill="url(#dec)" fill-opacity="0.47"/>
<path d="M173.0 118h113v2h-113z" fill="url(#dec)" fill-opacity="0.65"/>
<path d="M173.0 116h103v2h-103z" fill="url(#dec)" fill-opacity="0.58"/>
<path d="M173.0 114h93v2h-93z" fill="url(#dec)" fill-opacity="0.59"/>
<path d="M173.0 112h84v2h-84z" fill="url(#dec)" fill-opacity="0.42"/>
<path d="M173.0 110h75v2h-75z" fill="url(#dec)" fill-opacity="0.53"/>
<path d="M173.0 108h68v2h-68z" fill="url(#dec)" fill-opacity="0.51"/>
<path d="M173.0 106h61v2h-61z" fill="url(#dec)" fill-opacity="0.48"/>
<path d="M173.0 104h54v2h-54z" fill="url(#dec)" fill-opacity="0.41"/>
<path d="M173.0 102h49v2h-49z" fill="url(#dec)" fill-opacity="0.32"/>
<path d="M173.0 100h43v2h-43z" fill="url(#dec)" fill-opacity="0.42"/>
<path d="M173.0 98h39v2h-39z" fill="url(#dec)" fill-opacity="0.39"/>
<path d="M173.0 96h34v2h-34z" fill="url(#dec)" fill-opacity="0.36"/>
<path d="M173.0 94h30v2h-30z" fill="url(#dec)" fill-opacity="0.28"/>
<path d="M173.0 92h26v2h-26z" fill="url(#dec)" fill-opacity="0.36"/>
<path d="M173.0 90h23v2h-23z" fill="url(#dec)" fill-opacity="0.36"/>
<path d="M173.0 88h20v2h-20z" fill="url(#dec)" fill-opacity="0.35"/>
<path d="M173.0 86h17v2h-17z" fill="url(#dec)" fill-opacity="0.33"/>
<path d="M173.0 84h15v2h-15z" fill="url(#dec)" fill-opacity="0.24"/>
<path d="M173.0 82h12v2h-12z" fill="url(#dec)" fill-opacity="0.31"/>
<path d="M173.0 80h10v2h-10z" fill="url(#dec)" fill-opacity="0.32"/>
<path d="M173.0 78h8v2h-8z" fill="url(#dec)" fill-opacity="0.30"/>
<path d="M173.0 76h7v2h-7z" fill="url(#dec)" fill-opacity="0.23"/>
<path d="M173.0 74h5v2h-5z" fill="url(#dec)" fill-opacity="0.31"/>
<rect x="136.0" y="102" width="37" height="46" fill="url(#bands)"/>
<rect x="701.0" y="0" width="37" height="60" fill="#fff" fill-opacity=".03"/>
<rect x="703.0" y="48" width="12" height="11" fill="#fff" fill-opacity=".10"/>
<rect x="701.0" y="60" width="6" height="88" fill="url(#gL)" fill-opacity="1.00"/>
<rect x="707.0" y="60" width="6" height="88" fill="url(#gL)" fill-opacity="0.93"/>
<rect x="713.0" y="60" width="6" height="88" fill="url(#gM)" fill-opacity="1.00"/>
<rect x="719.0" y="60" width="7" height="88" fill="url(#gM)" fill-opacity="0.93"/>
<rect x="726.0" y="60" width="6" height="88" fill="url(#gR)" fill-opacity="1.00"/>
<rect x="732.0" y="60" width="6" height="88" fill="url(#gR)" fill-opacity="0.92"/>
<path d="M738.0 146h294v2h-294z" fill="url(#dec)" fill-opacity="0.72"/>
<path d="M738.0 144h268v2h-268z" fill="url(#dec)" fill-opacity="0.71"/>
<path d="M738.0 142h244v2h-244z" fill="url(#dec)" fill-opacity="0.71"/>
<path d="M738.0 140h222v2h-222z" fill="url(#dec)" fill-opacity="0.78"/>
<path d="M738.0 138h202v2h-202z" fill="url(#dec)" fill-opacity="0.52"/>
<path d="M738.0 136h184v2h-184z" fill="url(#dec)" fill-opacity="0.73"/>
<path d="M738.0 134h167v2h-167z" fill="url(#dec)" fill-opacity="0.69"/>
<path d="M738.0 132h152v2h-152z" fill="url(#dec)" fill-opacity="0.70"/>
<path d="M738.0 130h138v2h-138z" fill="url(#dec)" fill-opacity="0.49"/>
<path d="M738.0 128h125v2h-125z" fill="url(#dec)" fill-opacity="0.67"/>
<path d="M738.0 126h114v2h-114z" fill="url(#dec)" fill-opacity="0.68"/>
<path d="M738.0 124h103v2h-103z" fill="url(#dec)" fill-opacity="0.67"/>
<path d="M738.0 122h93v2h-93z" fill="url(#dec)" fill-opacity="0.69"/>
<path d="M738.0 120h85v2h-85z" fill="url(#dec)" fill-opacity="0.48"/>
<path d="M738.0 118h77v2h-77z" fill="url(#dec)" fill-opacity="0.68"/>
<path d="M738.0 116h69v2h-69z" fill="url(#dec)" fill-opacity="0.64"/>
<path d="M738.0 114h63v2h-63z" fill="url(#dec)" fill-opacity="0.62"/>
<path d="M738.0 112h56v2h-56z" fill="url(#dec)" fill-opacity="0.41"/>
<path d="M738.0 110h51v2h-51z" fill="url(#dec)" fill-opacity="0.50"/>
<path d="M738.0 108h46v2h-46z" fill="url(#dec)" fill-opacity="0.52"/>
<path d="M738.0 106h41v2h-41z" fill="url(#dec)" fill-opacity="0.50"/>
<path d="M738.0 104h37v2h-37z" fill="url(#dec)" fill-opacity="0.46"/>
<path d="M738.0 102h33v2h-33z" fill="url(#dec)" fill-opacity="0.31"/>
<path d="M738.0 100h29v2h-29z" fill="url(#dec)" fill-opacity="0.43"/>
<path d="M738.0 98h26v2h-26z" fill="url(#dec)" fill-opacity="0.38"/>
<path d="M738.0 96h23v2h-23z" fill="url(#dec)" fill-opacity="0.40"/>
<path d="M738.0 94h20v2h-20z" fill="url(#dec)" fill-opacity="0.27"/>
<path d="M738.0 92h18v2h-18z" fill="url(#dec)" fill-opacity="0.35"/>
<path d="M738.0 90h16v2h-16z" fill="url(#dec)" fill-opacity="0.33"/>
<path d="M738.0 88h14v2h-14z" fill="url(#dec)" fill-opacity="0.35"/>
<path d="M738.0 86h12v2h-12z" fill="url(#dec)" fill-opacity="0.34"/>
<path d="M738.0 84h10v2h-10z" fill="url(#dec)" fill-opacity="0.21"/>
<path d="M738.0 82h8v2h-8z" fill="url(#dec)" fill-opacity="0.32"/>
<path d="M738.0 80h7v2h-7z" fill="url(#dec)" fill-opacity="0.30"/>
<path d="M738.0 78h6v2h-6z" fill="url(#dec)" fill-opacity="0.29"/>
<path d="M738.0 76h4v2h-4z" fill="url(#dec)" fill-opacity="0.21"/>
<rect x="701.0" y="102" width="37" height="46" fill="url(#bands)"/>
<rect x="1265.0" y="0" width="37" height="60" fill="#fff" fill-opacity=".03"/>
<rect x="1267.0" y="48" width="12" height="11" fill="#fff" fill-opacity=".10"/>
<rect x="1265.0" y="60" width="6" height="88" fill="url(#gL)" fill-opacity="1.00"/>
<rect x="1271.0" y="60" width="6" height="88" fill="url(#gL)" fill-opacity="0.93"/>
<rect x="1277.0" y="60" width="6" height="88" fill="url(#gM)" fill-opacity="1.00"/>
<rect x="1283.0" y="60" width="7" height="88" fill="url(#gM)" fill-opacity="0.93"/>
<rect x="1290.0" y="60" width="6" height="88" fill="url(#gR)" fill-opacity="1.00"/>
<rect x="1296.0" y="60" width="6" height="88" fill="url(#gR)" fill-opacity="0.92"/>
<path d="M1302.0 146h480v2h-480z" fill="url(#dec)" fill-opacity="0.79"/>
<path d="M1302.0 144h437v2h-437z" fill="url(#dec)" fill-opacity="0.79"/>
<path d="M1302.0 142h398v2h-398z" fill="url(#dec)" fill-opacity="0.70"/>
<path d="M1302.0 140h362v2h-362z" fill="url(#dec)" fill-opacity="0.75"/>
<path d="M1302.0 138h329v2h-329z" fill="url(#dec)" fill-opacity="0.49"/>
<path d="M1302.0 136h300v2h-300z" fill="url(#dec)" fill-opacity="0.74"/>
<path d="M1302.0 134h272v2h-272z" fill="url(#dec)" fill-opacity="0.69"/>
<path d="M1302.0 132h248v2h-248z" fill="url(#dec)" fill-opacity="0.74"/>
<path d="M1302.0 130h225v2h-225z" fill="url(#dec)" fill-opacity="0.53"/>
<path d="M1302.0 128h204v2h-204z" fill="url(#dec)" fill-opacity="0.68"/>
<path d="M1302.0 126h185v2h-185z" fill="url(#dec)" fill-opacity="0.72"/>
<path d="M1302.0 124h168v2h-168z" fill="url(#dec)" fill-opacity="0.65"/>
<path d="M1302.0 122h152v2h-152z" fill="url(#dec)" fill-opacity="0.62"/>
<path d="M1302.0 120h138v2h-138z" fill="url(#dec)" fill-opacity="0.47"/>
<path d="M1302.0 118h125v2h-125z" fill="url(#dec)" fill-opacity="0.60"/>
<path d="M1302.0 116h113v2h-113z" fill="url(#dec)" fill-opacity="0.59"/>
<path d="M1302.0 114h102v2h-102z" fill="url(#dec)" fill-opacity="0.58"/>
<path d="M1302.0 112h92v2h-92z" fill="url(#dec)" fill-opacity="0.41"/>
<path d="M1302.0 110h83v2h-83z" fill="url(#dec)" fill-opacity="0.50"/>
<path d="M1302.0 108h74v2h-74z" fill="url(#dec)" fill-opacity="0.47"/>
<path d="M1302.0 106h67v2h-67z" fill="url(#dec)" fill-opacity="0.49"/>
<path d="M1302.0 104h60v2h-60z" fill="url(#dec)" fill-opacity="0.43"/>
<path d="M1302.0 102h53v2h-53z" fill="url(#dec)" fill-opacity="0.33"/>
<path d="M1302.0 100h48v2h-48z" fill="url(#dec)" fill-opacity="0.44"/>
<path d="M1302.0 98h42v2h-42z" fill="url(#dec)" fill-opacity="0.39"/>
<path d="M1302.0 96h38v2h-38z" fill="url(#dec)" fill-opacity="0.38"/>
<path d="M1302.0 94h33v2h-33z" fill="url(#dec)" fill-opacity="0.27"/>
<path d="M1302.0 92h29v2h-29z" fill="url(#dec)" fill-opacity="0.37"/>
<path d="M1302.0 90h25v2h-25z" fill="url(#dec)" fill-opacity="0.35"/>
<path d="M1302.0 88h22v2h-22z" fill="url(#dec)" fill-opacity="0.34"/>
<path d="M1302.0 86h19v2h-19z" fill="url(#dec)" fill-opacity="0.33"/>
<path d="M1302.0 84h16v2h-16z" fill="url(#dec)" fill-opacity="0.24"/>
<path d="M1302.0 82h14v2h-14z" fill="url(#dec)" fill-opacity="0.31"/>
<path d="M1302.0 80h11v2h-11z" fill="url(#dec)" fill-opacity="0.30"/>
<path d="M1302.0 78h9v2h-9z" fill="url(#dec)" fill-opacity="0.31"/>
<path d="M1302.0 76h7v2h-7z" fill="url(#dec)" fill-opacity="0.20"/>
<path d="M1302.0 74h5v2h-5z" fill="url(#dec)" fill-opacity="0.28"/>
<rect x="1265.0" y="102" width="37" height="46" fill="url(#bands)"/>
<rect x="1830.0" y="0" width="37" height="60" fill="#fff" fill-opacity=".03"/>
<rect x="1832.0" y="48" width="12" height="11" fill="#fff" fill-opacity=".10"/>
<rect x="1830.0" y="60" width="6" height="88" fill="url(#gL)" fill-opacity="1.00"/>
<rect x="1836.0" y="60" width="6" height="88" fill="url(#gL)" fill-opacity="0.93"/>
<rect x="1842.0" y="60" width="6" height="88" fill="url(#gM)" fill-opacity="1.00"/>
<rect x="1848.0" y="60" width="7" height="88" fill="url(#gM)" fill-opacity="0.93"/>
<rect x="1855.0" y="60" width="6" height="88" fill="url(#gR)" fill-opacity="1.00"/>
<rect x="1861.0" y="60" width="6" height="88" fill="url(#gR)" fill-opacity="0.92"/>
<path d="M1867.0 146h589v2h-589z" fill="url(#dec)" fill-opacity="0.81"/>
<path d="M1867.0 144h536v2h-536z" fill="url(#dec)" fill-opacity="0.75"/>
<path d="M1867.0 142h488v2h-488z" fill="url(#dec)" fill-opacity="0.75"/>
<path d="M1867.0 140h444v2h-444z" fill="url(#dec)" fill-opacity="0.68"/>
<path d="M1867.0 138h404v2h-404z" fill="url(#dec)" fill-opacity="0.52"/>
<path d="M1867.0 136h368v2h-368z" fill="url(#dec)" fill-opacity="0.73"/>
<path d="M1867.0 134h334v2h-334z" fill="url(#dec)" fill-opacity="0.66"/>
<path d="M1867.0 132h304v2h-304z" fill="url(#dec)" fill-opacity="0.71"/>
<path d="M1867.0 130h276v2h-276z" fill="url(#dec)" fill-opacity="0.51"/>
<path d="M1867.0 128h251v2h-251z" fill="url(#dec)" fill-opacity="0.64"/>
<path d="M1867.0 126h227v2h-227z" fill="url(#dec)" fill-opacity="0.69"/>
<path d="M1867.0 124h206v2h-206z" fill="url(#dec)" fill-opacity="0.66"/>
<path d="M1867.0 122h187v2h-187z" fill="url(#dec)" fill-opacity="0.67"/>
<path d="M1867.0 120h169v2h-169z" fill="url(#dec)" fill-opacity="0.46"/>
<path d="M1867.0 118h153v2h-153z" fill="url(#dec)" fill-opacity="0.66"/>
<path d="M1867.0 116h138v2h-138z" fill="url(#dec)" fill-opacity="0.63"/>
<path d="M1867.0 114h125v2h-125z" fill="url(#dec)" fill-opacity="0.54"/>
<path d="M1867.0 112h113v2h-113z" fill="url(#dec)" fill-opacity="0.37"/>
<path d="M1867.0 110h102v2h-102z" fill="url(#dec)" fill-opacity="0.54"/>
<path d="M1867.0 108h91v2h-91z" fill="url(#dec)" fill-opacity="0.53"/>
<path d="M1867.0 106h82v2h-82z" fill="url(#dec)" fill-opacity="0.45"/>
<path d="M1867.0 104h73v2h-73z" fill="url(#dec)" fill-opacity="0.44"/>
<path d="M1867.0 102h66v2h-66z" fill="url(#dec)" fill-opacity="0.31"/>
<path d="M1867.0 100h59v2h-59z" fill="url(#dec)" fill-opacity="0.40"/>
<path d="M1867.0 98h52v2h-52z" fill="url(#dec)" fill-opacity="0.39"/>
<path d="M1867.0 96h46v2h-46z" fill="url(#dec)" fill-opacity="0.38"/>
<path d="M1867.0 94h41v2h-41z" fill="url(#dec)" fill-opacity="0.26"/>
<path d="M1867.0 92h36v2h-36z" fill="url(#dec)" fill-opacity="0.36"/>
<path d="M1867.0 90h31v2h-31z" fill="url(#dec)" fill-opacity="0.34"/>
<path d="M1867.0 88h27v2h-27z" fill="url(#dec)" fill-opacity="0.33"/>
<path d="M1867.0 86h23v2h-23z" fill="url(#dec)" fill-opacity="0.33"/>
<path d="M1867.0 84h20v2h-20z" fill="url(#dec)" fill-opacity="0.21"/>
<path d="M1867.0 82h17v2h-17z" fill="url(#dec)" fill-opacity="0.31"/>
<path d="M1867.0 80h14v2h-14z" fill="url(#dec)" fill-opacity="0.32"/>
<path d="M1867.0 78h11v2h-11z" fill="url(#dec)" fill-opacity="0.29"/>
<path d="M1867.0 76h9v2h-9z" fill="url(#dec)" fill-opacity="0.20"/>
<path d="M1867.0 74h7v2h-7z" fill="url(#dec)" fill-opacity="0.30"/>
<path d="M1867.0 72h5v2h-5z" fill="url(#dec)" fill-opacity="0.27"/>
<rect x="1830.0" y="102" width="37" height="46" fill="url(#bands)"/>
<rect x="137.0" y="284" width="6" height="14" fill="#fff" fill-opacity="0.45"/>
<rect x="137.0" y="268" width="6" height="10" fill="#fff" fill-opacity="0.45"/>
<rect x="137.0" y="210" width="6" height="52" fill="#fff" fill-opacity="0.45"/>
<rect x="701.0" y="150" width="37" height="60" fill="#fff" fill-opacity=".03"/>
<rect x="703.0" y="198" width="12" height="11" fill="#fff" fill-opacity=".10"/>
<rect x="701.0" y="210" width="6" height="88" fill="url(#gL)" fill-opacity="0.64"/>
<rect x="707.0" y="210" width="6" height="88" fill="url(#gL)" fill-opacity="0.60"/>
<rect x="713.0" y="210" width="6" height="88" fill="url(#gM)" fill-opacity="0.51"/>
<rect x="719.0" y="210" width="7" height="88" fill="url(#gM)" fill-opacity="0.45"/>
<rect x="726.0" y="210" width="6" height="88" fill="url(#gR)" fill-opacity="0.50"/>
<rect x="732.0" y="210" width="6" height="88" fill="url(#gR)" fill-opacity="0.41"/>
<path d="M738.0 296h218v2h-218z" fill="url(#dec)" fill-opacity="0.26"/>
<path d="M738.0 294h199v2h-199z" fill="url(#dec)" fill-opacity="0.27"/>
<path d="M738.0 292h181v2h-181z" fill="url(#dec)" fill-opacity="0.27"/>
<path d="M738.0 290h165v2h-165z" fill="url(#dec)" fill-opacity="0.25"/>
<path d="M738.0 288h150v2h-150z" fill="url(#dec)" fill-opacity="0.18"/>
<path d="M738.0 286h136v2h-136z" fill="url(#dec)" fill-opacity="0.25"/>
<path d="M738.0 284h124v2h-124z" fill="url(#dec)" fill-opacity="0.27"/>
<path d="M738.0 282h113v2h-113z" fill="url(#dec)" fill-opacity="0.25"/>
<path d="M738.0 280h102v2h-102z" fill="url(#dec)" fill-opacity="0.19"/>
<path d="M738.0 278h93v2h-93z" fill="url(#dec)" fill-opacity="0.23"/>
<path d="M738.0 276h84v2h-84z" fill="url(#dec)" fill-opacity="0.24"/>
<path d="M738.0 274h76v2h-76z" fill="url(#dec)" fill-opacity="0.24"/>
<path d="M738.0 272h69v2h-69z" fill="url(#dec)" fill-opacity="0.25"/>
<path d="M738.0 270h63v2h-63z" fill="url(#dec)" fill-opacity="0.17"/>
<path d="M738.0 268h57v2h-57z" fill="url(#dec)" fill-opacity="0.22"/>
<path d="M738.0 266h51v2h-51z" fill="url(#dec)" fill-opacity="0.21"/>
<path d="M738.0 264h46v2h-46z" fill="url(#dec)" fill-opacity="0.21"/>
<path d="M738.0 262h42v2h-42z" fill="url(#dec)" fill-opacity="0.14"/>
<path d="M738.0 260h38v2h-38z" fill="url(#dec)" fill-opacity="0.20"/>
<path d="M738.0 258h34v2h-34z" fill="url(#dec)" fill-opacity="0.19"/>
<path d="M738.0 256h30v2h-30z" fill="url(#dec)" fill-opacity="0.16"/>
<path d="M738.0 254h27v2h-27z" fill="url(#dec)" fill-opacity="0.15"/>
<path d="M738.0 252h24v2h-24z" fill="url(#dec)" fill-opacity="0.11"/>
<path d="M738.0 250h22v2h-22z" fill="url(#dec)" fill-opacity="0.15"/>
<path d="M738.0 248h19v2h-19z" fill="url(#dec)" fill-opacity="0.15"/>
<path d="M738.0 246h17v2h-17z" fill="url(#dec)" fill-opacity="0.14"/>
<path d="M738.0 244h15v2h-15z" fill="url(#dec)" fill-opacity="0.09"/>
<path d="M738.0 242h13v2h-13z" fill="url(#dec)" fill-opacity="0.13"/>
<path d="M738.0 240h12v2h-12z" fill="url(#dec)" fill-opacity="0.13"/>
<path d="M738.0 238h10v2h-10z" fill="url(#dec)" fill-opacity="0.12"/>
<path d="M738.0 236h9v2h-9z" fill="url(#dec)" fill-opacity="0.11"/>
<path d="M738.0 234h7v2h-7z" fill="url(#dec)" fill-opacity="0.08"/>
<path d="M738.0 232h6v2h-6z" fill="url(#dec)" fill-opacity="0.11"/>
<path d="M738.0 230h5v2h-5z" fill="url(#dec)" fill-opacity="0.11"/>
<path d="M738.0 228h4v2h-4z" fill="url(#dec)" fill-opacity="0.11"/>
<rect x="701.0" y="252" width="37" height="46" fill="url(#bands)"/>
<rect x="1265.0" y="150" width="37" height="60" fill="#fff" fill-opacity=".03"/>
<rect x="1267.0" y="198" width="12" height="11" fill="#fff" fill-opacity=".10"/>
<rect x="1265.0" y="210" width="6" height="88" fill="url(#gL)" fill-opacity="0.82"/>
<rect x="1271.0" y="210" width="6" height="88" fill="url(#gL)" fill-opacity="0.76"/>
<rect x="1277.0" y="210" width="6" height="88" fill="url(#gM)" fill-opacity="0.43"/>
<rect x="1283.0" y="210" width="7" height="88" fill="url(#gM)" fill-opacity="0.38"/>
<rect x="1290.0" y="210" width="6" height="88" fill="url(#gR)" fill-opacity="0.41"/>
<rect x="1296.0" y="210" width="6" height="88" fill="url(#gR)" fill-opacity="0.34"/>
<path d="M1302.0 296h164v2h-164z" fill="url(#dec)" fill-opacity="0.19"/>
<path d="M1302.0 294h149v2h-149z" fill="url(#dec)" fill-opacity="0.18"/>
<path d="M1302.0 292h136v2h-136z" fill="url(#dec)" fill-opacity="0.20"/>
<path d="M1302.0 290h123v2h-123z" fill="url(#dec)" fill-opacity="0.20"/>
<path d="M1302.0 288h112v2h-112z" fill="url(#dec)" fill-opacity="0.14"/>
<path d="M1302.0 286h102v2h-102z" fill="url(#dec)" fill-opacity="0.18"/>
<path d="M1302.0 284h93v2h-93z" fill="url(#dec)" fill-opacity="0.19"/>
<path d="M1302.0 282h84v2h-84z" fill="url(#dec)" fill-opacity="0.19"/>
<path d="M1302.0 280h77v2h-77z" fill="url(#dec)" fill-opacity="0.12"/>
<path d="M1302.0 278h70v2h-70z" fill="url(#dec)" fill-opacity="0.18"/>
<path d="M1302.0 276h63v2h-63z" fill="url(#dec)" fill-opacity="0.18"/>
<path d="M1302.0 274h57v2h-57z" fill="url(#dec)" fill-opacity="0.18"/>
<path d="M1302.0 272h52v2h-52z" fill="url(#dec)" fill-opacity="0.17"/>
<path d="M1302.0 270h47v2h-47z" fill="url(#dec)" fill-opacity="0.12"/>
<path d="M1302.0 268h43v2h-43z" fill="url(#dec)" fill-opacity="0.16"/>
<path d="M1302.0 266h38v2h-38z" fill="url(#dec)" fill-opacity="0.15"/>
<path d="M1302.0 264h35v2h-35z" fill="url(#dec)" fill-opacity="0.14"/>
<path d="M1302.0 262h31v2h-31z" fill="url(#dec)" fill-opacity="0.10"/>
<path d="M1302.0 260h28v2h-28z" fill="url(#dec)" fill-opacity="0.13"/>
<path d="M1302.0 258h25v2h-25z" fill="url(#dec)" fill-opacity="0.13"/>
<path d="M1302.0 256h23v2h-23z" fill="url(#dec)" fill-opacity="0.11"/>
<path d="M1302.0 254h20v2h-20z" fill="url(#dec)" fill-opacity="0.12"/>
<path d="M1302.0 252h18v2h-18z" fill="url(#dec)" fill-opacity="0.08"/>
<path d="M1302.0 250h16v2h-16z" fill="url(#dec)" fill-opacity="0.11"/>
<path d="M1302.0 248h14v2h-14z" fill="url(#dec)" fill-opacity="0.11"/>
<path d="M1302.0 246h13v2h-13z" fill="url(#dec)" fill-opacity="0.11"/>
<path d="M1302.0 244h11v2h-11z" fill="url(#dec)" fill-opacity="0.07"/>
<path d="M1302.0 242h10v2h-10z" fill="url(#dec)" fill-opacity="0.09"/>
<path d="M1302.0 240h9v2h-9z" fill="url(#dec)" fill-opacity="0.09"/>
<path d="M1302.0 238h8v2h-8z" fill="url(#dec)" fill-opacity="0.08"/>
<path d="M1302.0 236h6v2h-6z" fill="url(#dec)" fill-opacity="0.08"/>
<path d="M1302.0 234h6v2h-6z" fill="url(#dec)" fill-opacity="0.06"/>
<path d="M1302.0 232h5v2h-5z" fill="url(#dec)" fill-opacity="0.08"/>
<rect x="1265.0" y="252" width="37" height="46" fill="url(#bands)"/>
<rect x="1831.0" y="290" width="6" height="8" fill="#fff" fill-opacity="0.52"/>
<rect x="1831.0" y="274" width="6" height="10" fill="#fff" fill-opacity="0.52"/>
<rect x="1831.0" y="242" width="6" height="25" fill="#fff" fill-opacity="0.52"/>
<rect x="1831.0" y="210" width="6" height="28" fill="#fff" fill-opacity="0.52"/>
<rect x="136.0" y="300" width="37" height="60" fill="#fff" fill-opacity=".03"/>
<rect x="138.0" y="348" width="12" height="11" fill="#fff" fill-opacity=".10"/>
<rect x="136.0" y="360" width="6" height="88" fill="url(#gL)" fill-opacity="0.90"/>
<rect x="142.0" y="360" width="6" height="88" fill="url(#gL)" fill-opacity="0.84"/>
<rect x="148.0" y="360" width="6" height="88" fill="url(#gM)" fill-opacity="0.81"/>
<rect x="154.0" y="360" width="7" height="88" fill="url(#gM)" fill-opacity="0.71"/>
<rect x="161.0" y="360" width="6" height="88" fill="url(#gR)" fill-opacity="0.81"/>
<rect x="167.0" y="360" width="6" height="88" fill="url(#gR)" fill-opacity="0.66"/>
<rect x="136.0" y="402" width="37" height="46" fill="url(#bands)"/>
<rect x="701.0" y="300" width="37" height="60" fill="#fff" fill-opacity=".03"/>
<rect x="703.0" y="348" width="12" height="11" fill="#fff" fill-opacity=".10"/>
<rect x="701.0" y="360" width="6" height="88" fill="url(#gL)" fill-opacity="0.95"/>
<rect x="707.0" y="360" width="6" height="88" fill="url(#gL)" fill-opacity="0.88"/>
<rect x="713.0" y="360" width="6" height="88" fill="url(#gM)" fill-opacity="0.96"/>
<rect x="719.0" y="360" width="7" height="88" fill="url(#gM)" fill-opacity="0.84"/>
<rect x="726.0" y="360" width="6" height="88" fill="url(#gR)" fill-opacity="0.96"/>
<rect x="732.0" y="360" width="6" height="88" fill="url(#gR)" fill-opacity="0.79"/>
<path d="M738.0 446h272v2h-272z" fill="url(#dec)" fill-opacity="0.58"/>
<path d="M738.0 444h248v2h-248z" fill="url(#dec)" fill-opacity="0.61"/>
<path d="M738.0 442h226v2h-226z" fill="url(#dec)" fill-opacity="0.58"/>
<path d="M738.0 440h206v2h-206z" fill="url(#dec)" fill-opacity="0.55"/>
<path d="M738.0 438h187v2h-187z" fill="url(#dec)" fill-opacity="0.39"/>
<path d="M738.0 436h170v2h-170z" fill="url(#dec)" fill-opacity="0.58"/>
<path d="M738.0 434h155v2h-155z" fill="url(#dec)" fill-opacity="0.54"/>
<path d="M738.0 432h141v2h-141z" fill="url(#dec)" fill-opacity="0.56"/>
<path d="M738.0 430h128v2h-128z" fill="url(#dec)" fill-opacity="0.38"/>
<path d="M738.0 428h116v2h-116z" fill="url(#dec)" fill-opacity="0.50"/>
<path d="M738.0 426h105v2h-105z" fill="url(#dec)" fill-opacity="0.52"/>
<path d="M738.0 424h96v2h-96z" fill="url(#dec)" fill-opacity="0.53"/>
<path d="M738.0 422h87v2h-87z" fill="url(#dec)" fill-opacity="0.48"/>
<path d="M738.0 420h78v2h-78z" fill="url(#dec)" fill-opacity="0.37"/>
<path d="M738.0 418h71v2h-71z" fill="url(#dec)" fill-opacity="0.52"/>
<path d="M738.0 416h64v2h-64z" fill="url(#dec)" fill-opacity="0.49"/>
<path d="M738.0 414h58v2h-58z" fill="url(#dec)" fill-opacity="0.47"/>
<path d="M738.0 412h52v2h-52z" fill="url(#dec)" fill-opacity="0.29"/>
<path d="M738.0 410h47v2h-47z" fill="url(#dec)" fill-opacity="0.41"/>
<path d="M738.0 408h42v2h-42z" fill="url(#dec)" fill-opacity="0.40"/>
<path d="M738.0 406h38v2h-38z" fill="url(#dec)" fill-opacity="0.34"/>
<path d="M738.0 404h34v2h-34z" fill="url(#dec)" fill-opacity="0.33"/>
<path d="M738.0 402h30v2h-30z" fill="url(#dec)" fill-opacity="0.23"/>
<path d="M738.0 400h27v2h-27z" fill="url(#dec)" fill-opacity="0.32"/>
<path d="M738.0 398h24v2h-24z" fill="url(#dec)" fill-opacity="0.30"/>
<path d="M738.0 396h21v2h-21z" fill="url(#dec)" fill-opacity="0.30"/>
<path d="M738.0 394h19v2h-19z" fill="url(#dec)" fill-opacity="0.21"/>
<path d="M738.0 392h17v2h-17z" fill="url(#dec)" fill-opacity="0.26"/>
<path d="M738.0 390h14v2h-14z" fill="url(#dec)" fill-opacity="0.25"/>
<path d="M738.0 388h13v2h-13z" fill="url(#dec)" fill-opacity="0.24"/>
<path d="M738.0 386h11v2h-11z" fill="url(#dec)" fill-opacity="0.23"/>
<path d="M738.0 384h9v2h-9z" fill="url(#dec)" fill-opacity="0.16"/>
<path d="M738.0 382h8v2h-8z" fill="url(#dec)" fill-opacity="0.25"/>
<path d="M738.0 380h6v2h-6z" fill="url(#dec)" fill-opacity="0.25"/>
<path d="M738.0 378h5v2h-5z" fill="url(#dec)" fill-opacity="0.22"/>
<path d="M738.0 376h4v2h-4z" fill="url(#dec)" fill-opacity="0.16"/>
<rect x="701.0" y="402" width="37" height="46" fill="url(#bands)"/>
<rect x="1266.0" y="360" width="4" height="88" fill="#fff" fill-opacity="0.20"/>
<rect x="1830.0" y="300" width="37" height="60" fill="#fff" fill-opacity=".03"/>
<rect x="1832.0" y="348" width="12" height="11" fill="#fff" fill-opacity=".10"/>
<rect x="1830.0" y="360" width="6" height="88" fill="url(#gL)" fill-opacity="0.92"/>
<rect x="1836.0" y="360" width="6" height="88" fill="url(#gL)" fill-opacity="0.86"/>
<rect x="1842.0" y="360" width="6" height="88" fill="url(#gM)" fill-opacity="0.83"/>
<rect x="1848.0" y="360" width="7" height="88" fill="url(#gM)" fill-opacity="0.73"/>
<rect x="1855.0" y="360" width="6" height="88" fill="url(#gR)" fill-opacity="0.82"/>
<rect x="1861.0" y="360" width="6" height="88" fill="url(#gR)" fill-opacity="0.68"/>
<rect x="1830.0" y="402" width="37" height="46" fill="url(#bands)"/>
<rect x="136.0" y="450" width="37" height="60" fill="#fff" fill-opacity=".03"/>
<rect x="138.0" y="498" width="12" height="11" fill="#fff" fill-opacity=".10"/>
<rect x="136.0" y="510" width="6" height="88" fill="url(#gL)" fill-opacity="1.00"/>
<rect x="142.0" y="510" width="6" height="88" fill="url(#gL)" fill-opacity="0.93"/>
<rect x="148.0" y="510" width="6" height="88" fill="url(#gM)" fill-opacity="1.00"/>
<rect x="154.0" y="510" width="7" height="88" fill="url(#gM)" fill-opacity="0.93"/>
<rect x="161.0" y="510" width="6" height="88" fill="url(#gR)" fill-opacity="1.00"/>
<rect x="167.0" y="510" width="6" height="88" fill="url(#gR)" fill-opacity="0.92"/>
<path d="M173.0 596h262v2h-262z" fill="url(#dec)" fill-opacity="0.74"/>
<path d="M173.0 594h238v2h-238z" fill="url(#dec)" fill-opacity="0.73"/>
<path d="M173.0 592h217v2h-217z" fill="url(#dec)" fill-opacity="0.73"/>
<path d="M173.0 590h197v2h-197z" fill="url(#dec)" fill-opacity="0.75"/>
<path d="M173.0 588h180v2h-180z" fill="url(#dec)" fill-opacity="0.53"/>
<path d="M173.0 586h163v2h-163z" fill="url(#dec)" fill-opacity="0.70"/>
<path d="M173.0 584h149v2h-149z" fill="url(#dec)" fill-opacity="0.68"/>
<path d="M173.0 582h135v2h-135z" fill="url(#dec)" fill-opacity="0.68"/>
<path d="M173.0 580h123v2h-123z" fill="url(#dec)" fill-opacity="0.47"/>
<path d="M173.0 578h111v2h-111z" fill="url(#dec)" fill-opacity="0.69"/>
<path d="M173.0 576h101v2h-101z" fill="url(#dec)" fill-opacity="0.69"/>
<path d="M173.0 574h92v2h-92z" fill="url(#dec)" fill-opacity="0.65"/>
<path d="M173.0 572h83v2h-83z" fill="url(#dec)" fill-opacity="0.62"/>
<path d="M173.0 570h75v2h-75z" fill="url(#dec)" fill-opacity="0.45"/>
<path d="M173.0 568h68v2h-68z" fill="url(#dec)" fill-opacity="0.63"/>
<path d="M173.0 566h62v2h-62z" fill="url(#dec)" fill-opacity="0.62"/>
<path d="M173.0 564h56v2h-56z" fill="url(#dec)" fill-opacity="0.61"/>
<path d="M173.0 562h50v2h-50z" fill="url(#dec)" fill-opacity="0.39"/>
<path d="M173.0 560h45v2h-45z" fill="url(#dec)" fill-opacity="0.55"/>
<path d="M173.0 558h41v2h-41z" fill="url(#dec)" fill-opacity="0.51"/>
<path d="M173.0 556h36v2h-36z" fill="url(#dec)" fill-opacity="0.46"/>
<path d="M173.0 554h33v2h-33z" fill="url(#dec)" fill-opacity="0.43"/>
<path d="M173.0 552h29v2h-29z" fill="url(#dec)" fill-opacity="0.31"/>
<path d="M173.0 550h26v2h-26z" fill="url(#dec)" fill-opacity="0.43"/>
<path d="M173.0 548h23v2h-23z" fill="url(#dec)" fill-opacity="0.40"/>
<path d="M173.0 546h20v2h-20z" fill="url(#dec)" fill-opacity="0.40"/>
<path d="M173.0 544h18v2h-18z" fill="url(#dec)" fill-opacity="0.27"/>
<path d="M173.0 542h16v2h-16z" fill="url(#dec)" fill-opacity="0.35"/>
<path d="M173.0 540h14v2h-14z" fill="url(#dec)" fill-opacity="0.35"/>
<path d="M173.0 538h12v2h-12z" fill="url(#dec)" fill-opacity="0.34"/>
<path d="M173.0 536h10v2h-10z" fill="url(#dec)" fill-opacity="0.30"/>
<path d="M173.0 534h9v2h-9z" fill="url(#dec)" fill-opacity="0.22"/>
<path d="M173.0 532h7v2h-7z" fill="url(#dec)" fill-opacity="0.31"/>
<path d="M173.0 530h6v2h-6z" fill="url(#dec)" fill-opacity="0.32"/>
<path d="M173.0 528h5v2h-5z" fill="url(#dec)" fill-opacity="0.32"/>
<rect x="136.0" y="552" width="37" height="46" fill="url(#bands)"/>
<rect x="701.0" y="450" width="37" height="60" fill="#fff" fill-opacity=".03"/>
<rect x="703.0" y="498" width="12" height="11" fill="#fff" fill-opacity=".10"/>
<rect x="701.0" y="510" width="6" height="88" fill="url(#gL)" fill-opacity="0.98"/>
<rect x="707.0" y="510" width="6" height="88" fill="url(#gL)" fill-opacity="0.91"/>
<rect x="713.0" y="510" width="6" height="88" fill="url(#gM)" fill-opacity="1.00"/>
<rect x="719.0" y="510" width="7" height="88" fill="url(#gM)" fill-opacity="0.91"/>
<rect x="726.0" y="510" width="6" height="88" fill="url(#gR)" fill-opacity="1.00"/>
<rect x="732.0" y="510" width="6" height="88" fill="url(#gR)" fill-opacity="0.90"/>
<path d="M738.0 596h207v2h-207z" fill="url(#dec)" fill-opacity="0.73"/>
<path d="M738.0 594h189v2h-189z" fill="url(#dec)" fill-opacity="0.78"/>
<path d="M738.0 592h172v2h-172z" fill="url(#dec)" fill-opacity="0.76"/>
<path d="M738.0 590h156v2h-156z" fill="url(#dec)" fill-opacity="0.70"/>
<path d="M738.0 588h142v2h-142z" fill="url(#dec)" fill-opacity="0.51"/>
<path d="M738.0 586h129v2h-129z" fill="url(#dec)" fill-opacity="0.67"/>
<path d="M738.0 584h118v2h-118z" fill="url(#dec)" fill-opacity="0.72"/>
<path d="M738.0 582h107v2h-107z" fill="url(#dec)" fill-opacity="0.70"/>
<path d="M738.0 580h97v2h-97z" fill="url(#dec)" fill-opacity="0.51"/>
<path d="M738.0 578h88v2h-88z" fill="url(#dec)" fill-opacity="0.70"/>
<path d="M738.0 576h80v2h-80z" fill="url(#dec)" fill-opacity="0.68"/>
<path d="M738.0 574h73v2h-73z" fill="url(#dec)" fill-opacity="0.67"/>
<path d="M738.0 572h66v2h-66z" fill="url(#dec)" fill-opacity="0.65"/>
<path d="M738.0 570h60v2h-60z" fill="url(#dec)" fill-opacity="0.43"/>
<path d="M738.0 568h54v2h-54z" fill="url(#dec)" fill-opacity="0.63"/>
<path d="M738.0 566h49v2h-49z" fill="url(#dec)" fill-opacity="0.56"/>
<path d="M738.0 564h44v2h-44z" fill="url(#dec)" fill-opacity="0.54"/>
<path d="M738.0 562h40v2h-40z" fill="url(#dec)" fill-opacity="0.41"/>
<path d="M738.0 560h36v2h-36z" fill="url(#dec)" fill-opacity="0.48"/>
<path d="M738.0 558h32v2h-32z" fill="url(#dec)" fill-opacity="0.46"/>
<path d="M738.0 556h29v2h-29z" fill="url(#dec)" fill-opacity="0.43"/>
<path d="M738.0 554h26v2h-26z" fill="url(#dec)" fill-opacity="0.45"/>
<path d="M738.0 552h23v2h-23z" fill="url(#dec)" fill-opacity="0.29"/>
<path d="M738.0 550h21v2h-21z" fill="url(#dec)" fill-opacity="0.38"/>
<path d="M738.0 548h18v2h-18z" fill="url(#dec)" fill-opacity="0.41"/>
<path d="M738.0 546h16v2h-16z" fill="url(#dec)" fill-opacity="0.36"/>
<path d="M738.0 544h14v2h-14z" fill="url(#dec)" fill-opacity="0.28"/>
<path d="M738.0 542h13v2h-13z" fill="url(#dec)" fill-opacity="0.36"/>
<path d="M738.0 540h11v2h-11z" fill="url(#dec)" fill-opacity="0.36"/>
<path d="M738.0 538h10v2h-10z" fill="url(#dec)" fill-opacity="0.35"/>
<path d="M738.0 536h8v2h-8z" fill="url(#dec)" fill-opacity="0.32"/>
<path d="M738.0 534h7v2h-7z" fill="url(#dec)" fill-opacity="0.23"/>
<path d="M738.0 532h6v2h-6z" fill="url(#dec)" fill-opacity="0.28"/>
<path d="M738.0 530h5v2h-5z" fill="url(#dec)" fill-opacity="0.31"/>
<rect x="701.0" y="552" width="37" height="46" fill="url(#bands)"/>
<rect x="1265.0" y="450" width="37" height="60" fill="#fff" fill-opacity=".03"/>
<rect x="1267.0" y="498" width="12" height="11" fill="#fff" fill-opacity=".10"/>
<rect x="1265.0" y="510" width="6" height="88" fill="url(#gL)" fill-opacity="0.98"/>
<rect x="1271.0" y="510" width="6" height="88" fill="url(#gL)" fill-opacity="0.91"/>
<rect x="1277.0" y="510" width="6" height="88" fill="url(#gM)" fill-opacity="1.00"/>
<rect x="1283.0" y="510" width="7" height="88" fill="url(#gM)" fill-opacity="0.91"/>
<rect x="1290.0" y="510" width="6" height="88" fill="url(#gR)" fill-opacity="1.00"/>
<rect x="1296.0" y="510" width="6" height="88" fill="url(#gR)" fill-opacity="0.90"/>
<path d="M1302.0 596h501v2h-501z" fill="url(#dec)" fill-opacity="0.75"/>
<path d="M1302.0 594h457v2h-457z" fill="url(#dec)" fill-opacity="0.76"/>
<path d="M1302.0 592h416v2h-416z" fill="url(#dec)" fill-opacity="0.69"/>
<path d="M1302.0 590h378v2h-378z" fill="url(#dec)" fill-opacity="0.74"/>
<path d="M1302.0 588h344v2h-344z" fill="url(#dec)" fill-opacity="0.54"/>
<path d="M1302.0 586h313v2h-313z" fill="url(#dec)" fill-opacity="0.66"/>
<path d="M1302.0 584h285v2h-285z" fill="url(#dec)" fill-opacity="0.68"/>
<path d="M1302.0 582h259v2h-259z" fill="url(#dec)" fill-opacity="0.69"/>
<path d="M1302.0 580h235v2h-235z" fill="url(#dec)" fill-opacity="0.51"/>
<path d="M1302.0 578h214v2h-214z" fill="url(#dec)" fill-opacity="0.65"/>
<path d="M1302.0 576h194v2h-194z" fill="url(#dec)" fill-opacity="0.63"/>
<path d="M1302.0 574h176v2h-176z" fill="url(#dec)" fill-opacity="0.63"/>
<path d="M1302.0 572h159v2h-159z" fill="url(#dec)" fill-opacity="0.65"/>
<path d="M1302.0 570h144v2h-144z" fill="url(#dec)" fill-opacity="0.47"/>
<path d="M1302.0 568h130v2h-130z" fill="url(#dec)" fill-opacity="0.62"/>
<path d="M1302.0 566h118v2h-118z" fill="url(#dec)" fill-opacity="0.59"/>
<path d="M1302.0 564h107v2h-107z" fill="url(#dec)" fill-opacity="0.56"/>
<path d="M1302.0 562h96v2h-96z" fill="url(#dec)" fill-opacity="0.38"/>
<path d="M1302.0 560h87v2h-87z" fill="url(#dec)" fill-opacity="0.51"/>
<path d="M1302.0 558h78v2h-78z" fill="url(#dec)" fill-opacity="0.46"/>
<path d="M1302.0 556h70v2h-70z" fill="url(#dec)" fill-opacity="0.46"/>
<path d="M1302.0 554h63v2h-63z" fill="url(#dec)" fill-opacity="0.46"/>
<path d="M1302.0 552h56v2h-56z" fill="url(#dec)" fill-opacity="0.30"/>
<path d="M1302.0 550h50v2h-50z" fill="url(#dec)" fill-opacity="0.42"/>
<path d="M1302.0 548h44v2h-44z" fill="url(#dec)" fill-opacity="0.37"/>
<path d="M1302.0 546h39v2h-39z" fill="url(#dec)" fill-opacity="0.39"/>
<path d="M1302.0 544h35v2h-35z" fill="url(#dec)" fill-opacity="0.27"/>
<path d="M1302.0 542h30v2h-30z" fill="url(#dec)" fill-opacity="0.36"/>
<path d="M1302.0 540h27v2h-27z" fill="url(#dec)" fill-opacity="0.34"/>
<path d="M1302.0 538h23v2h-23z" fill="url(#dec)" fill-opacity="0.33"/>
<path d="M1302.0 536h20v2h-20z" fill="url(#dec)" fill-opacity="0.32"/>
<path d="M1302.0 534h17v2h-17z" fill="url(#dec)" fill-opacity="0.23"/>
<path d="M1302.0 532h14v2h-14z" fill="url(#dec)" fill-opacity="0.29"/>
<path d="M1302.0 530h12v2h-12z" fill="url(#dec)" fill-opacity="0.28"/>
<path d="M1302.0 528h10v2h-10z" fill="url(#dec)" fill-opacity="0.30"/>
<path d="M1302.0 526h8v2h-8z" fill="url(#dec)" fill-opacity="0.22"/>
<path d="M1302.0 524h6v2h-6z" fill="url(#dec)" fill-opacity="0.28"/>
<path d="M1302.0 522h4v2h-4z" fill="url(#dec)" fill-opacity="0.28"/>
<rect x="1265.0" y="552" width="37" height="46" fill="url(#bands)"/>
<rect x="1830.0" y="450" width="37" height="60" fill="#fff" fill-opacity=".03"/>
<rect x="1832.0" y="498" width="12" height="11" fill="#fff" fill-opacity=".10"/>
<rect x="1830.0" y="510" width="6" height="88" fill="url(#gL)" fill-opacity="1.00"/>
<rect x="1836.0" y="510" width="6" height="88" fill="url(#gL)" fill-opacity="0.93"/>
<rect x="1842.0" y="510" width="6" height="88" fill="url(#gM)" fill-opacity="1.00"/>
<rect x="1848.0" y="510" width="7" height="88" fill="url(#gM)" fill-opacity="0.93"/>
<rect x="1855.0" y="510" width="6" height="88" fill="url(#gR)" fill-opacity="1.00"/>
<rect x="1861.0" y="510" width="6" height="88" fill="url(#gR)" fill-opacity="0.92"/>
<path d="M1867.0 596h458v2h-458z" fill="url(#dec)" fill-opacity="0.78"/>
<path d="M1867.0 594h417v2h-417z" fill="url(#dec)" fill-opacity="0.72"/>
<path d="M1867.0 592h380v2h-380z" fill="url(#dec)" fill-opacity="0.72"/>
<path d="M1867.0 590h346v2h-346z" fill="url(#dec)" fill-opacity="0.70"/>
<path d="M1867.0 588h314v2h-314z" fill="url(#dec)" fill-opacity="0.53"/>
<path d="M1867.0 586h286v2h-286z" fill="url(#dec)" fill-opacity="0.70"/>
<path d="M1867.0 584h260v2h-260z" fill="url(#dec)" fill-opacity="0.68"/>
<path d="M1867.0 582h236v2h-236z" fill="url(#dec)" fill-opacity="0.72"/>
<path d="M1867.0 580h215v2h-215z" fill="url(#dec)" fill-opacity="0.53"/>
<path d="M1867.0 578h195v2h-195z" fill="url(#dec)" fill-opacity="0.66"/>
<path d="M1867.0 576h177v2h-177z" fill="url(#dec)" fill-opacity="0.69"/>
<path d="M1867.0 574h160v2h-160z" fill="url(#dec)" fill-opacity="0.66"/>
<path d="M1867.0 572h145v2h-145z" fill="url(#dec)" fill-opacity="0.69"/>
<path d="M1867.0 570h132v2h-132z" fill="url(#dec)" fill-opacity="0.47"/>
<path d="M1867.0 568h119v2h-119z" fill="url(#dec)" fill-opacity="0.62"/>
<path d="M1867.0 566h108v2h-108z" fill="url(#dec)" fill-opacity="0.59"/>
<path d="M1867.0 564h97v2h-97z" fill="url(#dec)" fill-opacity="0.54"/>
<path d="M1867.0 562h88v2h-88z" fill="url(#dec)" fill-opacity="0.40"/>
<path d="M1867.0 560h79v2h-79z" fill="url(#dec)" fill-opacity="0.52"/>
<path d="M1867.0 558h71v2h-71z" fill="url(#dec)" fill-opacity="0.47"/>
<path d="M1867.0 556h64v2h-64z" fill="url(#dec)" fill-opacity="0.46"/>
<path d="M1867.0 554h57v2h-57z" fill="url(#dec)" fill-opacity="0.43"/>
<path d="M1867.0 552h51v2h-51z" fill="url(#dec)" fill-opacity="0.32"/>
<path d="M1867.0 550h46v2h-46z" fill="url(#dec)" fill-opacity="0.39"/>
<path d="M1867.0 548h40v2h-40z" fill="url(#dec)" fill-opacity="0.43"/>
<path d="M1867.0 546h36v2h-36z" fill="url(#dec)" fill-opacity="0.39"/>
<path d="M1867.0 544h32v2h-32z" fill="url(#dec)" fill-opacity="0.27"/>
<path d="M1867.0 542h28v2h-28z" fill="url(#dec)" fill-opacity="0.36"/>
<path d="M1867.0 540h24v2h-24z" fill="url(#dec)" fill-opacity="0.36"/>
<path d="M1867.0 538h21v2h-21z" fill="url(#dec)" fill-opacity="0.35"/>
<path d="M1867.0 536h18v2h-18z" fill="url(#dec)" fill-opacity="0.32"/>
<path d="M1867.0 534h15v2h-15z" fill="url(#dec)" fill-opacity="0.23"/>
<path d="M1867.0 532h13v2h-13z" fill="url(#dec)" fill-opacity="0.32"/>
<path d="M1867.0 530h11v2h-11z" fill="url(#dec)" fill-opacity="0.32"/>
<path d="M1867.0 528h9v2h-9z" fill="url(#dec)" fill-opacity="0.30"/>
<path d="M1867.0 526h7v2h-7z" fill="url(#dec)" fill-opacity="0.22"/>
<path d="M1867.0 524h5v2h-5z" fill="url(#dec)" fill-opacity="0.31"/>
<rect x="1830.0" y="552" width="37" height="46" fill="url(#bands)"/>
<rect x="1945" y="286" width="81" height="12" fill="url(#decr)" fill-opacity=".22"/>
<rect x="1465" y="441" width="150" height="6" fill="#fff" fill-opacity=".10"/>
<rect x="20" y="60" width="120" height="70" fill="#fff" fill-opacity=".035"/>
</g>
<rect x="0" y="148" width="2026" height="2" fill="#a3a3a3"/>
<rect x="0" y="298" width="2026" height="2" fill="#a3a3a3"/>
<rect x="0" y="448" width="2026" height="2" fill="#a3a3a3"/>
<rect x="624" y="0" width="312" height="148" fill="#fafaff" fill-opacity=".35"/>
<rect x="624" y="150" width="312" height="148" fill="#fafaff" fill-opacity=".35"/>
<rect x="624" y="300" width="312" height="148" fill="#fafaff" fill-opacity=".35"/>
<rect x="624" y="450" width="312" height="148" fill="#fafaff" fill-opacity=".35"/>
</svg>
<svg width="2188" height="1394" viewBox="0 0 2188 1394" shape-rendering="crispEdges">
<rect x="638" y="784" width="2" height="598" fill="#f7baba"/>
<path d="M640.0 785.0L954.0 785.0" stroke="#1c1c1c" stroke-width="2" fill="none"/>
<path d="M640.0 785.0L954.0 785.0" stroke="#d6d4dc" stroke-width="2" stroke-dasharray="6 4" fill="none"/>
<path d="M640.0 931.0L954.0 931.0" stroke="#1c1c1c" stroke-width="2" fill="none"/>
<path d="M640.0 931.0L954.0 931.0" stroke="#d6d4dc" stroke-width="2" stroke-dasharray="6 4" fill="none"/>
<path d="M953.0 784.0L953.0 932.0" stroke="#1c1c1c" stroke-width="2" fill="none"/>
<path d="M953.0 784.0L953.0 932.0" stroke="#d6d4dc" stroke-width="2" stroke-dasharray="6 4" fill="none"/>
<rect x="640" y="786" width="7" height="7" fill="#cbcbd3"/>
<rect x="945" y="786" width="7" height="7" fill="#cbcbd3"/>
<rect x="640" y="923" width="7" height="7" fill="#cbcbd3"/>
<rect x="945" y="923" width="7" height="7" fill="#cbcbd3"/>
<path d="M640.0 935.0L954.0 935.0" stroke="#1c1c1c" stroke-width="2" fill="none"/>
<path d="M640.0 935.0L954.0 935.0" stroke="#d6d4dc" stroke-width="2" stroke-dasharray="6 4" fill="none"/>
<path d="M640.0 1081.0L954.0 1081.0" stroke="#1c1c1c" stroke-width="2" fill="none"/>
<path d="M640.0 1081.0L954.0 1081.0" stroke="#d6d4dc" stroke-width="2" stroke-dasharray="6 4" fill="none"/>
<path d="M953.0 934.0L953.0 1082.0" stroke="#1c1c1c" stroke-width="2" fill="none"/>
<path d="M953.0 934.0L953.0 1082.0" stroke="#d6d4dc" stroke-width="2" stroke-dasharray="6 4" fill="none"/>
<rect x="640" y="936" width="7" height="7" fill="#cbcbd3"/>
<rect x="945" y="936" width="7" height="7" fill="#cbcbd3"/>
<rect x="640" y="1073" width="7" height="7" fill="#cbcbd3"/>
<rect x="945" y="1073" width="7" height="7" fill="#cbcbd3"/>
<path d="M640.0 1085.0L954.0 1085.0" stroke="#1c1c1c" stroke-width="2" fill="none"/>
<path d="M640.0 1085.0L954.0 1085.0" stroke="#d6d4dc" stroke-width="2" stroke-dasharray="6 4" fill="none"/>
<path d="M640.0 1231.0L954.0 1231.0" stroke="#1c1c1c" stroke-width="2" fill="none"/>
<path d="M640.0 1231.0L954.0 1231.0" stroke="#d6d4dc" stroke-width="2" stroke-dasharray="6 4" fill="none"/>
<path d="M953.0 1084.0L953.0 1232.0" stroke="#1c1c1c" stroke-width="2" fill="none"/>
<path d="M953.0 1084.0L953.0 1232.0" stroke="#d6d4dc" stroke-width="2" stroke-dasharray="6 4" fill="none"/>
<rect x="640" y="1086" width="7" height="7" fill="#cbcbd3"/>
<rect x="945" y="1086" width="7" height="7" fill="#cbcbd3"/>
<rect x="640" y="1223" width="7" height="7" fill="#cbcbd3"/>
<rect x="945" y="1223" width="7" height="7" fill="#cbcbd3"/>
<path d="M640.0 1235.0L954.0 1235.0" stroke="#1c1c1c" stroke-width="2" fill="none"/>
<path d="M640.0 1235.0L954.0 1235.0" stroke="#d6d4dc" stroke-width="2" stroke-dasharray="6 4" fill="none"/>
<path d="M640.0 1381.0L954.0 1381.0" stroke="#1c1c1c" stroke-width="2" fill="none"/>
<path d="M640.0 1381.0L954.0 1381.0" stroke="#d6d4dc" stroke-width="2" stroke-dasharray="6 4" fill="none"/>
<path d="M953.0 1234.0L953.0 1382.0" stroke="#1c1c1c" stroke-width="2" fill="none"/>
<path d="M953.0 1234.0L953.0 1382.0" stroke="#d6d4dc" stroke-width="2" stroke-dasharray="6 4" fill="none"/>
<rect x="640" y="1236" width="7" height="7" fill="#cbcbd3"/>
<rect x="945" y="1236" width="7" height="7" fill="#cbcbd3"/>
<rect x="640" y="1373" width="7" height="7" fill="#cbcbd3"/>
<rect x="945" y="1373" width="7" height="7" fill="#cbcbd3"/>
</svg>
<div class="a" style="left:2044px;top:784px;width:144px;height:598px;background:#232323"></div>
<svg width="2188" height="1394" viewBox="0 0 2188 1394" shape-rendering="crispEdges">
<rect x="2044" y="872" width="8" height="2" fill="#a2a2a2"/>
<rect x="2044" y="928" width="8" height="2" fill="#a2a2a2"/>
<rect x="2044" y="932" width="144" height="2" fill="#000"/>
<rect x="2044" y="1022" width="8" height="2" fill="#a2a2a2"/>
<rect x="2044" y="1078" width="8" height="2" fill="#a2a2a2"/>
<rect x="2044" y="1082" width="144" height="2" fill="#000"/>
<rect x="2044" y="1172" width="8" height="2" fill="#a2a2a2"/>
<rect x="2044" y="1228" width="8" height="2" fill="#a2a2a2"/>
<rect x="2044" y="1232" width="144" height="2" fill="#000"/>
<rect x="2044" y="1322" width="8" height="2" fill="#a2a2a2"/>
<rect x="2044" y="1378" width="8" height="2" fill="#a2a2a2"/>
</svg>
<div class="t" style="left:2059.5px;top:791px">Hz</div>
<div class="t" style="left:2060.5px;top:863.5px">10k</div>
<div class="t" style="left:2059.5px;top:941px">Hz</div>
<div class="t" style="left:2060.5px;top:1013.5px">10k</div>
<div class="t" style="left:2059.5px;top:1091px">Hz</div>
<div class="t" style="left:2060.5px;top:1163.5px">10k</div>
<div class="t" style="left:2059.5px;top:1241px">Hz</div>
<div class="t" style="left:2060.5px;top:1313.5px">10k</div>
<div class="a" style="left:14px;top:1384px;width:2174px;height:10px;background:#262626"></div>
<div class="a" style="left:2044px;top:1382px;width:144px;height:2px;background:#000"></div>
<div class="a" style="left:958px;top:754px;width:250px;height:52px;background:rgba(37,37,37,.88);box-shadow:0 0 0 1px rgba(60,60,60,.3) inset"></div>
<div class="a" style="left:958px;top:754px;width:18px;height:52px;background:rgba(95,95,95,.42)"></div>
<svg width="2188" height="1394" viewBox="0 0 2188 1394">
<rect x="964.3" y="770" width="1.6" height="1" fill="#f0f0f0" shape-rendering="crispEdges"/>
<rect x="964.3" y="772" width="1.6" height="1" fill="#f0f0f0" shape-rendering="crispEdges"/>
<rect x="964.3" y="774" width="1.6" height="1" fill="#f0f0f0" shape-rendering="crispEdges"/>
<rect x="964.3" y="776" width="1.6" height="1" fill="#f0f0f0" shape-rendering="crispEdges"/>
<rect x="964.3" y="778" width="1.6" height="1" fill="#f0f0f0" shape-rendering="crispEdges"/>
<rect x="964.3" y="780" width="1.6" height="1" fill="#f0f0f0" shape-rendering="crispEdges"/>
<rect x="964.3" y="782" width="1.6" height="1" fill="#f0f0f0" shape-rendering="crispEdges"/>
<rect x="964.3" y="784" width="1.6" height="1" fill="#f0f0f0" shape-rendering="crispEdges"/>
<rect x="964.3" y="786" width="1.6" height="1" fill="#f0f0f0" shape-rendering="crispEdges"/>
<rect x="964.3" y="788" width="1.6" height="1" fill="#f0f0f0" shape-rendering="crispEdges"/>
<rect x="968.1" y="770" width="1.6" height="1" fill="#f0f0f0" shape-rendering="crispEdges"/>
<rect x="968.1" y="772" width="1.6" height="1" fill="#f0f0f0" shape-rendering="crispEdges"/>
<rect x="968.1" y="774" width="1.6" height="1" fill="#f0f0f0" shape-rendering="crispEdges"/>
<rect x="968.1" y="776" width="1.6" height="1" fill="#f0f0f0" shape-rendering="crispEdges"/>
<rect x="968.1" y="778" width="1.6" height="1" fill="#f0f0f0" shape-rendering="crispEdges"/>
<rect x="968.1" y="780" width="1.6" height="1" fill="#f0f0f0" shape-rendering="crispEdges"/>
<rect x="968.1" y="782" width="1.6" height="1" fill="#f0f0f0" shape-rendering="crispEdges"/>
<rect x="968.1" y="784" width="1.6" height="1" fill="#f0f0f0" shape-rendering="crispEdges"/>
<rect x="968.1" y="786" width="1.6" height="1" fill="#f0f0f0" shape-rendering="crispEdges"/>
<rect x="968.1" y="788" width="1.6" height="1" fill="#f0f0f0" shape-rendering="crispEdges"/>
<rect x="980.0" y="786.4" width="2.1" height="3.4" fill="#8a8a8a"/>
<rect x="984.0" y="783.8" width="2.1" height="6.0" fill="#8a8a8a"/>
<rect x="988.1" y="781.2" width="2.1" height="8.6" fill="#8a8a8a"/>
<rect x="992.1" y="778.6" width="2.1" height="11.2" fill="#8a8a8a"/>
<rect x="996.2" y="776.0" width="2.1" height="13.8" fill="#8a8a8a"/>
<rect x="1000.2" y="773.4" width="2.1" height="16.4" fill="#8a8a8a"/>
<rect x="1004.3" y="769.3" width="2.1" height="20.5" fill="#8a8a8a"/>
<rect x="1008.4" y="762.2" width="1.6" height="27.6" fill="#8a8a8a"/>
<circle cx="1038.9" cy="779" r="16.1" fill="none" stroke="#8a8a8a" stroke-width="3.6"/><rect x="1037.1" y="763" width="3.6" height="15.6" fill="#8a8a8a"/>
<rect x="1170" y="761" width="1.8" height="38" fill="#5c5c5c"/>
<rect x="1177.2" y="767.6" width="25.6" height="25.2" rx="3.5" fill="#1a1a1a" stroke="#393939" stroke-width="1.8"/>
<g fill="#3f9bfb"><path d="M1184 776.2L1189.8 775.7L1192.4 773.2A3.1 3.1 0 1 1 1197 777.6L1194.7 780.4L1193.7 786L1189.3 781.2Z"/><path d="M1190 780.2L1182.3 787.3" stroke="#3f9bfb" stroke-width="2" stroke-linecap="round"/></g>
</svg>
<div class="t" style="left:1066px;top:769.5px;font-size:21.5px"><span style="color:#3d97e8">+0</span><span style="color:#9a9a9a"> dB</span></div>
</body></html>
